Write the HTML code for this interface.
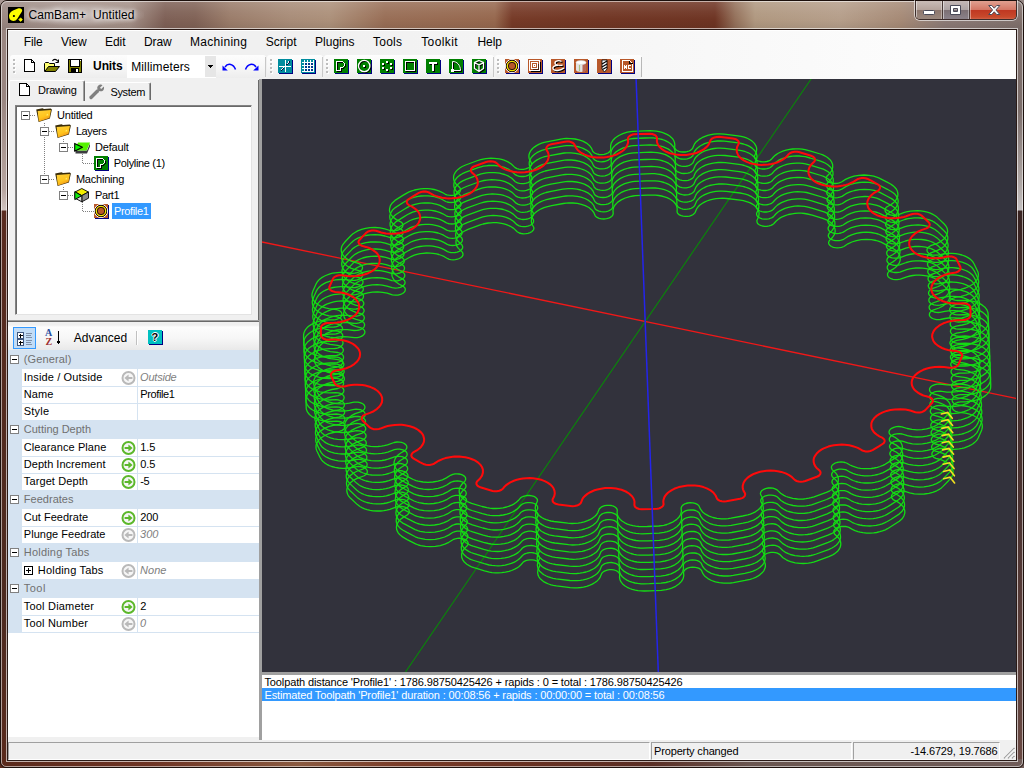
<!DOCTYPE html>
<html><head><meta charset="utf-8"><title>CamBam+ Untitled</title>
<style>
*{box-sizing:border-box}
html,body{margin:0;padding:0}
body{width:1024px;height:768px;position:relative;overflow:hidden;background:#5a2c20;font-family:"Liberation Sans",sans-serif;font-size:11px}
.a{position:absolute}
.t{position:absolute;white-space:pre}
svg{position:absolute;overflow:visible}
.px{shape-rendering:crispEdges}
</style></head>
<body>
<!-- b_frame -->
<div class="a" style="left:0px;top:0px;width:1024px;height:768px;background:#4c2a22"></div>
<div class="a" style="left:0px;top:0px;width:8px;height:768px;background:linear-gradient(180deg,#9a8681 0px,#9a8681 100px,#b8a6a0 190px,#d0c4c0 210px,#5a2c20 211px,#4c2a20 600px,#5a2a1c 768px)"></div>
<div class="a" style="left:1016px;top:0px;width:8px;height:768px;background:linear-gradient(180deg,#80706c 0px,#7c6e6b 110px,#b0a8a6 185px,#c4c0c0 210px,#3a2422 211px,#4a3230 500px,#6a4a44 768px)"></div>
<div class="a" style="left:0px;top:759px;width:1024px;height:9px;background:linear-gradient(90deg,#5a2a1c 0px,#6e3424 150px,#8a5a40 300px,#7a3c28 400px,#6a3222 512px,#5a2e24 650px,#6a5650 750px,#705c58 1024px)"></div>
<div class="a" style="left:0px;top:0px;width:1024px;height:30px;background:linear-gradient(90deg,#9a8681 0px,#a5938c 60px,#a38f86 130px,#7e6056 165px,#806256 195px,#9a7c6a 230px,#a88c78 290px,#ac907a 330px,#986e56 385px,#96684e 495px,#763a27 512px,#713624 600px,#6e3423 715px,#93705a 735px,#b09880 755px,#b59e8a 840px,#a68a76 900px,#8c7a76 945px,#80706c 1024px)"></div>
<div class="a" style="left:0px;top:0px;width:1024px;height:30px;background:linear-gradient(180deg,rgba(255,255,255,.16) 0,rgba(255,255,255,.05) 12px,rgba(0,0,0,0) 20px,rgba(0,0,0,.08) 30px)"></div>
<div class="a" style="left:0px;top:0px;width:1024px;height:768px;border:1px solid #1c100c;border-radius:7px 7px 6px 6px"></div>
<div class="a" style="left:1px;top:1px;width:1022px;height:766px;border:1px solid rgba(255,255,255,.55);border-radius:6px 6px 5px 5px"></div>
<div class="a" style="left:6px;top:28px;width:1012px;height:734px;border:1px solid rgba(255,255,255,.62)"></div>
<div class="a" style="left:7px;top:29px;width:1010px;height:732px;border:1px solid #2a1a16"></div>
<div class="a" style="left:8px;top:30px;width:1008px;height:730px;background:#f0f0f0"></div>
<div class="a" style="left:22px;top:4px;width:122px;height:22px;background:radial-gradient(ellipse at center,rgba(255,255,255,.36) 0,rgba(255,255,255,.22) 45%,rgba(255,255,255,0) 75%)"></div>
<span id="t1" class="t" style="left:28.5px;top:7.5px;font-size:12px;line-height:15px;color:#000;letter-spacing:0.096px;text-shadow:0 0 4px #fff,0 0 6px #fff">CamBam+  Untitled</span>
<svg style="left:8px;top:7px" width="16" height="16" viewBox="0 0 16 16"><rect width="16" height="16" fill="#000"/><path d="M1.2,10.5C0.5,7.5 2,5 5,3.5L10.5,1.3C12.5,0.8 14.3,1.8 14.2,3.6C14,5 13,6.2 11.5,8.2L9.5,11.5C8,13.8 5.5,14.6 3.6,13.6C2.3,13 1.5,12 1.2,10.5Z" fill="#ffff00"/><circle cx="5.9" cy="9" r="1.1" fill="#000"/><path d="M12.6,10.9L14.4,12.6L12.6,14.4L10.9,12.6Z" fill="#ffff00" stroke="#ffff00" stroke-width=".8" stroke-linejoin="round"/></svg>
<div class="a" style="left:914px;top:0px;width:104px;height:21px;border:1px solid rgba(255,255,255,.6);border-top:none;border-radius:0 0 6px 6px"></div>
<div class="a" style="left:915px;top:1px;width:102px;height:19px;border:1px solid #3c2c2a;border-top:none;border-radius:0 0 5px 5px;overflow:hidden"><div class="a" style="left:0px;top:0px;width:27px;height:19px;background:linear-gradient(180deg,#c9bcb6 0,#b5a49c 45%,#8d776e 50%,#9c8a80 100%);border-right:1px solid #4a3a36;box-shadow:inset 1px 0 0 rgba(255,255,255,.5),inset -1px 0 0 rgba(255,255,255,.35),inset 0 -1px 0 rgba(255,255,255,.35)"></div><div class="a" style="left:27px;top:0px;width:27px;height:19px;background:linear-gradient(180deg,#c4b8b6 0,#aea4a4 45%,#7c7074 50%,#8c848c 100%);border-right:1px solid #4a3a36;box-shadow:inset 1px 0 0 rgba(255,255,255,.5),inset -1px 0 0 rgba(255,255,255,.35),inset 0 -1px 0 rgba(255,255,255,.35)"></div><div class="a" style="left:54px;top:0px;width:47px;height:19px;background:linear-gradient(180deg,#e0a090 0,#d47866 45%,#c03822 50%,#c84a2c 85%,#d8705a 100%);box-shadow:inset 1px 0 0 rgba(255,255,255,.4),inset -1px 0 0 rgba(255,255,255,.35),inset 0 -1px 0 rgba(255,255,255,.35)"></div></div>
<svg style="left:923px;top:10px" width="13" height="6"><rect x="0.5" y="0.5" width="11" height="4" rx="1" fill="#fff" stroke="#4a4a58"/></svg>
<svg style="left:950px;top:4.5px" width="12" height="11"><path d="M0.5,0.5H10.5V9.5H0.5ZM3.5,3.5V6.5H7.5V3.5Z" fill="#fff" fill-rule="evenodd" stroke="#4a4a58"/></svg>
<svg style="left:988px;top:4.5px" width="13" height="11" viewBox="0 0 13 11"><path d="M0.7,0.5H3.8L6.25,3.2L8.7,0.5H11.8L7.9,5L11.8,9.5H8.7L6.25,6.8L3.8,9.5H0.7L4.6,5Z" fill="#fff" stroke="#4a4a58" stroke-width="1" stroke-linejoin="round"/></svg>
<!-- b_menu -->
<div class="a" style="left:8px;top:30px;width:1008px;height:49px;background:linear-gradient(90deg,#f0f0f0 0,#f0f0f0 300px,#fcfcfc 900px)"></div>
<div class="a" style="left:8px;top:30px;width:1008px;height:1px;background:#fff"></div>
<span id="t2" class="t" style="left:23.8px;top:34.9px;font-size:12px;line-height:15px;color:#000;letter-spacing:-0.161px;">File</span>
<span id="t3" class="t" style="left:61.0px;top:34.9px;font-size:12px;line-height:15px;color:#000;letter-spacing:-0.074px;">View</span>
<span id="t4" class="t" style="left:105.0px;top:34.9px;font-size:12px;line-height:15px;color:#000;letter-spacing:-0.047px;">Edit</span>
<span id="t5" class="t" style="left:144.1px;top:34.9px;font-size:12px;line-height:15px;color:#000;letter-spacing:-0.154px;">Draw</span>
<span id="t6" class="t" style="left:190.0px;top:34.9px;font-size:12px;line-height:15px;color:#000;letter-spacing:0.289px;">Machining</span>
<span id="t7" class="t" style="left:265.8px;top:34.9px;font-size:12px;line-height:15px;color:#000;letter-spacing:0.002px;">Script</span>
<span id="t8" class="t" style="left:315.0px;top:34.9px;font-size:12px;line-height:15px;color:#000;letter-spacing:0.020px;">Plugins</span>
<span id="t9" class="t" style="left:373.0px;top:34.9px;font-size:12px;line-height:15px;color:#000;letter-spacing:0.257px;">Tools</span>
<span id="t10" class="t" style="left:421.2px;top:34.9px;font-size:12px;line-height:15px;color:#000;letter-spacing:0.398px;">Toolkit</span>
<span id="t11" class="t" style="left:477.5px;top:34.9px;font-size:12px;line-height:15px;color:#000;letter-spacing:-0.072px;">Help</span>
<div class="a" style="left:10px;top:55px;width:256px;height:23px;background:linear-gradient(180deg,#fdfdfd 0,#f7f7f7 50%,#ededed 100%);border-radius:3px"></div>
<div class="a" style="left:265px;top:57px;width:1px;height:20px;background:#c8c8c8"></div>
<div class="a" style="left:267px;top:55px;width:56px;height:23px;background:linear-gradient(180deg,#fdfdfd 0,#f7f7f7 50%,#ededed 100%);border-radius:3px"></div>
<div class="a" style="left:322px;top:57px;width:1px;height:20px;background:#c8c8c8"></div>
<div class="a" style="left:324px;top:55px;width:170px;height:23px;background:linear-gradient(180deg,#fdfdfd 0,#f7f7f7 50%,#ededed 100%);border-radius:3px"></div>
<div class="a" style="left:493px;top:57px;width:1px;height:20px;background:#c8c8c8"></div>
<div class="a" style="left:495px;top:55px;width:147px;height:23px;background:linear-gradient(180deg,#fdfdfd 0,#f7f7f7 50%,#ededed 100%);border-radius:3px"></div>
<div class="a" style="left:641px;top:57px;width:1px;height:20px;background:#b8b8b8"></div>
<div class="a" style="left:14px;top:60px;width:2px;height:2px;background:#fff"></div><div class="a" style="left:13px;top:59px;width:2px;height:2px;background:#bdbdbd"></div><div class="a" style="left:14px;top:64px;width:2px;height:2px;background:#fff"></div><div class="a" style="left:13px;top:63px;width:2px;height:2px;background:#bdbdbd"></div><div class="a" style="left:14px;top:68px;width:2px;height:2px;background:#fff"></div><div class="a" style="left:13px;top:67px;width:2px;height:2px;background:#bdbdbd"></div><div class="a" style="left:14px;top:72px;width:2px;height:2px;background:#fff"></div><div class="a" style="left:13px;top:71px;width:2px;height:2px;background:#bdbdbd"></div>
<div class="a" style="left:271px;top:60px;width:2px;height:2px;background:#fff"></div><div class="a" style="left:270px;top:59px;width:2px;height:2px;background:#bdbdbd"></div><div class="a" style="left:271px;top:64px;width:2px;height:2px;background:#fff"></div><div class="a" style="left:270px;top:63px;width:2px;height:2px;background:#bdbdbd"></div><div class="a" style="left:271px;top:68px;width:2px;height:2px;background:#fff"></div><div class="a" style="left:270px;top:67px;width:2px;height:2px;background:#bdbdbd"></div><div class="a" style="left:271px;top:72px;width:2px;height:2px;background:#fff"></div><div class="a" style="left:270px;top:71px;width:2px;height:2px;background:#bdbdbd"></div>
<div class="a" style="left:327px;top:60px;width:2px;height:2px;background:#fff"></div><div class="a" style="left:326px;top:59px;width:2px;height:2px;background:#bdbdbd"></div><div class="a" style="left:327px;top:64px;width:2px;height:2px;background:#fff"></div><div class="a" style="left:326px;top:63px;width:2px;height:2px;background:#bdbdbd"></div><div class="a" style="left:327px;top:68px;width:2px;height:2px;background:#fff"></div><div class="a" style="left:326px;top:67px;width:2px;height:2px;background:#bdbdbd"></div><div class="a" style="left:327px;top:72px;width:2px;height:2px;background:#fff"></div><div class="a" style="left:326px;top:71px;width:2px;height:2px;background:#bdbdbd"></div>
<div class="a" style="left:498px;top:60px;width:2px;height:2px;background:#fff"></div><div class="a" style="left:497px;top:59px;width:2px;height:2px;background:#bdbdbd"></div><div class="a" style="left:498px;top:64px;width:2px;height:2px;background:#fff"></div><div class="a" style="left:497px;top:63px;width:2px;height:2px;background:#bdbdbd"></div><div class="a" style="left:498px;top:68px;width:2px;height:2px;background:#fff"></div><div class="a" style="left:497px;top:67px;width:2px;height:2px;background:#bdbdbd"></div><div class="a" style="left:498px;top:72px;width:2px;height:2px;background:#fff"></div><div class="a" style="left:497px;top:71px;width:2px;height:2px;background:#bdbdbd"></div>
<svg class="px" style="left:24px;top:59px" width="11" height="13" viewBox="0 0 11 13"><path d="M0.5,0.5H7.5L10.5,3.5V12.5H0.5Z" fill="#fff" stroke="#000"/><path d="M7.5,0.5V3.5H10.5" fill="none" stroke="#000"/></svg>
<svg class="" style="left:44px;top:58px" width="16" height="14" viewBox="0 0 16 14"><path d="M0.5,13.5V5.5L1.5,4.5H4.5L5.5,5.5H10.5V8.5" fill="#ffff70" stroke="#000"/><path d="M0.8,13.5L4.5,8.5H15.5L11.5,13.5Z" fill="#808000" stroke="#000"/><path d="M8.5,3C9.5,0.8 12.5,0.6 14,3.6" fill="none" stroke="#000" stroke-width="1.1"/><path d="M11.5,4.5H14.5V1.5" fill="none" stroke="#000"/></svg>
<svg class="px" style="left:68px;top:59px" width="14" height="14" viewBox="0 0 14 14"><rect x="0.5" y="0.5" width="13" height="13" fill="#808000" stroke="#000"/><rect x="3" y="1" width="8" height="6" fill="#fff"/><rect x="2.5" y="0.5" width="9" height="7" fill="none" stroke="#000"/><rect x="3" y="9" width="8" height="4" fill="#000"/><rect x="8" y="10" width="2" height="3" fill="#fff"/><rect x="12" y="1" width="1" height="1" fill="#fff"/></svg>
<span id="t12" class="t" style="left:93.1px;top:58.5px;font-size:12px;line-height:15px;color:#000;letter-spacing:-0.120px;font-weight:bold">Units</span>
<div class="a" style="left:127px;top:55px;width:89px;height:23px;background:#fff"></div>
<div class="a" style="left:205px;top:56px;width:11px;height:21px;background:#e6e6e6"></div>
<span id="t13" class="t" style="left:131.2px;top:60.0px;font-size:12px;line-height:15px;color:#000;letter-spacing:0.132px;">Millimeters</span>
<svg style="left:208px;top:65px" width="6" height="4" class="px"><path d="M0,0H5L2.5,3Z" fill="#000"/></svg>
<svg class="" style="left:222px;top:61.5px" width="14" height="9" viewBox="0 0 14 9"><g><path d="M13.5,7.5C11.5,2 6,0.5 3,5" fill="none" stroke="#00f" stroke-width="1.5"/><path d="M0.5,3.5V8.5H5.8Z" fill="#00f"/></g></svg>
<svg class="" style="left:245px;top:61.5px" width="14" height="9" viewBox="0 0 14 9"><g transform="translate(14,0) scale(-1,1)"><path d="M13.5,7.5C11.5,2 6,0.5 3,5" fill="none" stroke="#00f" stroke-width="1.5"/><path d="M0.5,3.5V8.5H5.8Z" fill="#00f"/></g></svg>
<svg class="px" style="left:278px;top:59px" width="15" height="15" viewBox="0 0 15 15"><rect x="1" y="1" width="14" height="14" fill="#000080"/><rect x="0" y="0" width="14" height="14" fill="#008c9e"/><path d="M1,7.5H13M7.5,1V13" stroke="#fff" fill="none"/><path d="M12,2.5L8.8,5.8M6.2,8.8L3,12" stroke="#001040" fill="none" stroke-width="1.1"/><path d="M11.2,2.3L8.2,5.4M5.6,8.2L2.4,11.4" stroke="#fff" fill="none" stroke-width=".9"/></svg>
<svg class="px" style="left:301px;top:59px" width="15" height="15" viewBox="0 0 15 15"><rect x="1" y="1" width="14" height="14" fill="#000080"/><rect x="0" y="0" width="14" height="14" fill="#008c9e"/><path d="M1,3.5H13M1,6.5H13M1,9.5H13M1,12.5H13M3.5,1V13M6.5,1V13M9.5,1V13M12.5,1V13" stroke="#fff" fill="none"/><rect x="4" y="4" width="2" height="2" fill="#003a8c"/><rect x="4" y="7" width="2" height="2" fill="#003a8c"/><rect x="4" y="10" width="2" height="2" fill="#003a8c"/><rect x="7" y="4" width="2" height="2" fill="#003a8c"/><rect x="7" y="7" width="2" height="2" fill="#003a8c"/><rect x="7" y="10" width="2" height="2" fill="#003a8c"/><rect x="10" y="4" width="2" height="2" fill="#003a8c"/><rect x="10" y="7" width="2" height="2" fill="#003a8c"/><rect x="10" y="10" width="2" height="2" fill="#003a8c"/></svg>
<svg class="px" style="left:334px;top:59px" width="15" height="15" viewBox="0 0 15 15"><rect x="1" y="1" width="14" height="14" fill="#000080"/><rect x="0" y="0" width="14" height="14" fill="#008000"/><path d="M2.5,2.5H8.5L10.5,4.5V6.5L8.5,8.5H6.5V11.5H2.5Z" transform="translate(1,1)" fill="none" stroke="#000" stroke-width="1" /><path d="M2.5,2.5H8.5L10.5,4.5V6.5L8.5,8.5H6.5V11.5H2.5Z" fill="none" stroke="#fff" stroke-width="1" /></svg>
<svg class="" style="left:357px;top:59px" width="15" height="15" viewBox="0 0 15 15"><rect x="1" y="1" width="14" height="14" fill="#000080"/><rect width="14" height="14" fill="#008000"/><circle cx="8.2" cy="8" r="5.7" fill="none" stroke="#000" stroke-width="1.1"/><circle cx="7.2" cy="7" r="5.7" fill="none" stroke="#fff" stroke-width="1.3"/><rect x="7" y="7" width="2" height="2" fill="#000"/><rect x="6" y="6" width="2" height="2" fill="#fff"/></svg>
<svg class="px" style="left:380px;top:59px" width="15" height="15" viewBox="0 0 15 15"><rect x="1" y="1" width="14" height="14" fill="#000080"/><rect x="0" y="0" width="14" height="14" fill="#008000"/><rect x="7" y="3" width="2" height="2" fill="#000"/><rect x="6" y="2" width="2" height="2" fill="#fff"/><rect x="11" y="5" width="2" height="2" fill="#000"/><rect x="10" y="4" width="2" height="2" fill="#fff"/><rect x="11" y="9" width="2" height="2" fill="#000"/><rect x="10" y="8" width="2" height="2" fill="#fff"/><rect x="7" y="11" width="2" height="2" fill="#000"/><rect x="6" y="10" width="2" height="2" fill="#fff"/><rect x="3" y="9" width="2" height="2" fill="#000"/><rect x="2" y="8" width="2" height="2" fill="#fff"/><rect x="3" y="5" width="2" height="2" fill="#000"/><rect x="2" y="4" width="2" height="2" fill="#fff"/></svg>
<svg class="px" style="left:403px;top:59px" width="15" height="15" viewBox="0 0 15 15"><rect x="1" y="1" width="14" height="14" fill="#000080"/><rect x="0" y="0" width="14" height="14" fill="#008000"/><path d="M2.5,2.5H11.5V11.5H2.5Z" transform="translate(1,1)" fill="none" stroke="#000" stroke-width="1" /><path d="M2.5,2.5H11.5V11.5H2.5Z" fill="none" stroke="#fff" stroke-width="1" /></svg>
<svg class="px" style="left:426px;top:59px" width="15" height="15" viewBox="0 0 15 15"><rect x="1" y="1" width="14" height="14" fill="#000080"/><rect x="0" y="0" width="14" height="14" fill="#008000"/><path d="M3,3H11V5H8V12H6V5H3Z" transform="translate(1,1)" fill="#000"/><path d="M3,3H11V5H8V12H6V5H3Z" fill="#fff"/></svg>
<svg class="" style="left:449px;top:59px" width="15" height="15" viewBox="0 0 15 15"><rect x="1" y="1" width="14" height="14" fill="#000080"/><rect width="14" height="14" fill="#008000"/><path d="M3.5,11.5V2.5C8,2.5 11.5,6 11.5,11.5Z" transform="translate(1,1)" fill="none" stroke="#000" stroke-width="1" /><path d="M3.5,11.5V2.5C8,2.5 11.5,6 11.5,11.5Z" fill="none" stroke="#fff" stroke-width="1" /><rect x="2" y="10" width="3" height="3" fill="#fff"/></svg>
<svg class="" style="left:472px;top:59px" width="15" height="15" viewBox="0 0 15 15"><rect x="1" y="1" width="14" height="14" fill="#000080"/><rect width="14" height="14" fill="#008000"/><path d="M7,1.5L11.5,3.5V9.5L7,12.5L2.5,9.5V3.5ZM2.5,3.5L7,6L11.5,3.5M7,6V12.5" transform="translate(1,1)" fill="none" stroke="#000" stroke-width="1.25" /><path d="M7,1.5L11.5,3.5V9.5L7,12.5L2.5,9.5V3.5ZM2.5,3.5L7,6L11.5,3.5M7,6V12.5" fill="none" stroke="#fff" stroke-width="1.25" /></svg>
<svg class="" style="left:505px;top:59px" width="15" height="15" viewBox="0 0 15 15"><rect x="1" y="1" width="14" height="14" fill="#000080"/><rect width="14" height="14" fill="#b8582a"/><circle cx="7" cy="7" r="6.6" fill="none" stroke="#fff" stroke-width="1"/><circle cx="7" cy="7" r="5.7" fill="#b8582a" stroke="#000" stroke-width="1"/><circle cx="7" cy="7" r="4.7" fill="none" stroke="#f4e800" stroke-width="1.3"/><circle cx="7" cy="7" r="3.7" fill="none" stroke="#000" stroke-width=".8"/></svg>
<svg class="px" style="left:528px;top:59px" width="15" height="15" viewBox="0 0 15 15"><rect x="1" y="1" width="14" height="14" fill="#000080"/><rect x="0" y="0" width="14" height="14" fill="#b8582a"/><path d="M2.5,12.5H12.5V2.5" fill="none" stroke="#000"/><path d="M1.5,1.5H11.5V11.5H1.5Z" fill="none" stroke="#fff"/><path d="M3.5,3.5H9.5V9.5H3.5Z" fill="none" stroke="#fff"/><path d="M4.5,10.5H10.5V4.5" fill="none" stroke="#000" opacity=".55"/><rect x="5" y="5" width="3" height="3" fill="#fff"/><rect x="6" y="6" width="1" height="1" fill="#b8582a"/></svg>
<svg class="" style="left:551px;top:59px" width="15" height="15" viewBox="0 0 15 15"><rect x="1" y="1" width="14" height="14" fill="#000080"/><rect width="14" height="14" fill="#b8582a"/><path d="M10.5,2.5C8,1 3.8,1.6 4,4.2C4.2,6.6 8,6.4 11.5,6.3M7,6.4C3,6.4 1,8.2 2.2,10.2C3.6,12.4 9.5,11.8 13,9" transform="translate(1,1)" fill="none" stroke="#000" stroke-width="1.4" /><path d="M10.5,2.5C8,1 3.8,1.6 4,4.2C4.2,6.6 8,6.4 11.5,6.3M7,6.4C3,6.4 1,8.2 2.2,10.2C3.6,12.4 9.5,11.8 13,9" fill="none" stroke="#fff" stroke-width="1.4" /></svg>
<svg class="" style="left:574px;top:59px" width="15" height="15" viewBox="0 0 15 15"><rect x="1" y="1" width="14" height="14" fill="#000080"/><rect width="14" height="14" fill="#b8582a"/><path d="M2,3.5V11C2,13.6 12,13.6 12,11V3.5Z" fill="#e4e4e4"/><path d="M8.5,5V13C11,12.6 12,12 12,11V4Z" fill="#a83c28" opacity=".75"/><ellipse cx="7" cy="3.5" rx="5" ry="2" fill="#fff" stroke="#d0d0d0" stroke-width=".6"/><path d="M5.5,6.5V12" stroke="#7a9a20" stroke-width="1.2" stroke-dasharray="1,1"/></svg>
<svg class="" style="left:597px;top:59px" width="15" height="15" viewBox="0 0 15 15"><rect x="1" y="1" width="14" height="14" fill="#000080"/><rect width="14" height="14" fill="#b8582a"/><path d="M5,1H10V10L7.5,13L5,10Z" fill="#fff" stroke="#000" stroke-width=".8"/><path d="M5,5L10,2M5,8L10,5M5.5,10.5L10,8" stroke="#000" stroke-width="1.2"/></svg>
<svg class="px" style="left:620px;top:59px" width="15" height="15" viewBox="0 0 15 15"><rect x="1" y="1" width="14" height="14" fill="#000080"/><rect x="0" y="0" width="14" height="14" fill="#b8582a"/><path d="M2.5,1.5H9.5L12.5,4.5V12.5H2.5Z" fill="#b8582a" stroke="#fff"/><path d="M9.5,1.5V4.5H12.5" fill="none" stroke="#000"/><path d="M4.5,10V6L6.5,10V6" fill="none" stroke="#fff" stroke-linejoin="miter"/><path d="M11,6.5H8.5V9.5H11" fill="none" stroke="#fff"/></svg>
<!-- b_left -->
<div class="a" style="left:9px;top:80px;width:76px;height:21px;background:#f0f0f0;border:1px solid #fff;border-right:1px solid #696969;border-bottom:none;border-radius:2px 2px 0 0;box-shadow:inset -1px 0 0 #a0a0a0"></div>
<div class="a" style="left:85px;top:82px;width:66px;height:18px;background:#f0f0f0;border-top:1px solid #fff;border-right:1px solid #696969;border-radius:0 2px 0 0;box-shadow:inset -1px 0 0 #a0a0a0"></div>
<svg class="px" style="left:19px;top:82.5px" width="11" height="13" viewBox="0 0 11 13"><path d="M0.5,0.5H7.5L10.5,3.5V12.5H0.5Z" fill="#fff" stroke="#000"/><path d="M7.5,0.5V3.5H10.5" fill="none" stroke="#000"/></svg>
<span id="t14" class="t" style="left:38.1px;top:83.0px;font-size:11px;line-height:14px;color:#000;letter-spacing:-0.280px;">Drawing</span>
<svg class="" style="left:89px;top:84px" width="16" height="15" viewBox="0 0 16 15"><path d="M2,13.5L8.5,7" stroke="#808080" stroke-width="3.3" stroke-linecap="round"/><path d="M13.5,1.2L11,3.8L12.2,5L14.8,2.6C15.6,4.6 14.8,6.6 13,7.2C11,7.8 9,6.8 8.4,5C7.8,3 9,1 11,0.5C12,0.3 13,0.6 13.5,1.2Z" fill="#808080"/></svg>
<span id="t15" class="t" style="left:110.5px;top:84.5px;font-size:11px;line-height:14px;color:#000;letter-spacing:-0.365px;">System</span>
<div class="a" style="left:8px;top:101px;width:1px;height:220px;background:#fff"></div>
<div class="a" style="left:258px;top:80px;width:1px;height:242px;background:#696969"></div>
<div class="a" style="left:8px;top:320px;width:251px;height:1px;background:#a0a0a0"></div>
<div class="a" style="left:8px;top:321px;width:251px;height:1px;background:#696969"></div>
<div class="a" style="left:15px;top:105px;width:237px;height:210px;background:#fff;border:1px solid #828282;border-right-color:#e3e3e3;border-bottom-color:#e3e3e3;box-shadow:inset 1px 1px 0 #696969"></div>
<svg class="px" style="left:0;top:0" width="262" height="330"><path d="M30,115.5H36M44.5,123V179M49,131.5H55M63.5,139V142M68,147.5H74M82.5,154V163.5H94M49,179.5H55M63.5,187V190M68,195.5H74M82.5,202V211.5H94" stroke="#808080" stroke-dasharray="1,1" fill="none"/></svg>
<svg class="px" style="left:21px;top:110.5px" width="9" height="9" viewBox="0 0 9 9"><rect x="0.5" y="0.5" width="8" height="8" fill="#fff" stroke="#808080"/><path d="M2,4.5H7" stroke="#000"/></svg>
<svg class="" style="left:36px;top:108px" width="16" height="14" viewBox="0 0 16 14"><defs><linearGradient id="fg" x1="0" y1="0" x2=".5" y2="1"><stop offset="0" stop-color="#ffd23c"/><stop offset=".65" stop-color="#ffc41c"/><stop offset="1" stop-color="#f09418"/></linearGradient></defs><path d="M0.2,1.6L6.5,0.2L8,1L14.8,0.4L15.9,1.6L13.9,10.6L2.6,14Z" fill="#3a2c08"/><path d="M1.6,3L14.9,1.9L13.5,10.1L2.9,13.4Z" fill="url(#fg)"/><path d="M11,5.5L12.6,7.2L10.4,7.6Z" fill="#ffee70"/></svg>
<span id="t16" class="t" style="left:57.1px;top:108.0px;font-size:11px;line-height:14px;color:#000;letter-spacing:-0.237px;">Untitled</span>
<svg class="px" style="left:40px;top:126.5px" width="9" height="9" viewBox="0 0 9 9"><rect x="0.5" y="0.5" width="8" height="8" fill="#fff" stroke="#808080"/><path d="M2,4.5H7" stroke="#000"/></svg>
<svg class="" style="left:55px;top:124px" width="16" height="14" viewBox="0 0 16 14"><defs><linearGradient id="fg" x1="0" y1="0" x2=".5" y2="1"><stop offset="0" stop-color="#ffd23c"/><stop offset=".65" stop-color="#ffc41c"/><stop offset="1" stop-color="#f09418"/></linearGradient></defs><path d="M0.2,1.6L6.5,0.2L8,1L14.8,0.4L15.9,1.6L13.9,10.6L2.6,14Z" fill="#3a2c08"/><path d="M1.6,3L14.9,1.9L13.5,10.1L2.9,13.4Z" fill="url(#fg)"/><path d="M11,5.5L12.6,7.2L10.4,7.6Z" fill="#ffee70"/></svg>
<span id="t17" class="t" style="left:75.9px;top:124.0px;font-size:11px;line-height:14px;color:#000;letter-spacing:-0.405px;">Layers</span>
<svg class="px" style="left:59px;top:142.5px" width="9" height="9" viewBox="0 0 9 9"><rect x="0.5" y="0.5" width="8" height="8" fill="#fff" stroke="#808080"/><path d="M2,4.5H7" stroke="#000"/></svg>
<svg class="" style="left:74px;top:142px" width="16" height="13" viewBox="0 0 16 13"><path d="M1.8,8.6H13L16,1.4V4.6L13,11.6H1.4Z" fill="#3c3c40"/><path d="M4,0.5H16L12.6,8.5H0.5Z" fill="#55f200"/><path d="M0.7,1.4L8.4,5.2L0.7,9.2Z" fill="#0cf000" stroke="#000" stroke-width="1.1" stroke-linejoin="round"/></svg>
<span id="t18" class="t" style="left:95.1px;top:140.0px;font-size:11px;line-height:14px;color:#000;letter-spacing:-0.208px;">Default</span>
<svg class="px" style="left:94px;top:155.5px" width="15" height="15" viewBox="0 0 15 15"><rect x="1" y="1" width="14" height="14" fill="#000080"/><rect x="0" y="0" width="14" height="14" fill="#008000"/><path d="M2.5,2.5H8.5L10.5,4.5V6.5L8.5,8.5H6.5V11.5H2.5Z" transform="translate(1,1)" fill="none" stroke="#000" stroke-width="1" /><path d="M2.5,2.5H8.5L10.5,4.5V6.5L8.5,8.5H6.5V11.5H2.5Z" fill="none" stroke="#fff" stroke-width="1" /></svg>
<span id="t19" class="t" style="left:113.8px;top:156.0px;font-size:11px;line-height:14px;color:#000;letter-spacing:-0.336px;">Polyline (1)</span>
<svg class="px" style="left:40px;top:174.5px" width="9" height="9" viewBox="0 0 9 9"><rect x="0.5" y="0.5" width="8" height="8" fill="#fff" stroke="#808080"/><path d="M2,4.5H7" stroke="#000"/></svg>
<svg class="" style="left:55px;top:172px" width="16" height="14" viewBox="0 0 16 14"><defs><linearGradient id="fg" x1="0" y1="0" x2=".5" y2="1"><stop offset="0" stop-color="#ffd23c"/><stop offset=".65" stop-color="#ffc41c"/><stop offset="1" stop-color="#f09418"/></linearGradient></defs><path d="M0.2,1.6L6.5,0.2L8,1L14.8,0.4L15.9,1.6L13.9,10.6L2.6,14Z" fill="#3a2c08"/><path d="M1.6,3L14.9,1.9L13.5,10.1L2.9,13.4Z" fill="url(#fg)"/><path d="M11,5.5L12.6,7.2L10.4,7.6Z" fill="#ffee70"/></svg>
<span id="t20" class="t" style="left:75.9px;top:172.0px;font-size:11px;line-height:14px;color:#000;letter-spacing:-0.205px;">Machining</span>
<svg class="px" style="left:59px;top:190.5px" width="9" height="9" viewBox="0 0 9 9"><rect x="0.5" y="0.5" width="8" height="8" fill="#fff" stroke="#808080"/><path d="M2,4.5H7" stroke="#000"/></svg>
<svg class="" style="left:74px;top:187.7px" width="16" height="15" viewBox="0 0 16 15"><path d="M7.8,0.5L14.5,4L7.8,7.6L1,4Z" fill="#f4f000" stroke="#000" stroke-width=".9" stroke-linejoin="round"/><path d="M14.5,4L7.8,7.6V13.8L14.5,10.2Z" fill="#8c8c8c" stroke="#000" stroke-width=".9" stroke-linejoin="round"/><path d="M1,4L7.8,7.6V13.8L1,10.2Z" fill="#d8d8d8" stroke="#000" stroke-width=".9" stroke-linejoin="round"/><path d="M0.8,3.6L7.6,7.8L0.8,11.6Z" fill="#10e810" stroke="#000" stroke-width="1" stroke-linejoin="round"/></svg>
<span id="t21" class="t" style="left:95.1px;top:188.0px;font-size:11px;line-height:14px;color:#000;letter-spacing:-0.459px;">Part1</span>
<svg class="" style="left:94px;top:203.5px" width="15" height="15" viewBox="0 0 15 15"><rect x="1" y="1" width="14" height="14" fill="#000080"/><rect width="14" height="14" fill="#b8582a"/><circle cx="7" cy="7" r="6.6" fill="none" stroke="#fff" stroke-width="1"/><circle cx="7" cy="7" r="5.7" fill="#b8582a" stroke="#000" stroke-width="1"/><circle cx="7" cy="7" r="4.7" fill="none" stroke="#f4e800" stroke-width="1.3"/><circle cx="7" cy="7" r="3.7" fill="none" stroke="#000" stroke-width=".8"/></svg>
<div class="a" style="left:112px;top:203px;width:39px;height:16px;background:#3399ff"></div>
<span id="t22" class="t" style="left:114.0px;top:204.0px;font-size:11px;line-height:14px;color:#fff;letter-spacing:-0.350px;">Profile1</span>
<div class="a" style="left:8px;top:322px;width:251px;height:415px;background:#fff"></div>
<div class="a" style="left:8px;top:322px;width:251px;height:28px;background:linear-gradient(180deg,#f0f0f0 0,#f0f0f0 3px,#fdfdfd 5px,#f6f6f6 60%,#e9e9e9 100%)"></div>
<div class="a" style="left:13px;top:327px;width:23px;height:22px;background:#c2dcf6;border:1px solid #3399ff"></div>
<svg class="px" style="left:17px;top:330px" width="16" height="17" viewBox="0 0 16 17"><rect x="0.5" y="2.5" width="6" height="6" fill="#fff" stroke="#405880"/><path d="M2,5.5H6M3.5,4V8" stroke="#000" stroke-width="1"/><path d="M9,3.5H15M9,5.5H14M9,7.5H15" stroke="#8090a8"/><rect x="0.5" y="9.5" width="6" height="6" fill="#fff" stroke="#405880"/><path d="M2,12.5H6M3.5,11V15" stroke="#000" stroke-width="1"/><path d="M9,10.5H15M9,12.5H14M9,14.5H15" stroke="#8090a8"/></svg>
<span class="t" style="left:45px;top:328px;font:bold 10px/10px 'Liberation Serif',serif;color:#2850a0">A</span>
<span class="t" style="left:45.5px;top:336.5px;font:bold 10px/10px 'Liberation Serif',serif;color:#a03030">Z</span>
<svg class="px" style="left:55px;top:331px" width="7" height="14" viewBox="0 0 7 14"><path d="M3.5,0V12" stroke="#000"/><path d="M1,9.5H6L3.5,13.5Z" fill="#000"/></svg>
<span id="t23" class="t" style="left:73.8px;top:330.9px;font-size:12px;line-height:15px;color:#000;letter-spacing:-0.009px;">Advanced</span>
<div class="a" style="left:136px;top:331px;width:1px;height:14px;background:#c0c0c0"></div>
<div class="a" style="left:137px;top:331px;width:1px;height:14px;background:#fff"></div>
<svg class="px" style="left:148px;top:330px" width="15" height="15" viewBox="0 0 15 15"><rect x="1" y="1" width="14" height="14" fill="#000080"/><rect width="14" height="14" fill="#00c0c0"/></svg>
<span class="t" style="left:151.5px;top:331px;font:bold 11px/12px 'Liberation Sans',sans-serif;color:#000;text-shadow:-1px 0 #fff,0 -1px #fff,1px 0 #fff,0 1px #fff">?</span>
<div class="a" style="left:8px;top:350px;width:251px;height:283px;background:#d5e3f1"></div>
<svg class="px" style="left:10px;top:355px" width="9" height="9" viewBox="0 0 9 9"><rect x="0.5" y="0.5" width="8" height="8" fill="#fff" stroke="#808080"/><path d="M2,4.5H7" stroke="#000"/></svg>
<span id="t24" class="t" style="left:23.8px;top:352.0px;font-size:11px;line-height:14px;color:#707070;letter-spacing:0.137px;">(General)</span>
<div class="a" style="left:22px;top:369px;width:115px;height:17px;background:#fff"></div>
<div class="a" style="left:138px;top:369px;width:121px;height:17px;background:#fff"></div>
<span id="t25" class="t" style="left:23.8px;top:370.0px;font-size:11px;line-height:14px;color:#000;letter-spacing:0.141px;">Inside / Outside</span>
<svg class="" style="left:121px;top:370.5px" width="15" height="14" viewBox="0 0 15 14"><circle cx="7.5" cy="7" r="6" fill="#f6f6f6" stroke="#b9b9b9" stroke-width="2"/><path d="M3.6,6H7.4V3.6L11.6,7L7.4,10.4V8H3.6Z" fill="#b9b9b9" transform="translate(15,0) scale(-1,1)"/></svg>
<span id="t26" class="t" style="left:140.1px;top:370.0px;font-size:11px;line-height:14px;color:#808080;letter-spacing:-0.217px;font-style:italic">Outside</span>
<div class="a" style="left:22px;top:387px;width:115px;height:16px;background:#fff"></div>
<div class="a" style="left:138px;top:387px;width:121px;height:16px;background:#fff"></div>
<span id="t27" class="t" style="left:23.8px;top:387.0px;font-size:11px;line-height:14px;color:#000;letter-spacing:0.039px;">Name</span>
<span id="t28" class="t" style="left:140.3px;top:387.0px;font-size:11px;line-height:14px;color:#000;letter-spacing:-0.387px;">Profile1</span>
<div class="a" style="left:22px;top:404px;width:115px;height:16px;background:#fff"></div>
<div class="a" style="left:138px;top:404px;width:121px;height:16px;background:#fff"></div>
<span id="t29" class="t" style="left:23.8px;top:404.0px;font-size:11px;line-height:14px;color:#000;letter-spacing:0.206px;">Style</span>
<svg class="px" style="left:10px;top:425px" width="9" height="9" viewBox="0 0 9 9"><rect x="0.5" y="0.5" width="8" height="8" fill="#fff" stroke="#808080"/><path d="M2,4.5H7" stroke="#000"/></svg>
<span id="t30" class="t" style="left:23.8px;top:422.0px;font-size:11px;line-height:14px;color:#707070;letter-spacing:-0.005px;">Cutting Depth</span>
<div class="a" style="left:22px;top:439px;width:115px;height:17px;background:#fff"></div>
<div class="a" style="left:138px;top:439px;width:121px;height:17px;background:#fff"></div>
<span id="t31" class="t" style="left:23.8px;top:440.0px;font-size:11px;line-height:14px;color:#000;letter-spacing:0.090px;">Clearance Plane</span>
<svg class="" style="left:121px;top:440.5px" width="15" height="14" viewBox="0 0 15 14"><circle cx="7.5" cy="7" r="6" fill="#f6f6f6" stroke="#5cb82c" stroke-width="2"/><path d="M3.6,6H7.4V3.6L11.6,7L7.4,10.4V8H3.6Z" fill="#5cb82c"/></svg>
<span id="t32" class="t" style="left:140.3px;top:440.0px;font-size:11px;line-height:14px;color:#000;letter-spacing:-0.132px;">1.5</span>
<div class="a" style="left:22px;top:457px;width:115px;height:16px;background:#fff"></div>
<div class="a" style="left:138px;top:457px;width:121px;height:16px;background:#fff"></div>
<span id="t33" class="t" style="left:23.8px;top:457.0px;font-size:11px;line-height:14px;color:#000;letter-spacing:0.025px;">Depth Increment</span>
<svg class="" style="left:121px;top:457.5px" width="15" height="14" viewBox="0 0 15 14"><circle cx="7.5" cy="7" r="6" fill="#f6f6f6" stroke="#5cb82c" stroke-width="2"/><path d="M3.6,6H7.4V3.6L11.6,7L7.4,10.4V8H3.6Z" fill="#5cb82c"/></svg>
<span id="t34" class="t" style="left:140.3px;top:457.0px;font-size:11px;line-height:14px;color:#000;letter-spacing:-0.132px;">0.5</span>
<div class="a" style="left:22px;top:474px;width:115px;height:16px;background:#fff"></div>
<div class="a" style="left:138px;top:474px;width:121px;height:16px;background:#fff"></div>
<span id="t35" class="t" style="left:23.8px;top:474.0px;font-size:11px;line-height:14px;color:#000;letter-spacing:0.110px;">Target Depth</span>
<svg class="" style="left:121px;top:474.5px" width="15" height="14" viewBox="0 0 15 14"><circle cx="7.5" cy="7" r="6" fill="#f6f6f6" stroke="#5cb82c" stroke-width="2"/><path d="M3.6,6H7.4V3.6L11.6,7L7.4,10.4V8H3.6Z" fill="#5cb82c"/></svg>
<span id="t36" class="t" style="left:140.3px;top:474.0px;font-size:11px;line-height:14px;color:#000;letter-spacing:-0.391px;">-5</span>
<svg class="px" style="left:10px;top:495px" width="9" height="9" viewBox="0 0 9 9"><rect x="0.5" y="0.5" width="8" height="8" fill="#fff" stroke="#808080"/><path d="M2,4.5H7" stroke="#000"/></svg>
<span id="t37" class="t" style="left:23.8px;top:492.0px;font-size:11px;line-height:14px;color:#707070;letter-spacing:0.019px;">Feedrates</span>
<div class="a" style="left:22px;top:509px;width:115px;height:17px;background:#fff"></div>
<div class="a" style="left:138px;top:509px;width:121px;height:17px;background:#fff"></div>
<span id="t38" class="t" style="left:23.8px;top:510.0px;font-size:11px;line-height:14px;color:#000;letter-spacing:0.008px;">Cut Feedrate</span>
<svg class="" style="left:121px;top:510.5px" width="15" height="14" viewBox="0 0 15 14"><circle cx="7.5" cy="7" r="6" fill="#f6f6f6" stroke="#5cb82c" stroke-width="2"/><path d="M3.6,6H7.4V3.6L11.6,7L7.4,10.4V8H3.6Z" fill="#5cb82c"/></svg>
<span id="t39" class="t" style="left:140.3px;top:510.0px;font-size:11px;line-height:14px;color:#000;letter-spacing:-0.120px;">200</span>
<div class="a" style="left:22px;top:527px;width:115px;height:16px;background:#fff"></div>
<div class="a" style="left:138px;top:527px;width:121px;height:16px;background:#fff"></div>
<span id="t40" class="t" style="left:23.8px;top:527.0px;font-size:11px;line-height:14px;color:#000;letter-spacing:0.024px;">Plunge Feedrate</span>
<svg class="" style="left:121px;top:527.5px" width="15" height="14" viewBox="0 0 15 14"><circle cx="7.5" cy="7" r="6" fill="#f6f6f6" stroke="#b9b9b9" stroke-width="2"/><path d="M3.6,6H7.4V3.6L11.6,7L7.4,10.4V8H3.6Z" fill="#b9b9b9" transform="translate(15,0) scale(-1,1)"/></svg>
<span id="t41" class="t" style="left:140.1px;top:527.0px;font-size:11px;line-height:14px;color:#808080;letter-spacing:0.014px;font-style:italic">300</span>
<svg class="px" style="left:10px;top:548px" width="9" height="9" viewBox="0 0 9 9"><rect x="0.5" y="0.5" width="8" height="8" fill="#fff" stroke="#808080"/><path d="M2,4.5H7" stroke="#000"/></svg>
<span id="t42" class="t" style="left:23.8px;top:545.0px;font-size:11px;line-height:14px;color:#707070;letter-spacing:0.191px;">Holding Tabs</span>
<div class="a" style="left:22px;top:562px;width:115px;height:17px;background:#fff"></div>
<div class="a" style="left:138px;top:562px;width:121px;height:17px;background:#fff"></div>
<svg class="px" style="left:24px;top:566px" width="9" height="9" viewBox="0 0 9 9"><rect x="0.5" y="0.5" width="8" height="8" fill="#fff" stroke="#000"/><path d="M2,4.5H7M4.5,2V7" stroke="#000"/></svg>
<span id="t43" class="t" style="left:37.8px;top:563.0px;font-size:11px;line-height:14px;color:#000;letter-spacing:0.191px;">Holding Tabs</span>
<svg class="" style="left:121px;top:563.5px" width="15" height="14" viewBox="0 0 15 14"><circle cx="7.5" cy="7" r="6" fill="#f6f6f6" stroke="#b9b9b9" stroke-width="2"/><path d="M3.6,6H7.4V3.6L11.6,7L7.4,10.4V8H3.6Z" fill="#b9b9b9" transform="translate(15,0) scale(-1,1)"/></svg>
<span id="t44" class="t" style="left:140.1px;top:563.0px;font-size:11px;line-height:14px;color:#808080;letter-spacing:0.026px;font-style:italic">None</span>
<svg class="px" style="left:10px;top:584px" width="9" height="9" viewBox="0 0 9 9"><rect x="0.5" y="0.5" width="8" height="8" fill="#fff" stroke="#808080"/><path d="M2,4.5H7" stroke="#000"/></svg>
<span id="t45" class="t" style="left:23.8px;top:581.0px;font-size:11px;line-height:14px;color:#707070;letter-spacing:0.478px;">Tool</span>
<div class="a" style="left:22px;top:598px;width:115px;height:17px;background:#fff"></div>
<div class="a" style="left:138px;top:598px;width:121px;height:17px;background:#fff"></div>
<span id="t46" class="t" style="left:23.8px;top:599.0px;font-size:11px;line-height:14px;color:#000;letter-spacing:0.195px;">Tool Diameter</span>
<svg class="" style="left:121px;top:599.5px" width="15" height="14" viewBox="0 0 15 14"><circle cx="7.5" cy="7" r="6" fill="#f6f6f6" stroke="#5cb82c" stroke-width="2"/><path d="M3.6,6H7.4V3.6L11.6,7L7.4,10.4V8H3.6Z" fill="#5cb82c"/></svg>
<span id="t47" class="t" style="left:140.3px;top:599.0px;font-size:11px;line-height:14px;color:#000;letter-spacing:0.575px;">2</span>
<div class="a" style="left:22px;top:616px;width:115px;height:16px;background:#fff"></div>
<div class="a" style="left:138px;top:616px;width:121px;height:16px;background:#fff"></div>
<span id="t48" class="t" style="left:23.8px;top:616.0px;font-size:11px;line-height:14px;color:#000;letter-spacing:0.176px;">Tool Number</span>
<svg class="" style="left:121px;top:616.5px" width="15" height="14" viewBox="0 0 15 14"><circle cx="7.5" cy="7" r="6" fill="#f6f6f6" stroke="#b9b9b9" stroke-width="2"/><path d="M3.6,6H7.4V3.6L11.6,7L7.4,10.4V8H3.6Z" fill="#b9b9b9" transform="translate(15,0) scale(-1,1)"/></svg>
<span id="t49" class="t" style="left:140.1px;top:616.0px;font-size:11px;line-height:14px;color:#808080;letter-spacing:0.775px;font-style:italic">0</span>
<div class="a" style="left:259px;top:79px;width:3px;height:661px;background:#a0a0a0"></div>
<!-- b_view -->
<svg id="view" style="left:262px;top:79px;background:#32323c;overflow:hidden" width="754" height="593" viewBox="0 0 754 593"><line x1="0" y1="163.0" x2="754" y2="319.4" stroke="#f01818" stroke-width="1.3"/><line x1="549.1" y1="0" x2="143.5" y2="593" stroke="#0a840a" stroke-width="1.15"/><g fill="none" stroke="#14dc14" stroke-width="1.3" stroke-linejoin="round"><path d="M54.3,204.6 55.2,203.0 56.3,201.6 57.6,200.3 59.3,198.9 61.7,197.5 63.7,196.5 68.0,194.9 70.7,194.2 73.1,193.8 78.1,193.3 83.2,193.4 89.9,194.3 92.9,194.2 95.0,193.7 97.0,193.0 98.6,192.0 99.7,190.9 100.4,189.6 100.5,188.3 100.0,187.0 99.1,185.9 98.0,185.1 96.5,184.4 92.0,183.2 89.2,182.1 86.6,180.9 84.9,179.9 82.8,178.1 81.1,176.2 79.9,174.2 79.4,172.5 79.2,170.6 79.4,168.9 80.0,167.0 81.0,165.3 83.3,162.5 89.3,156.3 91.0,154.8 92.6,153.7 95.7,151.9 99.6,150.4 103.5,149.4 108.0,148.7 113.1,148.5 118.1,148.9 122.8,149.8 128.0,151.5 131.1,151.8 133.6,151.7 136.2,151.0 138.2,150.1 139.8,148.8 140.6,147.7 140.9,146.4 140.8,145.2 140.2,144.1 138.7,142.8 134.4,140.6 131.3,138.4 129.1,135.8 127.8,133.0 127.5,131.6 127.6,129.6 128.4,126.7 130.3,123.9 133.0,121.4 140.9,116.4 144.8,114.1 147.1,112.9 149.9,111.8 152.5,111.0 155.7,110.3 158.6,109.9 162.0,109.6 165.8,109.7 168.6,109.9 172.2,110.5 174.5,111.1 177.3,112.1 180.0,113.3 183.4,115.3 184.9,115.9 186.6,116.2 188.8,116.4 190.9,116.3 193.1,115.8 195.0,115.1 196.6,114.1 197.8,113.0 198.4,111.7 198.6,110.5 197.9,108.7 194.0,105.0 192.7,103.2 192.0,101.6 191.6,99.7 191.6,97.5 192.0,95.8 193.1,93.7 194.5,91.9 196.0,90.4 198.1,88.8 200.2,87.5 203.6,86.0 215.8,81.5 218.7,80.6 221.1,80.1 223.9,79.6 226.4,79.4 228.9,79.2 232.3,79.3 237.2,79.9 239.5,80.4 242.1,81.2 246.0,82.9 249.3,85.0 252.8,88.4 254.9,89.6 256.9,90.1 259.1,90.4 261.4,90.3 263.6,89.9 265.6,89.2 267.3,88.3 268.5,87.2 269.2,86.0 269.5,84.9 269.3,83.8 267.8,81.1 267.1,79.2 266.9,77.7 267.0,75.8 267.7,73.6 268.9,71.5 270.6,69.5 272.3,68.1 274.5,66.6 276.7,65.4 279.6,64.2 282.2,63.4 287.2,62.3 298.9,60.1 301.8,59.7 304.3,59.5 308.5,59.6 313.0,60.0 316.9,60.9 320.8,62.2 324.5,64.1 327.4,66.4 329.4,69.1 330.9,72.5 332.6,74.0 334.7,74.9 337.0,75.5 339.5,75.6 342.2,75.3 344.3,74.7 345.9,74.0 347.2,73.1 348.2,72.0 348.8,70.4 348.6,67.0 349.2,64.1 350.9,61.3 353.4,58.7 356.8,56.5 360.8,54.6 365.3,53.2 368.6,52.6 371.1,52.3 382.6,51.8 388.1,51.7 391.0,51.8 394.3,52.1 397.1,52.6 400.1,53.4 402.6,54.3 405.4,55.6 407.7,57.0 409.3,58.4 411.0,60.3 411.8,61.7 412.5,63.6 412.8,65.6 412.7,68.4 413.0,69.5 413.7,70.4 415.0,71.5 416.8,72.3 418.8,72.8 420.8,73.0 423.1,73.0 425.0,72.7 427.1,72.0 428.8,71.1 430.5,69.5 432.4,65.2 433.7,63.3 435.2,61.9 437.6,60.1 440.0,58.7 442.4,57.6 445.7,56.4 448.9,55.7 451.7,55.2 455.1,54.9 458.0,54.8 462.2,55.1 475.9,56.8 479.0,57.3 481.3,57.9 483.8,58.7 485.8,59.5 487.6,60.5 489.8,61.9 492.4,64.4 494.0,67.1 494.5,68.5 494.7,70.2 494.3,73.1 492.5,77.0 492.6,78.7 493.2,80.0 494.4,81.0 496.0,81.9 498.0,82.5 500.2,82.9 502.5,82.9 504.7,82.5 506.5,82.0 508.0,81.3 509.3,80.4 511.6,77.8 513.5,76.1 515.8,74.5 517.7,73.5 520.8,72.2 524.1,71.1 527.7,70.4 530.6,70.0 534.0,69.8 536.9,69.8 540.2,70.1 543.0,70.6 547.8,71.8 558.3,75.0 560.8,75.9 562.7,76.8 565.5,78.5 568.0,80.7 569.6,82.9 570.6,85.5 570.7,88.4 569.9,91.3 568.0,94.1 564.9,97.2 564.2,99.0 564.4,100.5 565.3,101.9 567.0,103.1 569.0,103.9 570.9,104.3 572.9,104.5 575.2,104.3 577.2,103.9 579.5,103.0 583.5,100.4 587.5,98.6 592.0,97.2 596.9,96.3 602.0,96.0 606.9,96.3 611.7,97.1 613.9,97.8 616.7,98.8 625.1,103.2 629.0,105.3 630.8,106.6 632.7,108.2 634.0,109.7 635.1,111.5 635.6,113.1 635.9,115.1 635.7,117.3 634.9,119.4 633.9,121.0 632.8,122.4 631.0,124.1 628.7,125.7 625.1,127.7 624.1,128.6 623.4,129.6 623.0,130.8 623.2,132.1 623.8,133.3 625.0,134.4 626.6,135.3 628.5,135.9 630.7,136.3 632.8,136.3 635.9,135.8 642.4,133.4 645.6,132.6 648.4,132.1 651.8,131.8 655.6,131.7 658.5,131.9 662.1,132.4 665.2,133.1 667.7,133.9 670.4,135.1 672.4,136.2 675.0,138.1 682.2,145.0 683.6,146.7 684.5,148.0 685.2,149.6 685.5,151.1 685.6,152.5 685.3,154.5 684.0,157.3 682.9,158.9 681.6,160.2 678.5,162.6 674.7,164.6 668.6,166.7 666.6,168.0 665.5,169.2 665.0,170.5 665.0,171.8 665.6,173.1 666.7,174.2 668.2,175.1 670.1,175.8 672.1,176.1 674.1,176.2 675.9,176.1 680.7,175.1 684.0,174.6 687.4,174.4 690.0,174.4 693.7,174.7 696.5,175.2 699.9,176.0 703.0,177.1 705.5,178.4 707.5,179.6 709.4,181.2 710.7,182.6 712.4,185.5 715.6,192.2 716.2,193.9 716.4,195.3 716.2,197.7 715.2,200.4 713.6,202.7 711.1,205.0 707.6,207.2 703.5,209.0 698.8,210.3 692.9,211.3 690.2,212.3 688.4,213.6 687.4,214.9 687.1,216.4 687.5,217.9 688.4,219.1 689.6,220.0 691.2,220.7 693.0,221.2 695.6,221.5 701.5,221.3 706.6,221.5 711.3,222.3 715.7,223.7 717.7,224.6 720.0,225.9 722.9,228.2 724.9,230.8 726.0,233.7 726.3,240.3 726.3,243.5 726.1,245.2 725.4,247.1 724.4,248.7 722.9,250.5 721.3,252.0 718.8,253.7 716.2,255.0 713.8,256.0 710.4,257.1 708.0,257.6 704.7,258.1 701.3,258.4 696.3,258.4 694.5,258.7 692.8,259.1 691.0,259.9 689.6,260.9 688.6,262.0 688.0,263.3 688.0,264.6 688.5,265.8 689.5,266.9 691.0,267.9 693.7,268.8 701.1,269.7 704.2,270.4 706.7,271.2 709.4,272.3 712.1,273.8 713.8,275.2 715.6,277.0 716.8,278.8 717.5,280.4 717.9,282.4 717.9,284.1 717.3,286.5 713.8,294.6 712.7,296.3 711.6,297.7 710.1,299.2 708.6,300.4 706.2,301.8 704.3,302.8 699.9,304.4 697.6,305.0 694.8,305.5 689.8,306.0 684.8,305.9 678.0,305.0 675.1,305.1 672.9,305.6 671.0,306.3 669.4,307.3 668.2,308.4 667.6,309.7 667.5,311.0 667.9,312.3 668.8,313.4 669.9,314.2 671.5,314.9 675.9,316.1 678.8,317.2 681.3,318.4 683.0,319.4 685.2,321.2 686.5,322.6 687.8,324.7 688.5,326.8 688.7,328.7 688.5,330.4 687.9,332.4 687.0,334.0 684.6,336.8 678.6,343.0 677.0,344.5 675.3,345.7 672.3,347.4 668.3,348.9 664.5,349.9 659.9,350.6 654.9,350.8 649.9,350.4 645.2,349.5 639.9,347.8 636.8,347.5 634.3,347.7 631.8,348.3 629.6,349.3 628.1,350.5 627.4,351.6 627.0,352.8 627.2,354.1 627.8,355.2 629.2,356.5 633.6,358.7 636.6,361.0 638.9,363.5 640.1,366.3 640.4,367.8 640.4,369.7 639.5,372.6 637.7,375.4 634.9,377.9 627.0,382.9 623.1,385.3 620.9,386.4 618.0,387.5 615.4,388.3 612.2,389.0 609.3,389.5 605.6,389.7 602.2,389.7 598.5,389.3 595.7,388.8 593.5,388.2 590.6,387.2 588.0,386.0 584.5,384.0 583.0,383.5 581.3,383.1 579.1,382.9 576.8,383.1 574.9,383.5 572.9,384.2 571.3,385.2 570.2,386.2 569.5,387.5 569.4,388.8 570.1,390.6 574.0,394.3 575.2,396.1 576.0,397.7 576.4,399.8 576.3,401.8 575.9,403.5 574.9,405.6 573.5,407.5 572.0,408.9 569.8,410.5 567.8,411.8 564.4,413.3 552.1,417.8 549.2,418.7 546.9,419.2 544.0,419.7 541.5,420.0 539.0,420.1 535.6,420.0 530.7,419.4 526.2,418.2 524.1,417.5 521.9,416.4 518.6,414.3 515.1,410.9 513.0,409.8 511.0,409.2 508.8,408.9 506.5,409.0 504.3,409.4 502.3,410.1 500.7,411.0 499.4,412.1 498.7,413.3 498.4,414.4 498.6,415.5 500.1,418.2 500.8,420.1 501.0,422.1 500.9,423.6 500.2,425.7 499.3,427.4 497.7,429.4 495.6,431.2 493.4,432.8 491.2,433.9 488.4,435.1 485.8,435.9 480.7,437.0 469.0,439.2 466.1,439.6 463.6,439.8 459.4,439.8 454.9,439.3 451.0,438.5 447.1,437.1 443.4,435.2 440.5,432.9 438.5,430.2 437.0,426.9 435.3,425.3 433.2,424.4 430.9,423.9 428.2,423.7 425.8,424.0 423.9,424.5 422.2,425.2 420.8,426.1 419.8,427.3 419.1,428.9 419.4,432.3 418.7,435.2 417.1,438.0 414.5,440.6 411.2,442.8 407.1,444.7 404.9,445.5 401.8,446.3 396.8,447.0 385.3,447.5 379.8,447.6 376.9,447.5 373.6,447.2 370.8,446.7 367.8,445.9 365.4,445.1 362.8,443.8 360.3,442.3 358.2,440.5 357.0,439.0 355.9,437.2 355.4,435.7 355.1,433.8 355.3,430.9 354.9,429.9 354.2,428.9 353.1,428.0 351.4,427.1 349.4,426.5 347.2,426.3 344.9,426.3 342.7,426.7 340.7,427.4 339.1,428.2 337.4,429.8 335.6,434.1 334.2,436.0 332.7,437.5 330.6,439.1 327.9,440.7 325.6,441.7 322.3,442.9 319.1,443.6 316.2,444.1 312.9,444.4 310.0,444.5 305.8,444.2 292.0,442.5 288.9,442.0 286.7,441.4 284.2,440.6 282.2,439.8 279.7,438.5 278.1,437.4 275.6,435.0 274.5,433.4 273.8,432.0 273.2,429.2 273.6,426.2 275.4,422.3 275.4,420.6 274.7,419.4 273.5,418.3 271.9,417.4 269.9,416.8 267.7,416.5 265.5,416.5 263.2,416.8 261.4,417.3 259.9,418.0 258.6,418.9 256.3,421.6 254.4,423.3 252.2,424.8 250.3,425.8 247.2,427.1 244.6,428.0 241.0,428.8 237.3,429.3 233.9,429.5 231.0,429.5 227.7,429.2 224.9,428.7 220.1,427.5 209.6,424.3 207.2,423.4 205.2,422.5 202.4,420.8 199.9,418.6 198.3,416.4 197.3,413.8 197.2,410.9 198.1,408.0 199.9,405.2 203.0,402.1 203.7,400.3 203.5,398.7 202.6,397.4 200.9,396.2 198.9,395.4 197.0,395.0 195.0,394.8 193.0,394.9 190.8,395.4 188.5,396.3 184.4,398.9 180.4,400.8 175.9,402.2 171.0,403.0 166.0,403.3 161.0,403.0 156.2,402.2 154.0,401.6 151.2,400.5 142.8,396.1 139.0,394.0 137.1,392.7 135.2,391.1 134.0,389.7 132.9,387.8 132.3,386.2 132.0,384.0 132.3,382.1 133.1,379.9 134.0,378.3 135.6,376.5 137.0,375.2 139.2,373.7 142.8,371.6 143.8,370.7 144.5,369.7 144.9,368.4 144.7,367.1 144.1,366.0 142.9,364.9 141.3,364.0 139.6,363.4 137.4,363.1 135.2,363.0 132.1,363.5 125.5,365.9 122.3,366.7 119.5,367.2 116.1,367.5 112.3,367.6 108.6,367.3 105.8,366.9 102.7,366.2 100.2,365.4 97.5,364.2 95.5,363.1 93.0,361.2 85.7,354.3 84.3,352.7 83.5,351.3 82.8,349.7 82.4,348.2 82.4,346.8 82.7,344.8 83.9,342.0 85.1,340.4 86.3,339.1 89.4,336.7 93.2,334.7 99.3,332.6 101.3,331.3 102.4,330.1 102.9,328.8 102.9,327.5 102.3,326.2 101.4,325.2 99.9,324.3 98.0,323.6 95.9,323.2 93.8,323.1 92.0,323.2 87.3,324.2 83.9,324.7 81.4,324.9 78.0,324.9 74.3,324.6 70.7,324.0 67.3,323.1 64.9,322.2 62.4,320.9 60.5,319.7 58.6,318.1 57.3,316.7 55.5,313.8 52.3,307.1 51.8,305.5 51.5,304.0 51.7,301.6 52.8,298.9 54.4,296.7 56.9,294.3 60.3,292.1 64.5,290.3 69.1,289.1 75.0,288.0 77.7,287.0 79.5,285.7 80.5,284.4 80.8,282.8 80.5,281.4 79.7,280.3 78.5,279.4 77.0,278.6 75.0,278.1 72.3,277.8 66.4,278.0 61.4,277.8 56.6,277.0 52.3,275.6 48.5,273.8 46.9,272.7 45.0,271.1 43.0,268.5 41.9,265.7 41.6,259.0 41.6,255.8 41.9,254.1 42.6,252.2 43.5,250.6 45.0,248.8 46.6,247.3 49.1,245.6 51.7,244.3 54.9,243.0 57.5,242.2 60.7,241.5 63.2,241.2 66.6,240.9 71.6,240.9 73.4,240.6 75.1,240.2 76.8,239.5 78.3,238.5 79.4,237.3 79.9,236.0 79.9,234.7 79.4,233.4 78.3,232.3 76.9,231.4 74.3,230.5 66.8,229.6 63.7,228.9 61.2,228.1 58.5,227.0 55.9,225.5 54.1,224.2 52.3,222.3 51.1,220.5 50.4,218.9 50.0,216.9 50.0,215.2 50.6,212.8 54.3,204.6Z"/><path d="M54.5,211.8 55.5,210.1 56.6,208.8 57.9,207.5 59.6,206.1 62.0,204.6 63.9,203.7 68.3,202.1 71.0,201.4 73.4,200.9 78.4,200.5 83.4,200.6 90.2,201.4 93.1,201.3 95.3,200.9 97.2,200.2 98.8,199.2 100.0,198.0 100.6,196.7 100.7,195.4 100.3,194.2 99.4,193.1 98.3,192.3 96.8,191.6 92.3,190.3 89.4,189.3 86.9,188.1 85.2,187.0 83.0,185.3 81.3,183.4 80.2,181.3 79.7,179.7 79.5,177.7 79.7,176.1 80.3,174.1 81.2,172.5 83.6,169.6 89.6,163.4 91.2,162.0 92.9,160.8 95.9,159.1 99.9,157.6 103.7,156.5 108.3,155.9 113.3,155.7 118.3,156.0 123.0,157.0 128.3,158.7 131.4,159.0 133.9,158.8 136.4,158.2 138.4,157.3 140.1,156.0 140.8,154.9 141.2,153.6 141.0,152.4 140.4,151.3 139.0,150.0 134.6,147.7 131.6,145.5 129.4,142.9 128.1,140.2 127.8,138.7 127.8,136.8 128.7,133.9 130.5,131.1 133.3,128.6 141.2,123.5 145.1,121.2 147.3,120.1 150.2,118.9 152.8,118.1 156.0,117.4 158.9,117.0 162.2,116.8 166.0,116.8 168.9,117.1 172.5,117.7 174.7,118.3 177.6,119.2 180.2,120.5 183.7,122.5 185.2,123.0 186.9,123.4 189.1,123.5 191.1,123.4 193.3,123.0 195.3,122.3 196.9,121.3 198.1,120.1 198.7,118.9 198.8,117.7 198.1,115.9 194.2,112.2 193.0,110.4 192.3,108.8 191.8,106.8 191.9,104.7 192.3,103.0 193.3,100.8 194.7,99.0 196.2,97.5 198.4,95.9 200.4,94.7 203.8,93.2 216.1,88.7 219.0,87.8 221.3,87.2 224.2,86.8 226.7,86.5 229.2,86.4 232.6,86.5 237.5,87.1 239.8,87.6 242.3,88.3 246.3,90.0 249.6,92.2 253.1,95.6 255.2,96.7 257.2,97.3 259.4,97.5 261.7,97.5 263.9,97.1 265.9,96.4 267.6,95.5 268.8,94.3 269.5,93.2 269.8,92.0 269.6,91.0 268.1,88.3 267.4,86.3 267.2,84.9 267.3,82.9 268.0,80.7 269.2,78.6 270.9,76.7 272.6,75.2 274.8,73.7 277.0,72.6 279.8,71.4 282.4,70.6 287.5,69.4 299.2,67.3 302.1,66.9 304.6,66.7 308.8,66.7 313.3,67.2 317.2,68.0 321.1,69.4 324.8,71.3 327.7,73.6 329.7,76.2 331.2,79.6 332.9,81.1 335.0,82.1 337.3,82.6 339.7,82.8 342.4,82.5 344.5,81.9 346.2,81.1 347.5,80.2 348.5,79.1 349.1,77.6 348.8,74.2 349.5,71.3 351.1,68.5 353.7,65.9 357.0,63.6 361.1,61.8 365.6,60.4 368.9,59.8 371.4,59.5 382.9,59.0 388.4,58.9 391.3,58.9 394.6,59.3 397.4,59.8 400.4,60.5 402.8,61.4 405.7,62.8 407.9,64.2 409.5,65.6 411.2,67.5 412.1,68.8 412.8,70.7 413.1,72.7 412.9,75.6 413.3,76.6 414.0,77.6 415.3,78.6 417.0,79.4 419.1,80.0 421.0,80.2 423.3,80.1 425.3,79.8 427.3,79.2 429.1,78.3 430.8,76.7 432.6,72.3 434.0,70.5 435.5,69.0 437.8,67.2 440.3,65.8 442.6,64.7 445.9,63.6 449.1,62.8 452.0,62.3 455.3,62.0 458.3,62.0 462.4,62.2 476.2,63.9 479.3,64.5 481.5,65.0 484.0,65.8 486.0,66.7 487.9,67.6 490.1,69.1 492.6,71.5 494.3,74.2 494.7,75.6 495.0,77.3 494.6,80.2 492.8,84.2 492.8,85.9 493.5,87.1 494.7,88.2 496.3,89.1 498.3,89.7 500.5,90.0 502.7,90.0 505.0,89.7 506.8,89.1 508.3,88.5 509.6,87.5 511.9,84.9 513.8,83.2 516.0,81.7 517.9,80.7 521.0,79.3 524.4,78.3 528.0,77.5 530.9,77.1 534.3,76.9 537.2,77.0 540.5,77.3 543.3,77.7 548.1,79.0 558.6,82.2 561.0,83.1 563.0,84.0 565.8,85.7 568.3,87.9 569.9,90.1 570.9,92.7 571.0,95.6 570.1,98.5 568.3,101.3 565.2,104.4 564.5,106.2 564.6,107.6 565.6,109.1 567.3,110.3 569.3,111.1 571.2,111.5 573.2,111.6 575.5,111.5 577.4,111.1 579.7,110.2 583.8,107.6 587.8,105.7 592.3,104.3 597.2,103.5 602.2,103.2 607.2,103.4 612.0,104.3 614.2,104.9 617.0,106.0 625.4,110.3 629.2,112.5 631.1,113.7 633.0,115.3 634.2,116.8 635.3,118.6 635.9,120.3 636.2,122.2 635.9,124.4 635.1,126.6 634.2,128.2 633.1,129.5 631.2,131.2 629.0,132.8 625.4,134.9 624.4,135.8 623.7,136.8 623.3,137.9 623.4,139.2 624.1,140.5 625.3,141.6 626.9,142.5 628.8,143.1 631.0,143.4 633.0,143.4 636.1,143.0 642.7,140.5 645.9,139.7 648.7,139.3 652.1,138.9 655.9,138.9 658.7,139.0 662.4,139.5 665.5,140.3 668.0,141.1 670.7,142.2 672.7,143.4 675.2,145.3 682.5,152.2 683.9,153.8 684.7,155.2 685.4,156.8 685.8,158.2 685.8,159.7 685.5,161.6 684.3,164.5 683.1,166.1 681.9,167.4 678.8,169.7 675.0,171.7 668.9,173.9 666.9,175.2 665.8,176.4 665.3,177.6 665.3,179.0 665.9,180.2 667.0,181.3 668.5,182.3 670.4,182.9 672.3,183.3 674.4,183.4 676.2,183.3 680.9,182.3 684.3,181.8 687.7,181.6 690.2,181.6 693.9,181.9 696.7,182.3 700.1,183.2 703.3,184.3 705.8,185.5 707.7,186.8 709.6,188.3 710.9,189.8 712.7,192.7 715.9,199.4 716.4,201.0 716.7,202.5 716.5,204.9 715.4,207.5 713.8,209.8 711.3,212.1 707.9,214.3 703.7,216.1 699.1,217.4 693.2,218.4 690.5,219.5 688.7,220.7 687.7,222.1 687.4,223.5 687.7,225.1 688.6,226.3 689.9,227.2 691.4,227.9 693.2,228.4 695.9,228.7 701.8,228.4 706.8,228.7 711.6,229.5 716.0,230.9 717.9,231.7 720.3,233.1 723.2,235.4 725.2,238.0 726.3,240.8 726.6,247.5 726.6,250.6 726.3,252.3 725.6,254.3 724.7,255.9 723.2,257.7 721.6,259.1 719.1,260.8 716.5,262.2 714.1,263.2 710.7,264.2 708.3,264.8 705.0,265.3 701.6,265.5 696.6,265.6 694.8,265.8 693.1,266.3 691.3,267.1 689.9,268.0 688.8,269.2 688.3,270.5 688.3,271.8 688.8,272.9 689.8,274.1 691.3,275.0 693.9,276.0 701.4,276.9 704.5,277.6 707.0,278.4 709.7,279.5 712.3,281.0 714.1,282.3 715.9,284.2 717.1,286.0 717.8,287.6 718.2,289.5 718.2,291.2 717.6,293.7 714.0,301.7 713.0,303.5 711.9,304.9 710.4,306.3 708.9,307.5 706.5,309.0 704.5,310.0 700.2,311.5 697.9,312.1 695.1,312.7 690.1,313.2 685.0,313.1 678.3,312.2 675.3,312.3 673.2,312.7 671.2,313.5 669.6,314.4 668.5,315.6 667.8,316.9 667.7,318.2 668.2,319.5 669.1,320.5 670.2,321.3 671.7,322.1 676.2,323.3 679.0,324.3 681.6,325.5 683.3,326.6 685.4,328.3 686.8,329.8 688.1,331.8 688.8,333.9 689.0,335.9 688.8,337.6 688.2,339.5 687.2,341.1 684.9,344.0 678.9,350.2 677.2,351.7 675.6,352.8 672.5,354.5 668.6,356.1 664.7,357.1 660.2,357.8 655.1,358.0 650.1,357.6 645.4,356.7 640.2,355.0 637.1,354.6 634.6,354.8 632.0,355.4 629.9,356.4 628.4,357.6 627.6,358.8 627.3,359.9 627.4,361.2 628.0,362.4 629.5,363.7 633.8,365.9 636.9,368.1 639.1,370.7 640.4,373.5 640.7,374.9 640.6,376.9 639.8,379.8 637.9,382.5 635.2,385.0 627.3,390.1 623.4,392.4 621.1,393.6 618.3,394.7 615.7,395.5 612.5,396.2 609.6,396.6 605.8,396.9 602.4,396.8 598.7,396.4 596.0,395.9 593.7,395.4 590.9,394.4 588.2,393.2 584.8,391.2 583.3,390.6 581.6,390.3 579.4,390.1 577.1,390.2 575.1,390.6 573.2,391.4 571.6,392.3 570.5,393.4 569.8,394.6 569.6,396.0 570.3,397.7 574.2,401.4 575.5,403.2 576.2,404.8 576.7,407.0 576.6,409.0 576.2,410.6 575.1,412.8 573.7,414.6 572.2,416.1 570.1,417.7 568.0,418.9 564.6,420.5 552.4,424.9 549.5,425.8 547.1,426.4 544.3,426.9 541.8,427.1 539.3,427.2 535.9,427.1 531.0,426.5 526.5,425.4 524.4,424.6 522.2,423.6 518.9,421.5 515.4,418.0 513.3,416.9 511.3,416.4 509.1,416.1 506.8,416.2 504.6,416.6 502.6,417.2 500.9,418.2 499.7,419.3 499.0,420.4 498.7,421.6 498.9,422.6 500.4,425.4 501.1,427.3 501.3,429.3 501.2,430.7 500.5,432.9 499.6,434.5 498.0,436.5 495.9,438.4 493.7,439.9 491.5,441.1 488.6,442.2 486.0,443.1 481.0,444.2 469.3,446.3 466.4,446.7 463.9,446.9 459.7,446.9 455.2,446.4 451.3,445.6 447.4,444.3 443.7,442.3 440.8,440.0 438.8,437.4 437.3,434.0 435.6,432.5 433.5,431.5 431.2,431.0 428.5,430.9 426.0,431.2 424.1,431.7 422.5,432.4 421.1,433.3 420.0,434.5 419.4,436.0 419.6,439.5 419.0,442.4 417.3,445.2 414.8,447.7 411.4,450.0 407.4,451.9 405.2,452.6 402.0,453.4 397.1,454.2 385.6,454.6 380.1,454.8 377.2,454.7 373.9,454.4 371.1,453.9 368.1,453.1 365.6,452.2 363.1,451.0 360.5,449.4 358.5,447.6 357.2,446.1 356.2,444.3 355.7,442.9 355.4,440.9 355.5,438.0 355.2,437.0 354.5,436.1 353.3,435.1 351.6,434.3 349.6,433.7 347.4,433.4 345.1,433.5 342.9,433.9 340.9,434.5 339.4,435.4 337.7,437.0 335.8,441.3 334.5,443.1 333.0,444.6 330.9,446.2 328.2,447.8 325.8,448.9 322.5,450.0 319.4,450.8 316.5,451.3 313.1,451.6 310.2,451.6 306.0,451.4 292.3,449.7 289.2,449.2 286.9,448.6 284.4,447.8 282.4,447.0 280.0,445.6 278.4,444.6 275.9,442.1 274.8,440.6 274.1,439.2 273.5,436.3 273.9,433.4 275.7,429.5 275.6,427.8 275.0,426.5 273.8,425.4 272.2,424.5 270.2,423.9 268.0,423.6 265.7,423.6 263.5,423.9 261.7,424.5 260.2,425.2 258.9,426.1 256.6,428.7 254.7,430.4 252.4,431.9 250.5,433.0 247.4,434.3 244.9,435.1 241.3,436.0 237.6,436.5 234.2,436.7 231.3,436.6 228.0,436.4 225.2,435.9 220.4,434.6 209.9,431.5 207.4,430.6 205.5,429.7 202.7,428.0 200.2,425.7 198.6,423.5 197.6,420.9 197.5,418.0 198.3,415.1 200.2,412.4 203.3,409.2 204.0,407.4 203.8,405.9 202.9,404.6 201.2,403.3 199.2,402.5 197.3,402.1 195.3,402.0 193.2,402.1 191.0,402.5 188.7,403.4 184.7,406.0 180.7,407.9 176.2,409.3 171.3,410.2 166.3,410.5 161.3,410.2 156.5,409.3 154.3,408.7 151.5,407.7 143.1,403.3 139.2,401.1 137.4,399.9 135.5,398.3 134.2,396.8 133.1,395.0 132.6,393.3 132.3,391.2 132.5,389.2 133.3,387.0 134.3,385.4 135.8,383.6 137.2,382.4 139.5,380.8 143.1,378.7 144.1,377.8 144.8,376.9 145.2,375.6 145.0,374.2 144.4,373.1 143.2,372.0 141.6,371.1 139.9,370.6 137.7,370.2 135.4,370.2 132.3,370.7 125.8,373.1 122.6,373.9 119.8,374.4 116.4,374.7 112.6,374.8 108.9,374.5 106.1,374.1 103.0,373.4 100.5,372.5 97.8,371.4 95.8,370.2 93.2,368.3 86.0,361.5 84.6,359.8 83.7,358.5 83.0,356.8 82.7,355.4 82.6,354.0 82.9,352.0 84.2,349.1 85.3,347.6 86.6,346.3 89.7,343.9 93.5,341.9 99.6,339.7 101.6,338.5 102.7,337.3 103.2,336.0 103.2,334.7 102.6,333.4 101.6,332.4 100.1,331.4 98.3,330.7 96.1,330.3 94.1,330.2 92.3,330.4 87.5,331.4 84.2,331.8 81.6,332.0 78.3,332.0 74.5,331.7 70.9,331.1 67.6,330.2 65.2,329.3 62.7,328.1 60.7,326.9 58.8,325.3 57.5,323.8 55.8,320.9 52.6,314.3 52.0,312.6 51.8,311.2 52.0,308.7 53.0,306.1 54.6,303.8 57.1,301.5 60.6,299.3 64.7,297.5 69.4,296.2 75.3,295.2 78.0,294.1 79.8,292.9 80.8,291.5 81.1,290.0 80.7,288.6 79.9,287.5 78.8,286.6 77.2,285.8 75.2,285.2 72.6,284.9 66.7,285.2 61.7,285.0 56.9,284.1 52.5,282.8 48.7,280.9 47.1,279.8 45.3,278.3 43.3,275.6 42.2,272.8 41.9,266.2 41.9,263.0 42.1,261.3 42.8,259.4 43.8,257.7 45.3,255.9 46.9,254.5 49.4,252.8 52.0,251.4 55.1,250.2 57.8,249.4 61.0,248.7 63.5,248.3 66.9,248.1 71.9,248.0 73.7,247.8 75.4,247.3 77.0,246.6 78.6,245.6 79.6,244.4 80.2,243.1 80.2,241.8 79.6,240.6 78.6,239.4 77.2,238.6 74.5,237.7 67.1,236.8 64.0,236.1 61.5,235.3 58.8,234.1 56.1,232.6 54.4,231.3 52.6,229.4 51.4,227.6 50.7,226.0 50.3,224.1 50.3,222.4 50.9,220.0 54.5,211.8Z"/><path d="M54.8,218.9 55.8,217.3 56.8,215.9 58.1,214.6 59.9,213.3 62.2,211.8 64.2,210.8 68.5,209.2 71.2,208.5 73.7,208.1 78.7,207.6 83.7,207.7 90.5,208.6 93.4,208.5 95.6,208.0 97.5,207.3 99.1,206.3 100.3,205.2 100.9,203.9 101.0,202.6 100.5,201.3 99.7,200.3 98.6,199.4 97.0,198.7 92.6,197.5 89.7,196.5 87.2,195.2 85.5,194.2 83.3,192.5 81.6,190.5 80.5,188.5 79.9,186.8 79.7,184.9 79.9,183.2 80.6,181.3 81.5,179.6 83.9,176.8 89.8,170.6 91.5,169.1 93.1,168.0 96.2,166.3 100.1,164.7 104.0,163.7 108.6,163.0 113.6,162.8 118.6,163.2 123.3,164.1 128.6,165.8 131.7,166.1 134.1,166.0 136.7,165.4 138.7,164.4 140.3,163.1 141.1,162.0 141.5,160.7 141.3,159.5 140.7,158.4 139.3,157.1 134.9,154.9 131.8,152.7 129.6,150.1 128.3,147.3 128.1,145.9 128.1,143.9 129.0,141.0 130.8,138.3 133.5,135.7 141.4,130.7 145.4,128.4 147.6,127.2 150.4,126.1 153.1,125.3 156.3,124.6 159.1,124.2 162.5,123.9 166.3,124.0 169.2,124.2 172.7,124.8 175.0,125.4 177.9,126.4 180.5,127.6 183.9,129.6 185.4,130.2 187.1,130.5 189.4,130.7 191.4,130.6 193.6,130.1 195.5,129.4 197.2,128.4 198.3,127.3 199.0,126.0 199.1,124.8 198.4,123.1 194.5,119.4 193.2,117.6 192.5,115.9 192.1,114.0 192.1,111.8 192.6,110.1 193.6,108.0 195.0,106.2 196.5,104.7 198.6,103.1 200.7,101.9 204.1,100.3 216.3,95.8 219.2,94.9 221.6,94.4 224.4,93.9 226.9,93.7 229.5,93.6 232.8,93.6 237.7,94.2 240.0,94.8 242.6,95.5 246.6,97.2 249.8,99.3 253.3,102.7 255.5,103.9 257.5,104.4 259.7,104.7 261.9,104.6 264.2,104.2 266.1,103.6 267.8,102.6 269.1,101.5 269.8,100.4 270.0,99.2 269.9,98.1 268.3,95.4 267.7,93.5 267.5,92.0 267.6,90.1 268.2,87.9 269.4,85.8 271.2,83.8 272.8,82.4 275.1,80.9 277.3,79.7 280.1,78.5 282.7,77.7 287.8,76.6 299.4,74.5 302.3,74.0 304.8,73.9 309.0,73.9 313.6,74.3 317.4,75.2 321.4,76.5 325.0,78.4 327.9,80.8 330.0,83.4 331.5,86.8 333.1,88.3 335.2,89.2 337.5,89.8 340.0,89.9 342.7,89.6 344.8,89.1 346.4,88.3 347.8,87.4 348.7,86.3 349.3,84.7 349.1,81.3 349.8,78.4 351.4,75.6 353.9,73.0 357.3,70.8 361.3,68.9 365.9,67.6 369.1,66.9 371.6,66.6 383.1,66.2 388.6,66.0 391.5,66.1 394.9,66.4 397.6,66.9 400.7,67.7 403.1,68.6 406.0,69.9 408.2,71.4 409.8,72.7 411.5,74.6 412.3,76.0 413.1,77.9 413.3,79.9 413.2,82.7 413.6,83.8 414.3,84.7 415.6,85.8 417.3,86.6 419.3,87.1 421.3,87.3 423.6,87.3 425.6,87.0 427.6,86.3 429.3,85.4 431.0,83.8 432.9,79.5 434.3,77.7 435.8,76.2 438.1,74.4 440.6,73.0 442.9,71.9 446.2,70.8 449.4,70.0 452.2,69.5 455.6,69.2 458.5,69.1 462.7,69.4 476.5,71.1 479.5,71.6 481.8,72.2 484.3,73.0 486.3,73.8 488.1,74.8 490.3,76.2 492.9,78.7 494.5,81.4 495.0,82.8 495.2,84.5 494.9,87.4 493.0,91.3 493.1,93.0 493.8,94.3 495.0,95.4 496.6,96.2 498.5,96.9 500.7,97.2 503.0,97.2 505.2,96.8 507.1,96.3 508.5,95.6 509.9,94.7 512.2,92.1 514.1,90.4 516.3,88.8 518.2,87.8 521.3,86.5 524.7,85.4 528.3,84.7 531.1,84.3 534.5,84.1 537.4,84.1 540.8,84.4 543.5,84.9 548.3,86.1 558.8,89.3 561.3,90.2 563.2,91.1 566.1,92.8 568.6,95.0 570.1,97.2 571.2,99.8 571.3,102.8 570.4,105.7 568.6,108.4 565.4,111.5 564.7,113.3 564.9,114.8 565.9,116.2 567.5,117.4 569.6,118.2 571.4,118.6 573.5,118.8 575.7,118.6 577.7,118.2 580.0,117.4 584.0,114.7 588.0,112.9 592.6,111.5 597.5,110.6 602.5,110.3 607.5,110.6 612.2,111.4 614.5,112.1 617.3,113.1 625.6,117.5 629.5,119.6 631.4,120.9 633.2,122.5 634.5,124.0 635.6,125.8 636.2,127.4 636.4,129.4 636.2,131.6 635.4,133.7 634.4,135.3 633.3,136.7 631.5,138.4 629.3,140.0 625.7,142.0 624.7,142.9 624.0,143.9 623.6,145.1 623.7,146.4 624.4,147.6 625.5,148.7 627.1,149.6 629.1,150.3 631.3,150.6 633.3,150.6 636.4,150.1 643.0,147.7 646.1,146.9 649.0,146.4 652.3,146.1 656.1,146.0 659.0,146.2 662.7,146.7 665.8,147.4 668.3,148.2 670.9,149.4 673.0,150.5 675.5,152.4 682.7,159.3 684.2,161.0 685.0,162.3 685.7,163.9 686.0,165.4 686.1,166.8 685.8,168.8 684.6,171.6 683.4,173.2 682.2,174.5 679.1,176.9 675.2,178.9 669.2,181.0 667.1,182.3 666.1,183.5 665.5,184.8 665.6,186.1 666.1,187.4 667.2,188.5 668.8,189.4 670.7,190.1 672.6,190.5 674.6,190.6 676.4,190.4 681.2,189.4 684.6,188.9 688.0,188.7 690.5,188.7 694.2,189.0 697.0,189.5 700.4,190.3 703.6,191.5 706.1,192.7 708.0,193.9 709.9,195.5 711.2,197.0 712.9,199.9 716.1,206.5 716.7,208.2 716.9,209.6 716.7,212.0 715.7,214.7 714.1,217.0 711.6,219.3 708.1,221.5 704.0,223.3 699.4,224.6 693.4,225.6 690.7,226.6 689.0,227.9 688.0,229.2 687.6,230.7 688.0,232.2 688.9,233.4 690.1,234.3 691.7,235.1 693.5,235.6 696.2,235.9 702.1,235.6 707.1,235.8 711.9,236.7 716.2,238.0 718.2,238.9 720.6,240.2 723.5,242.5 725.5,245.2 726.6,248.0 726.9,254.6 726.8,257.8 726.6,259.5 725.9,261.4 724.9,263.0 723.4,264.8 721.8,266.3 719.3,268.0 716.8,269.3 714.4,270.3 711.0,271.4 708.6,271.9 705.3,272.4 701.8,272.7 696.9,272.7 695.1,273.0 693.4,273.4 691.5,274.2 690.2,275.2 689.1,276.3 688.5,277.6 688.5,279.0 689.0,280.1 690.0,281.2 691.5,282.2 694.2,283.1 701.6,284.0 704.7,284.7 707.3,285.5 709.9,286.6 712.6,288.2 714.3,289.5 716.2,291.3 717.4,293.1 718.1,294.8 718.5,296.7 718.5,298.4 717.8,300.8 714.3,308.9 713.2,310.7 712.2,312.0 710.7,313.5 709.1,314.7 706.8,316.1 704.8,317.1 700.5,318.7 698.1,319.3 695.3,319.8 690.3,320.3 685.3,320.2 678.6,319.3 675.6,319.4 673.4,319.9 671.5,320.6 669.9,321.6 668.7,322.8 668.1,324.0 668.0,325.4 668.5,326.6 669.3,327.7 670.4,328.5 672.0,329.2 676.4,330.4 679.3,331.5 681.9,332.7 683.5,333.7 685.7,335.5 687.0,336.9 688.3,339.0 689.1,341.1 689.3,343.0 689.1,344.7 688.4,346.7 687.5,348.3 685.1,351.1 679.2,357.3 677.5,358.8 675.9,360.0 672.8,361.7 668.9,363.2 665.0,364.2 660.4,364.9 655.4,365.1 650.4,364.8 645.7,363.8 640.4,362.1 637.4,361.8 634.9,362.0 632.3,362.6 630.1,363.6 628.7,364.8 627.9,365.9 627.5,367.1 627.7,368.4 628.3,369.5 629.7,370.8 634.1,373.0 637.2,375.3 639.4,377.8 640.7,380.6 640.9,382.1 640.9,384.0 640.0,386.9 638.2,389.7 635.5,392.2 627.6,397.2 623.6,399.6 621.4,400.7 618.6,401.8 615.9,402.7 612.7,403.4 609.9,403.8 606.1,404.0 602.7,404.0 599.0,403.6 596.3,403.1 594.0,402.5 591.1,401.5 588.5,400.3 585.1,398.3 583.6,397.8 581.9,397.4 579.6,397.2 577.4,397.4 575.4,397.8 573.5,398.5 571.9,399.5 570.8,400.5 570.1,401.8 569.9,403.1 570.6,404.9 574.5,408.6 575.8,410.4 576.5,412.0 576.9,414.2 576.9,416.1 576.4,417.8 575.4,419.9 574.0,421.8 572.5,423.2 570.4,424.8 568.3,426.1 564.9,427.6 552.7,432.1 549.8,433.0 547.4,433.6 544.6,434.0 542.1,434.3 539.5,434.4 536.2,434.3 531.3,433.7 526.7,432.5 524.7,431.8 522.4,430.7 519.2,428.6 515.7,425.2 513.6,424.1 511.5,423.5 509.3,423.3 507.1,423.3 504.9,423.7 502.9,424.4 501.2,425.3 499.9,426.5 499.2,427.6 499.0,428.8 499.1,429.8 500.7,432.5 501.3,434.5 501.6,436.4 501.4,437.9 500.8,440.0 499.9,441.7 498.3,443.7 496.2,445.6 493.9,447.1 491.7,448.2 488.9,449.4 486.3,450.2 481.2,451.3 469.6,453.5 466.7,453.9 464.2,454.1 460.0,454.1 455.4,453.6 451.6,452.8 447.6,451.4 444.0,449.5 441.1,447.2 439.0,444.6 437.5,441.2 435.9,439.6 433.8,438.7 431.5,438.2 428.8,438.0 426.3,438.3 424.4,438.8 422.7,439.5 421.4,440.5 420.3,441.6 419.7,443.2 419.9,446.6 419.2,449.5 417.6,452.3 415.1,454.9 411.7,457.2 407.7,459.0 405.5,459.8 402.3,460.6 397.4,461.3 385.9,461.8 380.4,461.9 377.5,461.8 374.1,461.5 371.4,461.0 368.3,460.2 365.9,459.4 363.3,458.2 360.8,456.6 358.8,454.8 357.5,453.3 356.5,451.5 356.0,450.0 355.7,448.1 355.8,445.2 355.4,444.2 354.7,443.2 353.6,442.3 351.9,441.4 349.9,440.9 347.7,440.6 345.4,440.6 343.2,441.0 341.2,441.7 339.7,442.5 338.0,444.1 336.1,448.4 334.7,450.3 333.3,451.8 331.2,453.4 328.5,455.0 326.1,456.0 322.8,457.2 319.6,458.0 316.8,458.4 313.4,458.7 310.5,458.8 306.3,458.5 292.5,456.9 289.5,456.3 287.2,455.8 284.7,454.9 282.7,454.1 280.3,452.8 278.7,451.7 276.1,449.3 275.0,447.7 274.4,446.3 273.8,443.5 274.1,440.6 276.0,436.6 275.9,434.9 275.2,433.7 274.0,432.6 272.4,431.7 270.5,431.1 268.3,430.8 266.0,430.8 263.8,431.1 261.9,431.6 260.5,432.3 259.1,433.2 256.8,435.9 254.9,437.6 252.7,439.1 250.8,440.1 247.7,441.5 245.1,442.3 241.6,443.1 237.9,443.6 234.5,443.8 231.6,443.8 228.2,443.5 225.5,443.1 220.7,441.8 210.2,438.6 207.7,437.7 205.8,436.8 202.9,435.1 200.5,432.9 198.9,430.7 197.9,428.1 197.7,425.2 198.6,422.3 200.4,419.5 203.6,416.4 204.3,414.6 204.0,413.0 203.1,411.7 201.5,410.5 199.5,409.7 197.6,409.3 195.5,409.1 193.5,409.3 191.3,409.7 189.0,410.6 185.0,413.2 181.0,415.1 176.4,416.5 171.6,417.3 166.5,417.6 161.5,417.3 156.8,416.5 154.5,415.9 151.7,414.8 143.4,410.5 139.5,408.3 137.6,407.1 135.8,405.5 134.5,404.0 133.4,402.1 132.8,400.5 132.6,398.3 132.8,396.4 133.6,394.2 134.6,392.6 136.1,390.8 137.5,389.6 139.7,388.0 143.3,385.9 144.4,385.0 145.1,384.0 145.4,382.7 145.3,381.4 144.7,380.3 143.5,379.2 141.9,378.3 140.1,377.7 138.0,377.4 135.7,377.3 132.6,377.8 126.0,380.2 122.9,381.0 120.0,381.5 116.7,381.9 112.9,381.9 109.1,381.7 106.3,381.2 103.2,380.5 100.7,379.7 98.1,378.6 96.0,377.4 93.5,375.5 86.3,368.6 84.8,367.0 84.0,365.6 83.3,364.0 83.0,362.6 82.9,361.1 83.2,359.1 84.4,356.3 85.6,354.7 86.8,353.4 89.9,351.1 93.8,349.1 99.8,346.9 101.9,345.6 102.9,344.4 103.5,343.1 103.4,341.8 102.9,340.6 101.9,339.5 100.4,338.6 98.5,337.9 96.4,337.5 94.4,337.4 92.6,337.5 87.8,338.5 84.4,339.0 81.9,339.2 78.5,339.2 74.8,338.9 71.2,338.3 67.8,337.4 65.5,336.5 62.9,335.2 61.0,334.0 59.1,332.4 57.8,331.0 56.1,328.1 52.9,321.4 52.3,319.8 52.1,318.3 52.3,315.9 53.3,313.2 54.9,311.0 57.4,308.6 60.9,306.4 65.0,304.7 69.6,303.4 75.6,302.3 78.3,301.3 80.0,300.1 81.0,298.7 81.4,297.1 81.0,295.7 80.2,294.6 79.0,293.7 77.5,293.0 75.5,292.4 72.8,292.1 66.9,292.4 61.9,292.1 57.1,291.3 52.8,289.9 49.0,288.1 47.4,287.0 45.5,285.4 43.5,282.8 42.5,280.0 42.1,273.3 42.2,270.1 42.4,268.5 43.1,266.5 44.1,264.9 45.6,263.1 47.2,261.7 49.7,259.9 52.2,258.6 55.4,257.3 58.0,256.5 61.3,255.8 63.7,255.5 67.2,255.2 72.2,255.2 73.9,254.9 75.6,254.5 77.3,253.8 78.8,252.8 79.9,251.6 80.5,250.3 80.5,249.0 79.9,247.7 78.8,246.6 77.5,245.7 74.8,244.8 67.4,243.9 64.3,243.2 61.7,242.4 59.1,241.3 56.4,239.8 54.7,238.5 52.8,236.6 51.6,234.8 50.9,233.2 50.5,231.2 50.6,229.5 51.2,227.1 54.8,218.9Z"/><path d="M55.1,226.1 56.0,224.4 57.1,223.1 58.4,221.8 60.2,220.4 62.5,219.0 64.5,218.0 68.8,216.4 71.5,215.7 73.9,215.3 78.9,214.8 84.0,214.9 90.7,215.8 93.7,215.7 95.8,215.2 97.8,214.5 99.4,213.5 100.5,212.3 101.2,211.1 101.3,209.7 100.8,208.5 99.9,207.4 98.8,206.6 97.3,205.9 92.8,204.6 90.0,203.6 87.4,202.4 85.7,201.3 83.6,199.6 81.9,197.7 80.7,195.6 80.2,194.0 80.0,192.1 80.2,190.4 80.9,188.4 81.8,186.8 84.1,184.0 90.1,177.7 91.8,176.3 93.4,175.1 96.5,173.4 100.4,171.9 104.3,170.9 108.8,170.2 113.9,170.0 118.9,170.3 123.6,171.3 128.8,173.0 131.9,173.3 134.4,173.1 137.0,172.5 139.0,171.6 140.6,170.3 141.4,169.2 141.7,167.9 141.6,166.7 141.0,165.6 139.5,164.3 135.2,162.1 132.1,159.8 129.9,157.3 128.6,154.5 128.3,153.0 128.4,151.1 129.2,148.2 131.1,145.4 133.8,142.9 141.7,137.9 145.6,135.5 147.9,134.4 150.7,133.2 153.3,132.4 156.5,131.7 159.4,131.3 162.8,131.1 166.6,131.1 169.4,131.4 173.0,132.0 175.3,132.6 178.1,133.6 180.8,134.8 184.2,136.8 185.7,137.3 187.4,137.7 189.6,137.9 191.7,137.7 193.9,137.3 195.8,136.6 197.4,135.6 198.6,134.4 199.2,133.2 199.4,132.0 198.7,130.2 194.8,126.5 193.5,124.7 192.8,123.1 192.4,121.2 192.4,119.0 192.8,117.3 193.9,115.2 195.3,113.3 196.8,111.8 198.9,110.3 201.0,109.0 204.4,107.5 216.6,103.0 219.5,102.1 221.9,101.5 224.7,101.1 227.2,100.8 229.7,100.7 233.1,100.8 238.0,101.4 240.3,101.9 242.9,102.7 246.8,104.4 250.1,106.5 253.6,109.9 255.7,111.0 257.7,111.6 259.9,111.8 262.2,111.8 264.4,111.4 266.4,110.7 268.1,109.8 269.3,108.6 270.0,107.5 270.3,106.3 270.1,105.3 268.6,102.6 267.9,100.6 267.7,99.2 267.8,97.2 268.5,95.1 269.7,93.0 271.4,91.0 273.1,89.5 275.4,88.0 277.5,86.9 280.4,85.7 283.0,84.9 288.0,83.8 299.7,81.6 302.6,81.2 305.1,81.0 309.3,81.0 313.8,81.5 317.7,82.3 321.6,83.7 325.3,85.6 328.2,87.9 330.2,90.5 331.7,93.9 333.4,95.4 335.5,96.4 337.8,96.9 340.3,97.1 343.0,96.8 345.1,96.2 346.7,95.5 348.0,94.5 349.0,93.5 349.6,91.9 349.4,88.5 350.0,85.6 351.7,82.8 354.2,80.2 357.6,77.9 361.6,76.1 366.1,74.7 369.4,74.1 371.9,73.8 383.4,73.3 388.9,73.2 391.8,73.3 395.1,73.6 397.9,74.1 400.9,74.9 403.4,75.7 406.2,77.1 408.5,78.5 410.1,79.9 411.8,81.8 412.6,83.2 413.3,85.0 413.6,87.0 413.5,89.9 413.8,90.9 414.5,91.9 415.8,92.9 417.6,93.7 419.6,94.3 421.6,94.5 423.9,94.4 425.8,94.1 427.9,93.5 429.6,92.6 431.3,91.0 433.2,86.7 434.5,84.8 436.0,83.3 438.4,81.5 440.8,80.1 443.2,79.1 446.5,77.9 449.7,77.1 452.5,76.7 455.9,76.3 458.8,76.3 463.0,76.5 476.7,78.2 479.8,78.8 482.1,79.3 484.6,80.1 486.6,81.0 488.4,81.9 490.6,83.4 493.2,85.8 494.8,88.5 495.3,90.0 495.5,91.6 495.1,94.5 493.3,98.5 493.4,100.2 494.0,101.4 495.2,102.5 496.8,103.4 498.8,104.0 501.0,104.3 503.3,104.3 505.5,104.0 507.3,103.5 508.8,102.8 510.1,101.9 512.4,99.2 514.3,97.5 516.6,96.0 518.5,95.0 521.6,93.6 524.9,92.6 528.5,91.8 531.4,91.5 534.8,91.3 537.7,91.3 541.0,91.6 543.8,92.0 548.6,93.3 559.1,96.5 561.6,97.4 563.5,98.3 566.3,100.0 568.8,102.2 570.4,104.4 571.4,107.0 571.5,109.9 570.7,112.8 568.8,115.6 565.7,118.7 565.0,120.5 565.2,121.9 566.1,123.4 567.8,124.6 569.8,125.4 571.7,125.8 573.7,125.9 576.0,125.8 578.0,125.4 580.3,124.5 584.3,121.9 588.3,120.0 592.8,118.6 597.7,117.8 602.8,117.5 607.7,117.7 612.5,118.6 614.7,119.2 617.5,120.3 625.9,124.6 629.8,126.8 631.6,128.0 633.5,129.6 634.8,131.1 635.9,133.0 636.4,134.6 636.7,136.5 636.5,138.7 635.7,140.9 634.7,142.5 633.6,143.8 631.8,145.5 629.5,147.1 625.9,149.2 624.9,150.1 624.2,151.1 623.8,152.3 624.0,153.6 624.6,154.8 625.8,155.9 627.4,156.8 629.4,157.4 631.5,157.7 633.6,157.8 636.7,157.3 643.2,154.9 646.4,154.1 649.2,153.6 652.6,153.2 656.4,153.2 659.3,153.3 662.9,153.9 666.0,154.6 668.5,155.4 671.2,156.5 673.2,157.7 675.8,159.6 683.0,166.5 684.4,168.1 685.3,169.5 686.0,171.1 686.3,172.5 686.4,174.0 686.1,175.9 684.8,178.8 683.7,180.4 682.4,181.7 679.3,184.0 675.5,186.0 669.4,188.2 667.4,189.5 666.3,190.7 665.8,192.0 665.8,193.3 666.4,194.5 667.5,195.7 669.0,196.6 670.9,197.3 672.9,197.6 674.9,197.7 676.7,197.6 681.5,196.6 684.9,196.1 688.2,195.9 690.8,195.9 694.5,196.2 697.3,196.6 700.7,197.5 703.8,198.6 706.4,199.9 708.3,201.1 710.2,202.6 711.5,204.1 713.2,207.0 716.4,213.7 717.0,215.3 717.2,216.8 717.0,219.2 716.0,221.9 714.4,224.1 711.9,226.5 708.4,228.7 704.3,230.4 699.6,231.7 693.7,232.8 691.0,233.8 689.2,235.0 688.2,236.4 687.9,237.8 688.3,239.4 689.2,240.6 690.4,241.5 692.0,242.2 693.8,242.7 696.4,243.0 702.4,242.7 707.4,243.0 712.1,243.8 716.5,245.2 718.5,246.0 720.8,247.4 723.7,249.7 725.8,252.3 726.8,255.1 727.1,261.8 727.1,265.0 726.9,266.6 726.2,268.6 725.2,270.2 723.7,272.0 722.1,273.4 719.6,275.2 717.0,276.5 714.6,277.5 711.2,278.6 708.8,279.1 705.5,279.6 702.1,279.9 697.1,279.9 695.3,280.1 693.7,280.6 691.8,281.4 690.4,282.3 689.4,283.5 688.8,284.8 688.8,286.1 689.3,287.2 690.3,288.4 691.8,289.4 694.5,290.3 701.9,291.2 705.0,291.9 707.5,292.7 710.2,293.8 712.9,295.3 714.6,296.6 716.4,298.5 717.7,300.3 718.3,301.9 718.7,303.9 718.7,305.5 718.1,308.0 714.6,316.0 713.5,317.8 712.4,319.2 710.9,320.6 709.4,321.8 707.0,323.3 705.1,324.3 700.7,325.9 698.4,326.5 695.6,327.0 690.6,327.5 685.6,327.4 678.8,326.5 675.9,326.6 673.7,327.0 671.8,327.8 670.2,328.8 669.0,329.9 668.4,331.2 668.3,332.5 668.7,333.8 669.6,334.8 670.7,335.6 672.3,336.4 676.7,337.6 679.6,338.6 682.1,339.9 683.8,340.9 686.0,342.6 687.3,344.1 688.6,346.1 689.3,348.2 689.5,350.2 689.3,351.9 688.7,353.8 687.8,355.4 685.4,358.3 679.4,364.5 677.8,366.0 676.2,367.1 673.1,368.8 669.1,370.4 665.3,371.4 660.7,372.1 655.7,372.3 650.7,371.9 646.0,371.0 640.7,369.3 637.6,368.9 635.1,369.1 632.6,369.7 630.4,370.8 628.9,372.0 628.2,373.1 627.8,374.2 628.0,375.6 628.6,376.7 630.0,378.0 634.4,380.2 637.4,382.4 639.7,385.0 640.9,387.8 641.2,389.2 641.2,391.2 640.3,394.1 638.5,396.8 635.7,399.4 627.8,404.4 623.9,406.7 621.7,407.9 618.8,409.0 616.2,409.8 613.0,410.5 610.1,410.9 606.4,411.2 603.0,411.1 599.3,410.8 596.5,410.3 594.3,409.7 591.4,408.7 588.8,407.5 585.3,405.5 583.8,404.9 582.1,404.6 579.9,404.4 577.6,404.6 575.7,405.0 573.7,405.7 572.1,406.7 571.0,407.7 570.3,409.0 570.2,410.3 570.9,412.0 574.8,415.7 576.0,417.5 576.8,419.2 577.2,421.3 577.1,423.3 576.7,425.0 575.7,427.1 574.3,428.9 572.8,430.4 570.7,432.0 568.6,433.2 565.2,434.8 552.9,439.3 550.0,440.2 547.7,440.7 544.8,441.2 542.3,441.4 539.8,441.5 536.4,441.5 531.6,440.9 527.0,439.7 524.9,438.9 522.7,437.9 519.4,435.8 516.0,432.4 513.8,431.2 511.8,430.7 509.6,430.4 507.3,430.5 505.1,430.9 503.1,431.5 501.5,432.5 500.2,433.6 499.5,434.7 499.3,435.9 499.4,437.0 500.9,439.7 501.6,441.6 501.8,443.6 501.7,445.0 501.0,447.2 500.2,448.8 498.5,450.8 496.4,452.7 494.2,454.2 492.0,455.4 489.2,456.6 486.6,457.4 481.5,458.5 469.9,460.6 466.9,461.0 464.4,461.2 460.2,461.2 455.7,460.8 451.8,459.9 447.9,458.6 444.2,456.7 441.3,454.3 439.3,451.7 437.8,448.3 436.1,446.8 434.0,445.8 431.7,445.3 429.0,445.2 426.6,445.5 424.7,446.0 423.0,446.7 421.6,447.6 420.6,448.8 419.9,450.3 420.2,453.8 419.5,456.7 417.9,459.5 415.3,462.1 412.0,464.3 407.9,466.2 405.7,466.9 402.6,467.7 397.6,468.5 386.1,468.9 380.6,469.1 377.7,469.0 374.4,468.7 371.6,468.2 368.6,467.4 366.2,466.5 363.6,465.3 361.1,463.7 359.0,461.9 357.8,460.5 356.7,458.6 356.2,457.2 355.9,455.2 356.1,452.3 355.7,451.3 355.0,450.4 353.9,449.4 352.2,448.6 350.2,448.0 348.0,447.7 345.7,447.8 343.5,448.2 341.5,448.9 339.9,449.7 338.2,451.3 336.4,455.6 335.0,457.4 333.5,458.9 331.4,460.5 328.7,462.1 326.4,463.2 323.1,464.3 319.9,465.1 317.1,465.6 313.7,465.9 310.8,466.0 306.6,465.7 292.8,464.0 289.7,463.5 287.5,462.9 285.0,462.1 283.0,461.3 280.5,460.0 279.0,458.9 276.4,456.4 275.3,454.9 274.6,453.5 274.0,450.6 274.4,447.7 276.2,443.8 276.2,442.1 275.5,440.8 274.3,439.7 272.7,438.9 270.7,438.2 268.5,437.9 266.3,437.9 264.0,438.2 262.2,438.8 260.7,439.5 259.4,440.4 257.1,443.0 255.2,444.7 253.0,446.3 251.1,447.3 248.0,448.6 245.4,449.4 241.8,450.3 238.1,450.8 234.7,451.0 231.8,451.0 228.5,450.7 225.7,450.2 220.9,449.0 210.4,445.8 208.0,444.9 206.0,444.0 203.2,442.3 200.7,440.1 199.1,437.9 198.1,435.3 198.0,432.3 198.9,429.4 200.7,426.7 203.8,423.6 204.6,421.8 204.3,420.2 203.4,418.9 201.7,417.7 199.7,416.9 197.8,416.5 195.8,416.3 193.8,416.4 191.6,416.8 189.3,417.7 185.2,420.3 181.2,422.2 176.7,423.6 171.8,424.5 166.8,424.8 161.8,424.5 157.0,423.7 154.8,423.0 152.0,422.0 143.6,417.6 139.8,415.5 137.9,414.2 136.0,412.6 134.8,411.1 133.7,409.3 133.1,407.7 132.8,405.5 133.1,403.5 133.9,401.4 134.8,399.7 136.4,398.0 137.8,396.7 140.0,395.1 143.6,393.1 144.6,392.2 145.3,391.2 145.7,389.9 145.5,388.6 144.9,387.4 143.7,386.4 142.1,385.5 140.4,384.9 138.2,384.5 136.0,384.5 132.9,385.0 126.3,387.4 123.1,388.2 120.3,388.7 116.9,389.0 113.1,389.1 109.4,388.8 106.6,388.4 103.5,387.7 101.0,386.9 98.3,385.7 96.3,384.6 93.8,382.7 86.5,375.8 85.1,374.1 84.3,372.8 83.6,371.2 83.3,369.7 83.2,368.3 83.5,366.3 84.7,363.5 85.9,361.9 87.1,360.6 90.2,358.2 94.0,356.2 100.1,354.1 102.1,352.8 103.2,351.6 103.7,350.3 103.7,349.0 103.1,347.7 102.2,346.7 100.7,345.7 98.8,345.0 96.7,344.6 94.7,344.5 92.8,344.7 88.1,345.7 84.7,346.1 82.2,346.3 78.8,346.3 75.1,346.1 71.5,345.5 68.1,344.5 65.7,343.6 63.2,342.4 61.3,341.2 59.4,339.6 58.1,338.1 56.3,335.2 53.1,328.6 52.6,326.9 52.3,325.5 52.5,323.1 53.6,320.4 55.2,318.1 57.7,315.8 61.1,313.6 65.3,311.8 69.9,310.5 75.8,309.5 78.5,308.5 80.3,307.2 81.3,305.9 81.6,304.3 81.3,302.9 80.5,301.8 79.3,300.9 77.8,300.1 75.8,299.5 73.1,299.2 67.2,299.5 62.2,299.3 57.4,298.4 53.1,297.1 49.3,295.2 47.7,294.2 45.8,292.6 43.8,289.9 42.7,287.1 42.4,280.5 42.4,277.3 42.7,275.6 43.4,273.7 44.3,272.1 45.8,270.3 47.4,268.8 49.9,267.1 52.5,265.7 55.7,264.5 58.3,263.7 61.5,263.0 64.0,262.6 67.4,262.4 72.4,262.4 74.2,262.1 75.9,261.7 77.6,260.9 79.1,259.9 80.2,258.7 80.7,257.5 80.7,256.1 80.2,254.9 79.1,253.7 77.7,252.9 75.1,252.0 67.6,251.1 64.5,250.4 62.0,249.6 59.3,248.4 56.7,246.9 54.9,245.6 53.1,243.8 51.9,242.0 51.2,240.3 50.8,238.4 50.8,236.7 51.4,234.3 55.1,226.1Z"/><path d="M55.3,233.2 56.3,231.6 57.4,230.2 58.7,229.0 60.4,227.6 62.8,226.1 64.7,225.1 69.1,223.6 71.8,222.9 74.2,222.4 79.2,221.9 84.2,222.0 91.0,222.9 93.9,222.8 96.1,222.4 98.0,221.6 99.6,220.7 100.8,219.5 101.4,218.2 101.5,216.9 101.1,215.6 100.2,214.6 99.1,213.8 97.6,213.0 93.1,211.8 90.2,210.8 87.7,209.5 86.0,208.5 83.8,206.8 82.1,204.9 81.0,202.8 80.5,201.2 80.3,199.2 80.5,197.5 81.1,195.6 82.0,194.0 84.4,191.1 90.4,184.9 92.0,183.4 93.7,182.3 96.7,180.6 100.7,179.0 104.5,178.0 109.1,177.3 114.1,177.1 119.1,177.5 123.8,178.4 129.1,180.1 132.2,180.5 134.7,180.3 137.2,179.7 139.2,178.7 140.9,177.5 141.7,176.3 142.0,175.0 141.8,173.9 141.2,172.7 139.8,171.4 135.4,169.2 132.4,167.0 130.2,164.4 128.9,161.6 128.6,160.2 128.6,158.2 129.5,155.3 131.3,152.6 134.1,150.0 142.0,145.0 145.9,142.7 148.1,141.5 151.0,140.4 153.6,139.6 156.8,138.9 159.7,138.5 163.1,138.2 166.8,138.3 169.7,138.5 173.3,139.2 175.6,139.7 178.4,140.7 181.0,141.9 184.5,143.9 186.0,144.5 187.7,144.8 189.9,145.0 192.0,144.9 194.1,144.5 196.1,143.7 197.7,142.8 198.9,141.6 199.5,140.3 199.6,139.1 198.9,137.4 195.0,133.7 193.8,131.9 193.1,130.3 192.6,128.3 192.7,126.1 193.1,124.4 194.1,122.3 195.5,120.5 197.0,119.0 199.2,117.4 201.2,116.2 204.6,114.6 216.9,110.1 219.8,109.2 222.1,108.7 225.0,108.2 227.5,108.0 230.0,107.9 233.4,108.0 238.3,108.6 240.6,109.1 243.1,109.8 247.1,111.5 250.4,113.6 253.9,117.1 256.0,118.2 258.0,118.7 260.2,119.0 262.5,118.9 264.7,118.5 266.7,117.9 268.4,116.9 269.6,115.8 270.3,114.7 270.6,113.5 270.4,112.4 268.9,109.7 268.2,107.8 268.0,106.3 268.1,104.4 268.8,102.2 270.0,100.1 271.7,98.1 273.4,96.7 275.6,95.2 277.8,94.0 280.6,92.9 283.2,92.0 288.3,90.9 300.0,88.8 302.9,88.4 305.4,88.2 309.6,88.2 314.1,88.7 318.0,89.5 321.9,90.8 325.6,92.8 328.5,95.1 330.5,97.7 332.0,101.1 333.7,102.6 335.8,103.6 338.1,104.1 340.5,104.2 343.2,103.9 345.3,103.4 347.0,102.6 348.3,101.7 349.3,100.6 349.9,99.1 349.6,95.6 350.3,92.7 351.9,89.9 354.5,87.4 357.8,85.1 361.9,83.2 366.4,81.9 369.7,81.2 372.2,80.9 383.7,80.5 389.2,80.3 392.1,80.4 395.4,80.7 398.2,81.2 401.2,82.0 403.6,82.9 406.5,84.2 408.7,85.7 410.3,87.0 412.0,89.0 412.9,90.3 413.6,92.2 413.9,94.2 413.7,97.1 414.1,98.1 414.8,99.0 416.1,100.1 417.8,100.9 419.9,101.4 421.9,101.7 424.1,101.6 426.1,101.3 428.1,100.6 429.9,99.7 431.6,98.1 433.4,93.8 434.8,92.0 436.3,90.5 438.6,88.7 441.1,87.3 443.4,86.2 446.7,85.1 449.9,84.3 452.8,83.8 456.1,83.5 459.1,83.4 463.2,83.7 477.0,85.4 480.1,85.9 482.3,86.5 484.8,87.3 486.8,88.1 488.7,89.1 490.9,90.5 493.4,93.0 495.1,95.7 495.5,97.1 495.8,98.8 495.4,101.7 493.6,105.6 493.6,107.3 494.3,108.6 495.5,109.7 497.1,110.6 499.1,111.2 501.3,111.5 503.5,111.5 505.8,111.2 507.6,110.6 509.1,109.9 510.4,109.0 512.7,106.4 514.6,104.7 516.9,103.1 518.7,102.1 521.8,100.8 525.2,99.7 528.8,99.0 531.7,98.6 535.1,98.4 538.0,98.5 541.3,98.7 544.1,99.2 548.9,100.5 559.4,103.6 561.8,104.5 563.8,105.4 566.6,107.1 569.1,109.4 570.7,111.5 571.7,114.2 571.8,117.1 570.9,120.0 569.1,122.7 566.0,125.9 565.3,127.7 565.5,129.1 566.4,130.5 568.1,131.8 570.1,132.6 572.0,133.0 574.0,133.1 576.3,133.0 578.2,132.6 580.5,131.7 584.6,129.1 588.6,127.2 593.1,125.8 598.0,124.9 603.0,124.6 608.0,124.9 612.8,125.8 615.0,126.4 617.8,127.4 626.2,131.8 630.0,134.0 631.9,135.2 633.8,136.8 635.0,138.3 636.1,140.1 636.7,141.7 637.0,143.7 636.7,145.9 635.9,148.0 635.0,149.7 633.9,151.0 632.0,152.7 629.8,154.3 626.2,156.3 625.2,157.2 624.5,158.2 624.1,159.4 624.2,160.7 624.9,162.0 626.1,163.1 627.7,163.9 629.6,164.6 631.8,164.9 633.8,164.9 636.9,164.4 643.5,162.0 646.7,161.2 649.5,160.7 652.9,160.4 656.7,160.3 659.6,160.5 663.2,161.0 666.3,161.7 668.8,162.5 671.5,163.7 673.5,164.9 676.0,166.8 683.3,173.6 684.7,175.3 685.5,176.6 686.2,178.3 686.6,179.7 686.6,181.1 686.3,183.1 685.1,186.0 683.9,187.5 682.7,188.8 679.6,191.2 675.8,193.2 669.7,195.4 667.7,196.6 666.6,197.8 666.1,199.1 666.1,200.4 666.7,201.7 667.8,202.8 669.3,203.7 671.2,204.4 673.1,204.8 675.2,204.9 677.0,204.7 681.7,203.7 685.1,203.3 688.5,203.0 691.0,203.1 694.7,203.3 697.5,203.8 700.9,204.6 704.1,205.8 706.6,207.0 708.5,208.2 710.4,209.8 711.7,211.3 713.5,214.2 716.7,220.8 717.2,222.5 717.5,223.9 717.3,226.4 716.3,229.0 714.6,231.3 712.1,233.6 708.7,235.8 704.5,237.6 699.9,238.9 694.0,239.9 691.3,240.9 689.5,242.2 688.5,243.5 688.2,245.0 688.5,246.5 689.4,247.7 690.7,248.6 692.2,249.4 694.0,249.9 696.7,250.2 702.6,249.9 707.6,250.1 712.4,251.0 716.8,252.3 718.7,253.2 721.1,254.5 724.0,256.8 726.0,259.5 727.1,262.3 727.4,268.9 727.4,272.1 727.1,273.8 726.4,275.7 725.5,277.3 724.0,279.1 722.4,280.6 719.9,282.3 717.3,283.7 714.9,284.7 711.5,285.7 709.1,286.2 705.8,286.8 702.4,287.0 697.4,287.1 695.6,287.3 693.9,287.8 692.1,288.6 690.7,289.5 689.6,290.7 689.1,292.0 689.1,293.3 689.6,294.4 690.6,295.6 692.1,296.5 694.7,297.4 702.2,298.3 705.3,299.0 707.8,299.8 710.5,301.0 713.1,302.5 714.9,303.8 716.7,305.6 717.9,307.5 718.6,309.1 719.0,311.0 719.0,312.7 718.4,315.1 714.8,323.2 713.8,325.0 712.7,326.3 711.2,327.8 709.7,329.0 707.3,330.5 705.3,331.4 701.0,333.0 698.7,333.6 695.9,334.2 690.9,334.6 685.8,334.5 679.1,333.6 676.1,333.8 674.0,334.2 672.0,334.9 670.4,335.9 669.3,337.1 668.6,338.4 668.5,339.7 669.0,340.9 669.9,342.0 671.0,342.8 672.5,343.5 677.0,344.8 679.8,345.8 682.4,347.0 684.1,348.1 686.2,349.8 687.6,351.3 688.9,353.3 689.6,355.4 689.8,357.4 689.6,359.0 689.0,361.0 688.0,362.6 685.7,365.4 679.7,371.7 678.0,373.1 676.4,374.3 673.3,376.0 669.4,377.5 665.5,378.5 661.0,379.2 655.9,379.4 651.0,379.1 646.2,378.1 641.0,376.4 637.9,376.1 635.4,376.3 632.8,376.9 630.7,377.9 629.2,379.1 628.4,380.2 628.1,381.4 628.2,382.7 628.8,383.8 630.3,385.1 634.6,387.4 637.7,389.6 639.9,392.1 641.2,394.9 641.5,396.4 641.5,398.3 640.6,401.2 638.7,404.0 636.0,406.5 628.1,411.5 624.2,413.9 622.0,415.0 619.1,416.2 616.5,417.0 613.3,417.7 610.4,418.1 606.6,418.3 603.2,418.3 599.5,417.9 596.8,417.4 594.5,416.8 591.7,415.9 589.0,414.6 585.6,412.6 584.1,412.1 582.4,411.7 580.2,411.6 577.9,411.7 575.9,412.1 574.0,412.8 572.4,413.8 571.3,414.8 570.6,416.1 570.4,417.4 571.1,419.2 575.0,422.9 576.3,424.7 577.0,426.3 577.5,428.5 577.4,430.4 577.0,432.1 575.9,434.3 574.5,436.1 573.0,437.6 570.9,439.2 568.8,440.4 565.4,441.9 553.2,446.4 550.3,447.3 547.9,447.9 545.1,448.3 542.6,448.6 540.1,448.7 536.7,448.6 531.8,448.0 527.3,446.9 525.2,446.1 523.0,445.1 519.7,442.9 516.2,439.5 514.1,438.4 512.1,437.8 509.9,437.6 507.6,437.6 505.4,438.0 503.4,438.7 501.7,439.6 500.5,440.8 499.8,441.9 499.5,443.1 499.7,444.1 501.2,446.8 501.9,448.8 502.1,450.7 502.0,452.2 501.3,454.3 500.4,456.0 498.8,458.0 496.7,459.9 494.5,461.4 492.3,462.5 489.4,463.7 486.9,464.5 481.8,465.7 470.1,467.8 467.2,468.2 464.7,468.4 460.5,468.4 456.0,467.9 452.1,467.1 448.2,465.7 444.5,463.8 441.6,461.5 439.6,458.9 438.1,455.5 436.4,454.0 434.3,453.0 432.0,452.5 429.3,452.3 426.8,452.6 424.9,453.1 423.3,453.9 421.9,454.8 420.8,456.0 420.2,457.5 420.4,460.9 419.8,463.8 418.1,466.6 415.6,469.2 412.2,471.5 408.2,473.3 406.0,474.1 402.8,474.9 397.9,475.6 386.4,476.1 380.9,476.2 378.0,476.1 374.7,475.8 371.9,475.3 368.9,474.5 366.4,473.7 363.9,472.5 361.4,470.9 359.3,469.1 358.1,467.6 357.0,465.8 356.5,464.4 356.2,462.4 356.3,459.5 356.0,458.5 355.3,457.5 354.1,456.6 352.4,455.7 350.4,455.2 348.2,454.9 346.0,455.0 343.7,455.3 341.7,456.0 340.2,456.8 338.5,458.4 336.6,462.8 335.3,464.6 333.8,466.1 331.7,467.7 329.0,469.3 326.6,470.3 323.3,471.5 320.2,472.3 317.3,472.7 313.9,473.1 311.0,473.1 306.8,472.9 293.1,471.2 290.0,470.6 287.7,470.1 285.2,469.3 283.2,468.4 280.8,467.1 279.2,466.0 276.7,463.6 275.6,462.0 274.9,460.7 274.3,457.8 274.7,454.9 276.5,450.9 276.4,449.2 275.8,448.0 274.6,446.9 273.0,446.0 271.0,445.4 268.8,445.1 266.5,445.1 264.3,445.4 262.5,446.0 261.0,446.6 259.7,447.5 257.4,450.2 255.5,451.9 253.2,453.4 251.4,454.4 248.3,455.8 245.7,456.6 242.1,457.4 238.4,458.0 235.0,458.2 232.1,458.1 228.8,457.8 226.0,457.4 221.2,456.1 210.7,452.9 208.2,452.0 206.3,451.1 203.5,449.4 201.0,447.2 199.4,445.0 198.4,442.4 198.3,439.5 199.1,436.6 201.0,433.8 204.1,430.7 204.8,428.9 204.6,427.3 203.7,426.0 202.0,424.8 200.0,424.0 198.1,423.6 196.1,423.5 194.0,423.6 191.8,424.0 189.5,424.9 185.5,427.5 181.5,429.4 177.0,430.8 172.1,431.6 167.1,431.9 162.1,431.7 157.3,430.8 155.1,430.2 152.3,429.1 143.9,424.8 140.0,422.6 138.2,421.4 136.3,419.8 135.0,418.3 133.9,416.5 133.4,414.8 133.1,412.6 133.3,410.7 134.1,408.5 135.1,406.9 136.6,405.1 138.0,403.9 140.3,402.3 143.9,400.2 144.9,399.3 145.6,398.3 146.0,397.0 145.8,395.7 145.2,394.6 144.0,393.5 142.4,392.6 140.7,392.0 138.5,391.7 136.2,391.6 133.1,392.1 126.6,394.5 123.4,395.4 120.6,395.8 117.2,396.2 113.4,396.2 109.7,396.0 106.9,395.6 103.8,394.8 101.3,394.0 98.6,392.9 96.6,391.7 94.0,389.8 86.8,382.9 85.4,381.3 84.5,379.9 83.8,378.3 83.5,376.9 83.4,375.4 83.7,373.5 85.0,370.6 86.1,369.0 87.4,367.7 90.5,365.4 94.3,363.4 100.4,361.2 102.4,359.9 103.5,358.7 104.0,357.4 104.0,356.1 103.4,354.9 102.5,353.9 101.0,352.9 99.1,352.2 97.0,351.8 94.9,351.7 93.1,351.8 88.3,352.8 85.0,353.3 82.4,353.5 79.1,353.5 75.3,353.2 71.7,352.6 68.4,351.7 66.0,350.8 63.5,349.6 61.5,348.3 59.6,346.8 58.3,345.3 56.6,342.4 53.4,335.7 52.8,334.1 52.6,332.6 52.8,330.2 53.8,327.6 55.4,325.3 57.9,322.9 61.4,320.7 65.6,319.0 70.2,317.7 76.1,316.7 78.8,315.6 80.6,314.4 81.6,313.0 81.9,311.4 81.5,310.0 80.7,309.0 79.6,308.0 78.0,307.3 76.0,306.7 73.4,306.4 67.5,306.7 62.5,306.4 57.7,305.6 53.3,304.2 49.6,302.4 47.9,301.3 46.1,299.7 44.1,297.1 43.0,294.3 42.7,287.6 42.7,284.5 42.9,282.8 43.7,280.8 44.6,279.2 46.1,277.4 47.7,276.0 50.2,274.3 52.8,272.9 55.9,271.6 58.6,270.9 61.8,270.2 64.3,269.8 67.7,269.6 72.7,269.5 74.5,269.3 76.2,268.8 77.8,268.1 79.4,267.1 80.4,265.9 81.0,264.6 81.0,263.3 80.4,262.0 79.4,260.9 78.0,260.1 75.3,259.1 67.9,258.2 64.8,257.5 62.3,256.7 59.6,255.6 57.0,254.1 55.2,252.8 53.4,250.9 52.2,249.1 51.5,247.5 51.1,245.5 51.1,243.9 51.7,241.4 55.3,233.2Z"/><path d="M55.6,240.4 56.6,238.7 57.6,237.4 58.9,236.1 60.7,234.7 63.1,233.3 65.0,232.3 69.3,230.7 72.1,230.0 74.5,229.6 79.5,229.1 84.5,229.2 91.3,230.1 94.2,230.0 96.4,229.5 98.3,228.8 99.9,227.8 101.1,226.6 101.7,225.4 101.8,224.1 101.3,222.8 100.5,221.7 99.4,220.9 97.8,220.2 93.4,219.0 90.5,217.9 88.0,216.7 86.3,215.7 84.1,213.9 82.4,212.0 81.3,210.0 80.7,208.3 80.5,206.4 80.7,204.7 81.4,202.7 82.3,201.1 84.7,198.3 90.6,192.1 92.3,190.6 93.9,189.4 97.0,187.7 100.9,186.2 104.8,185.2 109.4,184.5 114.4,184.3 119.4,184.7 124.1,185.6 129.4,187.3 132.5,187.6 134.9,187.4 137.5,186.8 139.5,185.9 141.1,184.6 141.9,183.5 142.3,182.2 142.1,181.0 141.5,179.9 140.1,178.6 135.7,176.4 132.6,174.1 130.4,171.6 129.1,168.8 128.9,167.3 128.9,165.4 129.8,162.5 131.6,159.7 134.3,157.2 142.2,152.2 146.2,149.8 148.4,148.7 151.2,147.6 153.9,146.8 157.1,146.0 159.9,145.6 163.3,145.4 167.1,145.4 170.0,145.7 173.5,146.3 175.8,146.9 178.7,147.9 181.3,149.1 184.7,151.1 186.3,151.6 187.9,152.0 190.2,152.2 192.2,152.0 194.4,151.6 196.3,150.9 198.0,149.9 199.1,148.8 199.8,147.5 199.9,146.3 199.2,144.5 195.3,140.8 194.0,139.0 193.3,137.4 192.9,135.5 192.9,133.3 193.4,131.6 194.4,129.5 195.8,127.6 197.3,126.2 199.4,124.6 201.5,123.3 204.9,121.8 217.1,117.3 220.0,116.4 222.4,115.9 225.2,115.4 227.7,115.1 230.3,115.0 233.6,115.1 238.5,115.7 240.8,116.2 243.4,117.0 247.4,118.7 250.6,120.8 254.1,124.2 256.3,125.3 258.3,125.9 260.5,126.2 262.8,126.1 265.0,125.7 266.9,125.0 268.6,124.1 269.9,123.0 270.6,121.8 270.8,120.6 270.7,119.6 269.2,116.9 268.5,114.9 268.3,113.5 268.4,111.5 269.0,109.4 270.2,107.3 272.0,105.3 273.6,103.9 275.9,102.3 278.1,101.2 280.9,100.0 283.5,99.2 288.6,98.1 300.2,95.9 303.1,95.5 305.7,95.3 309.8,95.3 314.4,95.8 318.2,96.6 322.2,98.0 325.8,99.9 328.7,102.2 330.8,104.8 332.3,108.2 333.9,109.8 336.0,110.7 338.3,111.2 340.8,111.4 343.5,111.1 345.6,110.5 347.2,109.8 348.6,108.8 349.5,107.8 350.1,106.2 349.9,102.8 350.6,99.9 352.2,97.1 354.7,94.5 358.1,92.2 362.1,90.4 366.7,89.0 369.9,88.4 372.4,88.1 383.9,87.6 389.4,87.5 392.3,87.6 395.7,87.9 398.4,88.4 401.5,89.2 403.9,90.0 406.8,91.4 409.0,92.8 410.6,94.2 412.3,96.1 413.1,97.5 413.9,99.4 414.1,101.3 414.0,104.2 414.4,105.2 415.1,106.2 416.4,107.2 418.1,108.1 420.1,108.6 422.1,108.8 424.4,108.8 426.4,108.4 428.4,107.8 430.1,106.9 431.8,105.3 433.7,101.0 435.1,99.1 436.6,97.6 438.9,95.9 441.4,94.4 443.7,93.4 447.0,92.2 450.2,91.4 453.0,91.0 456.4,90.7 459.3,90.6 463.5,90.9 477.3,92.6 480.3,93.1 482.6,93.6 485.1,94.5 487.1,95.3 488.9,96.3 491.1,97.7 493.7,100.1 495.3,102.8 495.8,104.3 496.0,105.9 495.7,108.8 493.8,112.8 493.9,114.5 494.6,115.7 495.8,116.8 497.4,117.7 499.3,118.3 501.5,118.6 503.8,118.6 506.0,118.3 507.9,117.8 509.3,117.1 510.7,116.2 513.0,113.5 514.9,111.8 517.1,110.3 519.0,109.3 522.1,108.0 525.5,106.9 529.1,106.1 531.9,105.8 535.3,105.6 538.2,105.6 541.6,105.9 544.3,106.4 549.1,107.6 559.6,110.8 562.1,111.7 564.0,112.6 566.9,114.3 569.4,116.5 571.0,118.7 572.0,121.3 572.1,124.2 571.2,127.1 569.4,129.9 566.2,133.0 565.5,134.8 565.7,136.2 566.7,137.7 568.3,138.9 570.4,139.7 572.3,140.1 574.3,140.3 576.5,140.1 578.5,139.7 580.8,138.8 584.8,136.2 588.8,134.3 593.4,132.9 598.3,132.1 603.3,131.8 608.3,132.1 613.0,132.9 615.3,133.5 618.1,134.6 626.4,138.9 630.3,141.1 632.2,142.4 634.0,144.0 635.3,145.4 636.4,147.3 637.0,148.9 637.2,150.9 637.0,153.0 636.2,155.2 635.2,156.8 634.1,158.2 632.3,159.9 630.1,161.4 626.5,163.5 625.5,164.4 624.8,165.4 624.4,166.6 624.5,167.9 625.2,169.1 626.3,170.2 627.9,171.1 629.9,171.7 632.1,172.1 634.1,172.1 637.2,171.6 643.8,169.2 646.9,168.4 649.8,167.9 653.1,167.5 656.9,167.5 659.8,167.7 663.5,168.2 666.6,168.9 669.1,169.7 671.7,170.9 673.8,172.0 676.3,173.9 683.5,180.8 685.0,182.4 685.8,183.8 686.5,185.4 686.8,186.8 686.9,188.3 686.6,190.3 685.4,193.1 684.2,194.7 683.0,196.0 679.9,198.4 676.0,200.3 670.0,202.5 667.9,203.8 666.9,205.0 666.3,206.3 666.4,207.6 666.9,208.8 668.0,210.0 669.6,210.9 671.5,211.6 673.4,211.9 675.4,212.0 677.2,211.9 682.0,210.9 685.4,210.4 688.8,210.2 691.3,210.2 695.0,210.5 697.8,210.9 701.2,211.8 704.4,212.9 706.9,214.2 708.8,215.4 710.7,217.0 712.0,218.4 713.7,221.3 716.9,228.0 717.5,229.6 717.7,231.1 717.5,233.5 716.5,236.2 714.9,238.4 712.4,240.8 708.9,243.0 704.8,244.8 700.2,246.0 694.2,247.1 691.5,248.1 689.8,249.4 688.8,250.7 688.4,252.1 688.8,253.7 689.7,254.9 690.9,255.8 692.5,256.5 694.3,257.0 697.0,257.3 702.9,257.0 707.9,257.3 712.7,258.1 717.0,259.5 719.0,260.3 721.4,261.7 724.3,264.0 726.3,266.6 727.4,269.4 727.7,276.1 727.6,279.3 727.4,281.0 726.7,282.9 725.7,284.5 724.2,286.3 722.6,287.8 720.1,289.5 717.6,290.8 715.2,291.8 711.8,292.9 709.4,293.4 706.1,293.9 702.6,294.2 697.7,294.2 695.9,294.5 694.2,294.9 692.3,295.7 691.0,296.6 689.9,297.8 689.3,299.1 689.3,300.4 689.8,301.6 690.8,302.7 692.3,303.7 695.0,304.6 702.4,305.5 705.5,306.2 708.1,307.0 710.7,308.1 713.4,309.6 715.1,310.9 717.0,312.8 718.2,314.6 718.9,316.2 719.3,318.2 719.3,319.9 718.6,322.3 715.1,330.3 714.1,332.1 713.0,333.5 711.5,335.0 709.9,336.1 707.6,337.6 705.6,338.6 701.3,340.2 698.9,340.8 696.1,341.3 691.1,341.8 686.1,341.7 679.4,340.8 676.4,340.9 674.2,341.4 672.3,342.1 670.7,343.1 669.5,344.2 668.9,345.5 668.8,346.8 669.3,348.1 670.1,349.1 671.2,350.0 672.8,350.7 677.2,351.9 680.1,352.9 682.7,354.2 684.3,355.2 686.5,357.0 687.9,358.4 689.1,360.4 689.9,362.6 690.1,364.5 689.9,366.2 689.2,368.1 688.3,369.8 685.9,372.6 680.0,378.8 678.3,380.3 676.7,381.4 673.6,383.1 669.7,384.7 665.8,385.7 661.2,386.4 656.2,386.6 651.2,386.2 646.5,385.3 641.2,383.6 638.2,383.3 635.7,383.4 633.1,384.1 630.9,385.1 629.5,386.3 628.7,387.4 628.4,388.6 628.5,389.9 629.1,391.0 630.5,392.3 634.9,394.5 638.0,396.7 640.2,399.3 641.5,402.1 641.7,403.5 641.7,405.5 640.8,408.4 639.0,411.2 636.3,413.7 628.4,418.7 624.5,421.0 622.2,422.2 619.4,423.3 616.7,424.1 613.5,424.8 610.7,425.2 606.9,425.5 603.5,425.4 599.8,425.1 597.1,424.6 594.8,424.0 591.9,423.0 589.3,421.8 585.9,419.8 584.4,419.2 582.7,418.9 580.4,418.7 578.2,418.9 576.2,419.3 574.3,420.0 572.7,421.0 571.6,422.0 570.9,423.3 570.7,424.6 571.4,426.4 575.3,430.1 576.6,431.8 577.3,433.5 577.7,435.6 577.7,437.6 577.2,439.3 576.2,441.4 574.8,443.2 573.3,444.7 571.2,446.3 569.1,447.5 565.7,449.1 553.5,453.6 550.6,454.5 548.2,455.0 545.4,455.5 542.9,455.7 540.3,455.8 537.0,455.8 532.1,455.2 527.5,454.0 525.5,453.2 523.2,452.2 520.0,450.1 516.5,446.7 514.4,445.5 512.3,445.0 510.1,444.7 507.9,444.8 505.7,445.2 503.7,445.9 502.0,446.8 500.7,447.9 500.0,449.0 499.8,450.2 499.9,451.3 501.5,454.0 502.1,455.9 502.4,457.9 502.2,459.3 501.6,461.5 500.7,463.1 499.1,465.1 497.0,467.0 494.7,468.5 492.5,469.7 489.7,470.9 487.1,471.7 482.0,472.8 470.4,475.0 467.5,475.4 465.0,475.5 460.8,475.5 456.2,475.1 452.4,474.2 448.4,472.9 444.8,471.0 441.9,468.6 439.9,466.0 438.3,462.6 436.7,461.1 434.6,460.2 432.3,459.6 429.6,459.5 427.1,459.8 425.2,460.3 423.5,461.0 422.2,461.9 421.1,463.1 420.5,464.7 420.7,468.1 420.0,471.0 418.4,473.8 415.9,476.4 412.5,478.6 408.5,480.5 406.3,481.2 403.1,482.0 398.2,482.8 386.7,483.3 381.2,483.4 378.3,483.3 374.9,483.0 372.2,482.5 369.1,481.7 366.7,480.8 364.1,479.6 361.6,478.0 359.6,476.3 358.3,474.8 357.3,472.9 356.8,471.5 356.5,469.5 356.6,466.7 356.2,465.6 355.5,464.7 354.4,463.7 352.7,462.9 350.7,462.3 348.5,462.1 346.2,462.1 344.0,462.5 342.0,463.2 340.5,464.0 338.8,465.6 336.9,469.9 335.5,471.7 334.1,473.2 332.0,474.8 329.3,476.4 326.9,477.5 323.6,478.6 320.4,479.4 317.6,479.9 314.2,480.2 311.3,480.3 307.1,480.0 293.3,478.3 290.3,477.8 288.0,477.2 285.5,476.4 283.5,475.6 281.1,474.3 279.5,473.2 276.9,470.7 275.8,469.2 275.2,467.8 274.6,464.9 274.9,462.0 276.8,458.1 276.7,456.4 276.0,455.1 274.8,454.0 273.2,453.2 271.3,452.6 269.1,452.2 266.8,452.2 264.6,452.6 262.7,453.1 261.3,453.8 259.9,454.7 257.6,457.3 255.7,459.0 253.5,460.6 251.6,461.6 248.5,462.9 245.9,463.8 242.4,464.6 238.7,465.1 235.3,465.3 232.4,465.3 229.0,465.0 226.3,464.5 221.5,463.3 211.0,460.1 208.5,459.2 206.6,458.3 203.8,456.6 201.3,454.4 199.7,452.2 198.7,449.6 198.5,446.7 199.4,443.8 201.2,441.0 204.4,437.9 205.1,436.1 204.8,434.5 203.9,433.2 202.3,432.0 200.3,431.2 198.4,430.8 196.3,430.6 194.3,430.7 192.1,431.2 189.8,432.0 185.8,434.7 181.8,436.5 177.2,437.9 172.4,438.8 167.3,439.1 162.3,438.8 157.6,438.0 155.3,437.3 152.5,436.3 144.2,431.9 140.3,429.8 138.4,428.5 136.6,426.9 135.3,425.4 134.2,423.6 133.6,422.0 133.4,419.8 133.6,417.8 134.4,415.7 135.4,414.1 136.9,412.3 138.3,411.0 140.5,409.4 144.1,407.4 145.2,406.5 145.9,405.5 146.2,404.2 146.1,402.9 145.5,401.8 144.3,400.7 142.7,399.8 140.9,399.2 138.8,398.8 136.5,398.8 133.4,399.3 126.8,401.7 123.7,402.5 120.8,403.0 117.5,403.3 113.7,403.4 109.9,403.1 107.1,402.7 104.0,402.0 101.5,401.2 98.9,400.0 96.8,398.9 94.3,397.0 87.1,390.1 85.7,388.4 84.8,387.1 84.1,385.5 83.8,384.0 83.7,382.6 84.0,380.6 85.2,377.8 86.4,376.2 87.6,374.9 90.7,372.5 94.6,370.5 100.6,368.4 102.7,367.1 103.7,365.9 104.3,364.6 104.2,363.3 103.7,362.0 102.7,361.0 101.2,360.1 99.3,359.4 97.2,358.9 95.2,358.9 93.4,359.0 88.6,360.0 85.2,360.5 82.7,360.6 79.3,360.7 75.6,360.4 72.0,359.8 68.6,358.9 66.3,358.0 63.7,356.7 61.8,355.5 59.9,353.9 58.6,352.4 56.9,349.5 53.7,342.9 53.1,341.2 52.9,339.8 53.1,337.4 54.1,334.7 55.7,332.4 58.2,330.1 61.7,327.9 65.8,326.1 70.4,324.8 76.4,323.8 79.1,322.8 80.8,321.5 81.8,320.2 82.2,318.6 81.8,317.2 81.0,316.1 79.8,315.2 78.3,314.4 76.3,313.8 73.7,313.6 67.7,313.8 62.7,313.6 57.9,312.8 53.6,311.4 49.8,309.6 48.2,308.5 46.3,306.9 44.3,304.3 43.3,301.4 42.9,294.8 43.0,291.6 43.2,289.9 43.9,288.0 44.9,286.4 46.4,284.6 48.0,283.1 50.5,281.4 53.0,280.1 56.2,278.8 58.8,278.0 62.1,277.3 64.5,277.0 68.0,276.7 73.0,276.7 74.7,276.4 76.4,276.0 78.1,275.3 79.6,274.2 80.7,273.1 81.3,271.8 81.3,270.5 80.7,269.2 79.6,268.1 78.3,267.2 75.6,266.3 68.2,265.4 65.1,264.7 62.5,263.9 59.9,262.8 57.2,261.3 55.5,259.9 53.6,258.1 52.4,256.3 51.7,254.6 51.3,252.7 51.4,251.0 52.0,248.6 55.6,240.4Z"/><path d="M55.9,247.5 56.8,245.9 57.9,244.6 59.2,243.3 61.0,241.9 63.3,240.4 65.3,239.5 69.6,237.9 72.3,237.2 74.7,236.7 79.7,236.2 84.8,236.3 91.5,237.2 94.5,237.1 96.6,236.7 98.6,235.9 100.2,235.0 101.3,233.8 102.0,232.5 102.1,231.2 101.6,229.9 100.7,228.9 99.6,228.1 98.1,227.3 93.6,226.1 90.8,225.1 88.2,223.9 86.5,222.8 84.4,221.1 82.7,219.2 81.5,217.1 81.0,215.5 80.8,213.5 81.0,211.8 81.7,209.9 82.6,208.3 84.9,205.4 90.9,199.2 92.6,197.8 94.2,196.6 97.3,194.9 101.2,193.3 105.1,192.3 109.6,191.6 114.7,191.4 119.7,191.8 124.4,192.8 129.6,194.4 132.7,194.8 135.2,194.6 137.8,194.0 139.8,193.1 141.4,191.8 142.2,190.6 142.5,189.3 142.4,188.2 141.8,187.0 140.3,185.7 136.0,183.5 132.9,181.3 130.7,178.7 129.4,175.9 129.1,174.5 129.2,172.5 130.0,169.6 131.9,166.9 134.6,164.4 142.5,159.3 146.4,157.0 148.7,155.9 151.5,154.7 154.1,153.9 157.3,153.2 160.2,152.8 163.6,152.6 167.4,152.6 170.2,152.9 173.8,153.5 176.1,154.0 178.9,155.0 181.6,156.2 185.0,158.2 186.5,158.8 188.2,159.2 190.4,159.3 192.5,159.2 194.7,158.8 196.6,158.0 198.2,157.1 199.4,155.9 200.0,154.6 200.2,153.5 199.5,151.7 195.6,148.0 194.3,146.2 193.6,144.6 193.2,142.6 193.2,140.4 193.6,138.8 194.7,136.6 196.1,134.8 197.6,133.3 199.7,131.7 201.8,130.5 205.2,128.9 217.4,124.5 220.3,123.6 222.7,123.0 225.5,122.5 228.0,122.3 230.5,122.2 233.9,122.3 238.8,122.9 241.1,123.4 243.7,124.1 247.6,125.8 250.9,128.0 254.4,131.4 256.5,132.5 258.5,133.1 260.7,133.3 263.0,133.2 265.2,132.9 267.2,132.2 268.9,131.2 270.1,130.1 270.8,129.0 271.1,127.8 270.9,126.8 269.4,124.0 268.7,122.1 268.5,120.7 268.6,118.7 269.3,116.5 270.5,114.4 272.2,112.4 273.9,111.0 276.2,109.5 278.3,108.3 281.2,107.2 283.8,106.3 288.9,105.2 300.5,103.1 303.4,102.7 305.9,102.5 310.1,102.5 314.6,103.0 318.5,103.8 322.4,105.1 326.1,107.1 329.0,109.4 331.0,112.0 332.5,115.4 334.2,116.9 336.3,117.9 338.6,118.4 341.1,118.5 343.8,118.3 345.9,117.7 347.5,116.9 348.8,116.0 349.8,114.9 350.4,113.4 350.2,110.0 350.8,107.0 352.5,104.2 355.0,101.7 358.4,99.4 362.4,97.5 366.9,96.2 370.2,95.6 372.7,95.3 384.2,94.8 389.7,94.7 392.6,94.7 395.9,95.1 398.7,95.5 401.7,96.3 404.2,97.2 407.0,98.6 409.3,100.0 410.9,101.3 412.6,103.3 413.4,104.6 414.1,106.5 414.4,108.5 414.3,111.4 414.6,112.4 415.3,113.4 416.6,114.4 418.4,115.2 420.4,115.7 422.4,116.0 424.7,115.9 426.7,115.6 428.7,114.9 430.4,114.0 432.1,112.5 434.0,108.1 435.3,106.3 436.8,104.8 439.2,103.0 441.6,101.6 444.0,100.5 447.3,99.4 450.5,98.6 453.3,98.1 456.7,97.8 459.6,97.8 463.8,98.0 477.5,99.7 480.6,100.2 482.9,100.8 485.4,101.6 487.4,102.5 489.2,103.4 491.4,104.9 494.0,107.3 495.6,110.0 496.1,111.4 496.3,113.1 495.9,116.0 494.1,120.0 494.2,121.7 494.8,122.9 496.0,124.0 497.7,124.9 499.6,125.5 501.8,125.8 504.1,125.8 506.3,125.5 508.1,124.9 509.6,124.3 510.9,123.3 513.2,120.7 515.1,119.0 517.4,117.5 519.3,116.4 522.4,115.1 525.7,114.1 529.3,113.3 532.2,112.9 535.6,112.7 538.5,112.8 541.8,113.1 544.6,113.5 549.4,114.8 559.9,118.0 562.4,118.8 564.3,119.7 567.1,121.5 569.6,123.7 571.2,125.9 572.2,128.5 572.4,131.4 571.5,134.3 569.6,137.0 566.5,140.2 565.8,142.0 566.0,143.4 566.9,144.9 568.6,146.1 570.6,146.9 572.5,147.3 574.5,147.4 576.8,147.3 578.8,146.9 581.1,146.0 585.1,143.4 589.1,141.5 593.6,140.1 598.5,139.2 603.6,138.9 608.6,139.2 613.3,140.1 615.5,140.7 618.3,141.7 626.7,146.1 630.6,148.3 632.5,149.5 634.3,151.1 635.6,152.6 636.7,154.4 637.2,156.1 637.5,158.0 637.3,160.2 636.5,162.4 635.5,164.0 634.4,165.3 632.6,167.0 630.3,168.6 626.7,170.7 625.7,171.6 625.0,172.5 624.7,173.7 624.8,175.0 625.4,176.3 626.6,177.4 628.2,178.3 630.2,178.9 632.3,179.2 634.4,179.2 637.5,178.8 644.0,176.3 647.2,175.5 650.0,175.0 653.4,174.7 657.2,174.6 660.1,174.8 663.7,175.3 666.8,176.0 669.3,176.9 672.0,178.0 674.0,179.2 676.6,181.1 683.8,188.0 685.2,189.6 686.1,190.9 686.8,192.6 687.1,194.0 687.2,195.5 686.9,197.4 685.6,200.3 684.5,201.8 683.2,203.1 680.1,205.5 676.3,207.5 670.2,209.7 668.2,210.9 667.1,212.1 666.6,213.4 666.6,214.7 667.2,216.0 668.3,217.1 669.8,218.1 671.7,218.7 673.7,219.1 675.7,219.2 677.5,219.0 682.3,218.1 685.7,217.6 689.0,217.4 691.6,217.4 695.3,217.7 698.1,218.1 701.5,218.9 704.6,220.1 707.2,221.3 709.1,222.5 711.0,224.1 712.3,225.6 714.0,228.5 717.2,235.1 717.8,236.8 718.0,238.2 717.8,240.7 716.8,243.3 715.2,245.6 712.7,247.9 709.2,250.1 705.1,251.9 700.4,253.2 694.5,254.2 691.8,255.3 690.1,256.5 689.0,257.9 688.7,259.3 689.1,260.8 690.0,262.0 691.2,262.9 692.8,263.7 694.6,264.2 697.2,264.5 703.2,264.2 708.2,264.5 712.9,265.3 717.3,266.6 719.3,267.5 721.6,268.8 724.5,271.2 726.6,273.8 727.6,276.6 727.9,283.2 727.9,286.4 727.7,288.1 727.0,290.0 726.0,291.7 724.5,293.5 722.9,294.9 720.4,296.6 717.8,298.0 715.4,299.0 712.0,300.0 709.6,300.6 706.3,301.1 702.9,301.3 697.9,301.4 696.1,301.6 694.5,302.1 692.6,302.9 691.2,303.8 690.2,305.0 689.6,306.3 689.6,307.6 690.1,308.7 691.1,309.9 692.6,310.8 695.3,311.7 702.7,312.6 705.8,313.3 708.3,314.1 711.0,315.3 713.7,316.8 715.4,318.1 717.2,320.0 718.5,321.8 719.2,323.4 719.5,325.3 719.5,327.0 718.9,329.4 715.4,337.5 714.3,339.3 713.2,340.6 711.7,342.1 710.2,343.3 707.8,344.8 705.9,345.7 701.5,347.3 699.2,347.9 696.4,348.5 691.4,348.9 686.4,348.8 679.6,348.0 676.7,348.1 674.5,348.5 672.6,349.2 671.0,350.2 669.8,351.4 669.2,352.7 669.1,354.0 669.5,355.3 670.4,356.3 671.5,357.1 673.1,357.9 677.5,359.1 680.4,360.1 682.9,361.3 684.6,362.4 686.8,364.1 688.1,365.6 689.4,367.6 690.1,369.7 690.3,371.7 690.1,373.4 689.5,375.3 688.6,376.9 686.2,379.8 680.2,386.0 678.6,387.4 677.0,388.6 673.9,390.3 669.9,391.8 666.1,392.9 661.5,393.6 656.5,393.8 651.5,393.4 646.8,392.4 641.5,390.8 638.4,390.4 635.9,390.6 633.4,391.2 631.2,392.2 629.7,393.4 629.0,394.5 628.6,395.7 628.8,397.0 629.4,398.1 630.8,399.4 635.2,401.7 638.2,403.9 640.5,406.5 641.7,409.2 642.0,410.7 642.0,412.7 641.1,415.5 639.3,418.3 636.5,420.8 628.6,425.9 624.7,428.2 622.5,429.3 619.6,430.5 617.0,431.3 613.8,432.0 610.9,432.4 607.2,432.6 603.8,432.6 600.1,432.2 597.3,431.7 595.1,431.1 592.2,430.2 589.6,428.9 586.1,426.9 584.6,426.4 582.9,426.0 580.7,425.9 578.4,426.0 576.5,426.4 574.5,427.2 572.9,428.1 571.9,429.2 571.1,430.4 571.0,431.7 571.7,433.5 575.6,437.2 576.8,439.0 577.6,440.6 578.0,442.8 577.9,444.8 577.5,446.4 576.5,448.6 575.1,450.4 573.6,451.9 571.5,453.5 569.4,454.7 566.0,456.2 553.7,460.7 550.8,461.6 548.5,462.2 545.6,462.6 543.1,462.9 540.6,463.0 537.2,462.9 532.4,462.3 527.8,461.2 525.7,460.4 523.5,459.4 520.2,457.2 516.8,453.8 514.6,452.7 512.6,452.1 510.4,451.9 508.1,451.9 505.9,452.3 503.9,453.0 502.3,453.9 501.0,455.1 500.3,456.2 500.1,457.4 500.2,458.4 501.7,461.2 502.4,463.1 502.6,465.0 502.5,466.5 501.8,468.7 501.0,470.3 499.3,472.3 497.2,474.2 495.0,475.7 492.8,476.9 490.0,478.0 487.4,478.8 482.3,480.0 470.7,482.1 467.7,482.5 465.2,482.7 461.0,482.7 456.5,482.2 452.6,481.4 448.7,480.0 445.0,478.1 442.1,475.8 440.1,473.2 438.6,469.8 436.9,468.3 434.8,467.3 432.5,466.8 429.8,466.7 427.4,466.9 425.5,467.4 423.8,468.2 422.4,469.1 421.4,470.3 420.7,471.8 421.0,475.2 420.3,478.1 418.7,480.9 416.1,483.5 412.8,485.8 408.8,487.6 406.5,488.4 403.4,489.2 398.4,489.9 386.9,490.4 381.4,490.5 378.5,490.5 375.2,490.1 372.5,489.7 369.4,488.9 367.0,488.0 364.4,486.8 361.9,485.2 359.8,483.4 358.6,481.9 357.5,480.1 357.0,478.7 356.7,476.7 356.9,473.8 356.5,472.8 355.8,471.8 354.7,470.9 353.0,470.0 351.0,469.5 348.8,469.2 346.5,469.3 344.3,469.6 342.3,470.3 340.7,471.1 339.0,472.7 337.2,477.1 335.8,478.9 334.3,480.4 332.2,482.0 329.5,483.6 327.2,484.7 323.9,485.8 320.7,486.6 317.9,487.1 314.5,487.4 311.6,487.4 307.4,487.2 293.6,485.5 290.5,484.9 288.3,484.4 285.8,483.6 283.8,482.7 281.3,481.4 279.8,480.3 277.2,477.9 276.1,476.4 275.4,475.0 274.8,472.1 275.2,469.2 277.0,465.2 277.0,463.5 276.3,462.3 275.1,461.2 273.5,460.3 271.5,459.7 269.4,459.4 267.1,459.4 264.9,459.7 263.0,460.3 261.5,460.9 260.2,461.9 257.9,464.5 256.0,466.2 253.8,467.7 251.9,468.7 248.8,470.1 246.2,470.9 242.6,471.7 238.9,472.3 235.6,472.5 232.6,472.4 229.3,472.1 226.5,471.7 221.7,470.4 211.2,467.2 208.8,466.3 206.8,465.4 204.0,463.7 201.5,461.5 199.9,459.3 198.9,456.7 198.8,453.8 199.7,450.9 201.5,448.1 204.6,445.0 205.4,443.2 205.1,441.7 204.2,440.3 202.5,439.1 200.5,438.3 198.6,437.9 196.6,437.8 194.6,437.9 192.4,438.3 190.1,439.2 186.0,441.8 182.0,443.7 177.5,445.1 172.6,446.0 167.6,446.3 162.6,446.0 157.8,445.1 155.6,444.5 152.8,443.4 144.4,439.1 140.6,436.9 138.7,435.7 136.8,434.1 135.6,432.6 134.5,430.8 133.9,429.1 133.6,427.0 133.9,425.0 134.7,422.8 135.6,421.2 137.2,419.4 138.6,418.2 140.8,416.6 144.4,414.5 145.4,413.6 146.1,412.6 146.5,411.3 146.3,410.0 145.7,408.9 144.6,407.8 142.9,406.9 141.2,406.4 139.0,406.0 136.8,406.0 133.7,406.4 127.1,408.9 123.9,409.7 121.1,410.2 117.7,410.5 113.9,410.6 110.2,410.3 107.4,409.9 104.3,409.1 101.8,408.3 99.1,407.2 97.1,406.0 94.6,404.1 87.3,397.2 85.9,395.6 85.1,394.2 84.4,392.6 84.1,391.2 84.0,389.7 84.3,387.8 85.5,384.9 86.7,383.3 87.9,382.0 91.0,379.7 94.8,377.7 100.9,375.5 102.9,374.2 104.0,373.0 104.5,371.8 104.5,370.4 103.9,369.2 103.0,368.2 101.5,367.2 99.6,366.5 97.5,366.1 95.5,366.0 93.6,366.1 88.9,367.1 85.5,367.6 83.0,367.8 79.6,367.8 75.9,367.5 72.3,366.9 68.9,366.0 66.5,365.1 64.0,363.9 62.1,362.6 60.2,361.1 58.9,359.6 57.1,356.7 53.9,350.1 53.4,348.4 53.2,346.9 53.3,344.5 54.4,341.9 56.0,339.6 58.5,337.3 62.0,335.1 66.1,333.3 70.7,332.0 76.7,331.0 79.3,329.9 81.1,328.7 82.1,327.3 82.5,325.8 82.1,324.3 81.3,323.3 80.1,322.3 78.6,321.6 76.6,321.0 73.9,320.7 68.0,321.0 63.0,320.7 58.2,319.9 53.9,318.6 50.1,316.7 48.5,315.6 46.6,314.0 44.6,311.4 43.5,308.6 43.2,301.9 43.2,298.8 43.5,297.1 44.2,295.1 45.1,293.5 46.6,291.7 48.3,290.3 50.7,288.6 53.3,287.2 56.5,286.0 59.1,285.2 62.3,284.5 64.8,284.1 68.2,283.9 73.2,283.8 75.0,283.6 76.7,283.1 78.4,282.4 79.9,281.4 81.0,280.2 81.5,278.9 81.5,277.6 81.0,276.4 79.9,275.2 78.5,274.4 75.9,273.5 68.4,272.6 65.3,271.8 62.8,271.1 60.1,269.9 57.5,268.4 55.7,267.1 53.9,265.2 52.7,263.4 52.0,261.8 51.6,259.9 51.6,258.2 52.2,255.7 55.9,247.5Z"/><path d="M56.1,254.7 57.1,253.1 58.2,251.7 59.5,250.4 61.2,249.0 63.6,247.6 65.5,246.6 69.9,245.0 72.6,244.3 75.0,243.9 80.0,243.4 85.0,243.5 91.8,244.4 94.7,244.3 96.9,243.8 98.9,243.1 100.4,242.1 101.6,241.0 102.2,239.7 102.3,238.4 101.9,237.1 101.0,236.0 99.9,235.2 98.4,234.5 93.9,233.3 91.0,232.2 88.5,231.0 86.8,230.0 84.6,228.2 83.0,226.3 81.8,224.3 81.3,222.6 81.1,220.7 81.3,219.0 81.9,217.1 82.8,215.4 85.2,212.6 91.2,206.4 92.8,204.9 94.5,203.8 97.5,202.0 101.5,200.5 105.4,199.5 109.9,198.8 115.0,198.6 119.9,199.0 124.6,199.9 129.9,201.6 133.0,201.9 135.5,201.8 138.0,201.1 140.0,200.2 141.7,198.9 142.5,197.8 142.8,196.5 142.6,195.3 142.0,194.2 140.6,192.9 136.3,190.7 133.2,188.4 131.0,185.9 129.7,183.1 129.4,181.7 129.4,179.7 130.3,176.8 132.1,174.0 134.9,171.5 142.8,166.5 146.7,164.2 148.9,163.0 151.8,161.9 154.4,161.1 157.6,160.4 160.5,159.9 163.9,159.7 167.6,159.8 170.5,160.0 174.1,160.6 176.4,161.2 179.2,162.2 181.8,163.4 185.3,165.4 186.8,166.0 188.5,166.3 190.7,166.5 192.8,166.4 194.9,165.9 196.9,165.2 198.5,164.2 199.7,163.1 200.3,161.8 200.4,160.6 199.7,158.8 195.8,155.1 194.6,153.3 193.9,151.7 193.4,149.8 193.5,147.6 193.9,145.9 194.9,143.8 196.3,142.0 197.8,140.5 200.0,138.9 202.0,137.6 205.4,136.1 217.7,131.6 220.6,130.7 222.9,130.2 225.8,129.7 228.3,129.4 230.8,129.3 234.2,129.4 239.1,130.0 241.4,130.5 243.9,131.3 247.9,133.0 251.2,135.1 254.7,138.5 256.8,139.7 258.8,140.2 261.0,140.5 263.3,140.4 265.5,140.0 267.5,139.3 269.2,138.4 270.4,137.3 271.1,136.1 271.4,135.0 271.2,133.9 269.7,131.2 269.0,129.3 268.8,127.8 268.9,125.9 269.6,123.7 270.8,121.6 272.5,119.6 274.2,118.2 276.4,116.7 278.6,115.5 281.4,114.3 284.0,113.5 289.1,112.4 300.8,110.2 303.7,109.8 306.2,109.6 310.4,109.6 314.9,110.1 318.8,111.0 322.7,112.3 326.4,114.2 329.3,116.5 331.3,119.2 332.8,122.6 334.5,124.1 336.6,125.0 338.9,125.6 341.3,125.7 344.0,125.4 346.1,124.8 347.8,124.1 349.1,123.1 350.1,122.1 350.7,120.5 350.5,117.1 351.1,114.2 352.7,111.4 355.3,108.8 358.6,106.6 362.7,104.7 367.2,103.3 370.5,102.7 373.0,102.4 384.5,101.9 390.0,101.8 392.9,101.9 396.2,102.2 399.0,102.7 402.0,103.5 404.4,104.4 407.3,105.7 409.5,107.1 411.2,108.5 412.8,110.4 413.7,111.8 414.4,113.7 414.7,115.7 414.5,118.5 414.9,119.6 415.6,120.5 416.9,121.6 418.6,122.4 420.7,122.9 422.7,123.1 424.9,123.1 426.9,122.7 429.0,122.1 430.7,121.2 432.4,119.6 434.2,115.3 435.6,113.4 437.1,112.0 439.4,110.2 441.9,108.8 444.2,107.7 447.5,106.5 450.7,105.8 453.6,105.3 456.9,105.0 459.9,104.9 464.0,105.2 477.8,106.9 480.9,107.4 483.1,108.0 485.6,108.8 487.6,109.6 489.5,110.6 491.7,112.0 494.2,114.4 495.9,117.2 496.4,118.6 496.6,120.2 496.2,123.2 494.4,127.1 494.4,128.8 495.1,130.0 496.3,131.1 497.9,132.0 499.9,132.6 502.1,133.0 504.3,133.0 506.6,132.6 508.4,132.1 509.9,131.4 511.2,130.5 513.5,127.9 515.4,126.1 517.7,124.6 519.5,123.6 522.6,122.3 526.0,121.2 529.6,120.4 532.5,120.1 535.9,119.9 538.8,119.9 542.1,120.2 544.9,120.7 549.7,121.9 560.2,125.1 562.6,126.0 564.6,126.9 567.4,128.6 569.9,130.8 571.5,133.0 572.5,135.6 572.6,138.5 571.7,141.4 569.9,144.2 566.8,147.3 566.1,149.1 566.3,150.6 567.2,152.0 568.9,153.2 570.9,154.0 572.8,154.4 574.8,154.6 577.1,154.4 579.0,154.0 581.3,153.1 585.4,150.5 589.4,148.7 593.9,147.3 598.8,146.4 603.8,146.1 608.8,146.4 613.6,147.2 615.8,147.9 618.6,148.9 627.0,153.3 630.8,155.4 632.7,156.7 634.6,158.3 635.8,159.8 636.9,161.6 637.5,163.2 637.8,165.2 637.5,167.4 636.7,169.5 635.8,171.1 634.7,172.5 632.8,174.2 630.6,175.7 627.0,177.8 626.0,178.7 625.3,179.7 624.9,180.9 625.0,182.2 625.7,183.4 626.9,184.5 628.5,185.4 630.4,186.0 632.6,186.4 634.6,186.4 637.7,185.9 644.3,183.5 647.5,182.7 650.3,182.2 653.7,181.9 657.5,181.8 660.4,182.0 664.0,182.5 667.1,183.2 669.6,184.0 672.3,185.2 674.3,186.3 676.8,188.2 684.1,195.1 685.5,196.8 686.3,198.1 687.0,199.7 687.4,201.2 687.4,202.6 687.1,204.6 685.9,207.4 684.7,209.0 683.5,210.3 680.4,212.7 676.6,214.7 670.5,216.8 668.5,218.1 667.4,219.3 666.9,220.6 666.9,221.9 667.5,223.2 668.6,224.3 670.1,225.2 672.0,225.9 673.9,226.2 676.0,226.3 677.8,226.2 682.5,225.2 685.9,224.7 689.3,224.5 691.8,224.5 695.5,224.8 698.3,225.3 701.7,226.1 704.9,227.2 707.4,228.5 709.3,229.7 711.2,231.3 712.5,232.7 714.3,235.6 717.5,242.3 718.0,244.0 718.3,245.4 718.1,247.8 717.1,250.5 715.4,252.8 712.9,255.1 709.5,257.3 705.3,259.1 700.7,260.4 694.8,261.4 692.1,262.4 690.3,263.7 689.3,265.0 689.0,266.5 689.3,268.0 690.2,269.2 691.5,270.1 693.0,270.8 694.8,271.3 697.5,271.6 703.4,271.4 708.4,271.6 713.2,272.4 717.6,273.8 719.5,274.7 721.9,276.0 724.8,278.3 726.8,280.9 727.9,283.8 728.2,290.4 728.2,293.6 727.9,295.3 727.2,297.2 726.3,298.8 724.8,300.6 723.2,302.1 720.7,303.8 718.1,305.1 715.7,306.1 712.3,307.2 709.9,307.7 706.6,308.2 703.2,308.5 698.2,308.5 696.4,308.8 694.7,309.2 692.9,310.0 691.5,310.9 690.4,312.1 689.9,313.4 689.9,314.7 690.4,315.9 691.4,317.0 692.9,318.0 695.6,318.9 703.0,319.8 706.1,320.5 708.6,321.3 711.3,322.4 713.9,323.9 715.7,325.2 717.5,327.1 718.7,328.9 719.4,330.5 719.8,332.5 719.8,334.2 719.2,336.6 715.6,344.7 714.6,346.4 713.5,347.8 712.0,349.3 710.5,350.5 708.1,351.9 706.1,352.9 701.8,354.5 699.5,355.1 696.7,355.6 691.7,356.1 686.6,356.0 679.9,355.1 676.9,355.2 674.8,355.7 672.8,356.4 671.2,357.4 670.1,358.5 669.4,359.8 669.3,361.1 669.8,362.4 670.7,363.5 671.8,364.3 673.3,365.0 677.8,366.2 680.6,367.3 683.2,368.5 684.9,369.5 687.0,371.3 688.4,372.7 689.7,374.7 690.4,376.9 690.6,378.8 690.4,380.5 689.8,382.4 688.9,384.1 686.5,386.9 680.5,393.1 678.8,394.6 677.2,395.8 674.1,397.5 670.2,399.0 666.3,400.0 661.8,400.7 656.7,400.9 651.8,400.5 647.0,399.6 641.8,397.9 638.7,397.6 636.2,397.7 633.6,398.4 631.5,399.4 630.0,400.6 629.2,401.7 628.9,402.9 629.0,404.2 629.6,405.3 631.1,406.6 635.4,408.8 638.5,411.1 640.7,413.6 642.0,416.4 642.3,417.8 642.3,419.8 641.4,422.7 639.5,425.5 636.8,428.0 628.9,433.0 625.0,435.4 622.8,436.5 619.9,437.6 617.3,438.4 614.1,439.1 611.2,439.6 607.4,439.8 604.0,439.7 600.3,439.4 597.6,438.9 595.3,438.3 592.5,437.3 589.8,436.1 586.4,434.1 584.9,433.6 583.2,433.2 581.0,433.0 578.7,433.2 576.8,433.6 574.8,434.3 573.2,435.3 572.1,436.3 571.4,437.6 571.2,438.9 571.9,440.7 575.8,444.4 577.1,446.2 577.8,447.8 578.3,449.9 578.2,451.9 577.8,453.6 576.7,455.7 575.3,457.5 573.8,459.0 571.7,460.6 569.6,461.9 566.2,463.4 554.0,467.9 551.1,468.8 548.7,469.3 545.9,469.8 543.4,470.1 540.9,470.2 537.5,470.1 532.6,469.5 528.1,468.3 526.0,467.6 523.8,466.5 520.5,464.4 517.0,461.0 514.9,459.8 512.9,459.3 510.7,459.0 508.4,459.1 506.2,459.5 504.2,460.2 502.5,461.1 501.3,462.2 500.6,463.4 500.3,464.5 500.5,465.6 502.0,468.3 502.7,470.2 502.9,472.2 502.8,473.7 502.1,475.8 501.2,477.4 499.6,479.5 497.5,481.3 495.3,482.9 493.1,484.0 490.3,485.2 487.7,486.0 482.6,487.1 470.9,489.3 468.0,489.7 465.5,489.9 461.3,489.9 456.8,489.4 452.9,488.5 449.0,487.2 445.3,485.3 442.4,483.0 440.4,480.3 438.9,476.9 437.2,475.4 435.1,474.5 432.8,474.0 430.1,473.8 427.6,474.1 425.7,474.6 424.1,475.3 422.7,476.2 421.6,477.4 421.0,479.0 421.2,482.4 420.6,485.3 418.9,488.1 416.4,490.7 413.0,492.9 409.0,494.8 406.8,495.5 403.6,496.4 398.7,497.1 387.2,497.6 381.7,497.7 378.8,497.6 375.5,497.3 372.7,496.8 369.7,496.0 367.2,495.1 364.7,493.9 362.2,492.4 360.1,490.6 358.9,489.1 357.8,487.2 357.3,485.8 357.0,483.8 357.1,481.0 356.8,479.9 356.1,479.0 354.9,478.0 353.2,477.2 351.2,476.6 349.0,476.4 346.8,476.4 344.5,476.8 342.5,477.5 341.0,478.3 339.3,479.9 337.4,484.2 336.1,486.1 334.6,487.5 332.5,489.2 329.8,490.7 327.4,491.8 324.1,493.0 321.0,493.7 318.1,494.2 314.7,494.5 311.8,494.6 307.6,494.3 293.9,492.6 290.8,492.1 288.5,491.5 286.0,490.7 284.0,489.9 281.6,488.6 280.0,487.5 277.5,485.1 276.4,483.5 275.7,482.1 275.1,479.3 275.5,476.3 277.3,472.4 277.2,470.7 276.6,469.5 275.4,468.4 273.8,467.5 271.8,466.9 269.6,466.5 267.3,466.6 265.1,466.9 263.3,467.4 261.8,468.1 260.5,469.0 258.2,471.6 256.3,473.4 254.0,474.9 252.2,475.9 249.1,477.2 246.5,478.1 242.9,478.9 239.2,479.4 235.8,479.6 232.9,479.6 229.6,479.3 226.8,478.8 222.0,477.6 211.5,474.4 209.0,473.5 207.1,472.6 204.3,470.9 201.8,468.7 200.2,466.5 199.2,463.9 199.1,461.0 199.9,458.1 201.8,455.3 204.9,452.2 205.6,450.4 205.4,448.8 204.5,447.5 202.8,446.3 200.8,445.5 198.9,445.1 196.9,444.9 194.8,445.0 192.6,445.5 190.3,446.4 186.3,449.0 182.3,450.9 177.8,452.2 172.9,453.1 167.9,453.4 162.9,453.1 158.1,452.3 155.9,451.6 153.1,450.6 144.7,446.2 140.8,444.1 139.0,442.8 137.1,441.2 135.8,439.8 134.8,437.9 134.2,436.3 133.9,434.1 134.1,432.1 134.9,430.0 135.9,428.4 137.4,426.6 138.8,425.3 141.1,423.8 144.7,421.7 145.7,420.8 146.4,419.8 146.8,418.5 146.6,417.2 146.0,416.1 144.8,415.0 143.2,414.1 141.5,413.5 139.3,413.2 137.0,413.1 133.9,413.6 127.4,416.0 124.2,416.8 121.4,417.3 118.0,417.6 114.2,417.7 110.5,417.4 107.7,417.0 104.6,416.3 102.1,415.5 99.4,414.3 97.4,413.2 94.9,411.3 87.6,404.4 86.2,402.7 85.3,401.4 84.6,399.8 84.3,398.3 84.2,396.9 84.5,394.9 85.8,392.1 86.9,390.5 88.2,389.2 91.3,386.8 95.1,384.8 101.2,382.7 103.2,381.4 104.3,380.2 104.8,378.9 104.8,377.6 104.2,376.3 103.3,375.3 101.8,374.4 99.9,373.7 97.8,373.3 95.7,373.2 93.9,373.3 89.1,374.3 85.8,374.8 83.2,375.0 79.9,375.0 76.1,374.7 72.5,374.1 69.2,373.2 66.8,372.3 64.3,371.0 62.3,369.8 60.4,368.2 59.1,366.8 57.4,363.9 54.2,357.2 53.6,355.5 53.4,354.1 53.6,351.7 54.6,349.0 56.2,346.8 58.7,344.4 62.2,342.2 66.4,340.4 71.0,339.1 76.9,338.1 79.6,337.1 81.4,335.8 82.4,334.5 82.7,332.9 82.3,331.5 81.5,330.4 80.4,329.5 78.8,328.7 76.8,328.2 74.2,327.9 68.3,328.1 63.3,327.9 58.5,327.1 54.1,325.7 50.4,323.9 48.7,322.8 46.9,321.2 44.9,318.6 43.8,315.7 43.5,309.1 43.5,305.9 43.7,304.2 44.5,302.3 45.4,300.7 46.9,298.9 48.5,297.4 51.0,295.7 53.6,294.4 56.7,293.1 59.4,292.3 62.6,291.6 65.1,291.3 68.5,291.0 73.5,291.0 75.3,290.7 77.0,290.3 78.6,289.6 80.2,288.6 81.2,287.4 81.8,286.1 81.8,284.8 81.2,283.5 80.2,282.4 78.8,281.5 76.1,280.6 68.7,279.7 65.6,279.0 63.1,278.2 60.4,277.1 57.8,275.6 56.0,274.3 54.2,272.4 53.0,270.6 52.3,269.0 51.9,267.0 51.9,265.3 52.5,262.9 56.1,254.7Z"/><path d="M56.4,261.9 57.4,260.2 58.4,258.9 59.7,257.6 61.5,256.2 63.9,254.7 65.8,253.8 70.1,252.2 72.9,251.5 75.3,251.0 80.3,250.6 85.3,250.7 92.1,251.5 95.0,251.4 97.2,251.0 99.1,250.3 100.7,249.3 101.9,248.1 102.5,246.8 102.6,245.5 102.1,244.2 101.3,243.2 100.2,242.4 98.6,241.6 94.2,240.4 91.3,239.4 88.8,238.2 87.1,237.1 84.9,235.4 83.2,233.5 82.1,231.4 81.5,229.8 81.3,227.8 81.5,226.1 82.2,224.2 83.1,222.6 85.5,219.7 91.4,213.5 93.1,212.1 94.7,210.9 97.8,209.2 101.8,207.7 105.6,206.6 110.2,205.9 115.2,205.7 120.2,206.1 124.9,207.1 130.2,208.7 133.3,209.1 135.8,208.9 138.3,208.3 140.3,207.4 141.9,206.1 142.7,205.0 143.1,203.7 142.9,202.5 142.3,201.4 140.9,200.1 136.5,197.8 133.4,195.6 131.2,193.0 129.9,190.3 129.7,188.8 129.7,186.8 130.6,184.0 132.4,181.2 135.1,178.7 143.0,173.6 147.0,171.3 149.2,170.2 152.0,169.0 154.7,168.2 157.9,167.5 160.7,167.1 164.1,166.9 167.9,166.9 170.8,167.2 174.3,167.8 176.6,168.4 179.5,169.3 182.1,170.6 185.5,172.6 187.1,173.1 188.7,173.5 191.0,173.6 193.0,173.5 195.2,173.1 197.1,172.4 198.8,171.4 199.9,170.2 200.6,168.9 200.7,167.8 200.0,166.0 196.1,162.3 194.9,160.5 194.1,158.9 193.7,156.9 193.7,154.8 194.2,153.1 195.2,150.9 196.6,149.1 198.1,147.6 200.2,146.0 202.3,144.8 205.7,143.3 217.9,138.8 220.8,137.9 223.2,137.3 226.0,136.9 228.5,136.6 231.1,136.5 234.4,136.6 239.3,137.2 241.6,137.7 244.2,138.4 248.2,140.1 251.4,142.3 254.9,145.7 257.1,146.8 259.1,147.4 261.3,147.6 263.6,147.6 265.8,147.2 267.8,146.5 269.4,145.6 270.7,144.4 271.4,143.3 271.6,142.1 271.5,141.1 270.0,138.3 269.3,136.4 269.1,135.0 269.2,133.0 269.8,130.8 271.0,128.7 272.8,126.8 274.4,125.3 276.7,123.8 278.9,122.6 281.7,121.5 284.3,120.7 289.4,119.5 301.0,117.4 303.9,117.0 306.5,116.8 310.6,116.8 315.2,117.3 319.0,118.1 323.0,119.5 326.6,121.4 329.5,123.7 331.6,126.3 333.1,129.7 334.8,131.2 336.8,132.2 339.1,132.7 341.6,132.9 344.3,132.6 346.4,132.0 348.0,131.2 349.4,130.3 350.3,129.2 350.9,127.7 350.7,124.3 351.4,121.4 353.0,118.6 355.5,116.0 358.9,113.7 362.9,111.9 367.5,110.5 370.7,109.9 373.2,109.6 384.7,109.1 390.2,109.0 393.2,109.0 396.5,109.4 399.2,109.8 402.3,110.6 404.7,111.5 407.6,112.9 409.8,114.3 411.4,115.7 413.1,117.6 413.9,118.9 414.7,120.8 414.9,122.8 414.8,125.7 415.2,126.7 415.9,127.7 417.2,128.7 418.9,129.5 420.9,130.1 422.9,130.3 425.2,130.2 427.2,129.9 429.2,129.3 430.9,128.4 432.6,126.8 434.5,122.4 435.9,120.6 437.4,119.1 439.7,117.3 442.2,115.9 444.5,114.8 447.8,113.7 451.0,112.9 453.8,112.4 457.2,112.1 460.1,112.1 464.3,112.3 478.1,114.0 481.1,114.6 483.4,115.1 485.9,115.9 487.9,116.8 489.7,117.7 491.9,119.2 494.5,121.6 496.2,124.3 496.6,125.7 496.9,127.4 496.5,130.3 494.6,134.3 494.7,136.0 495.4,137.2 496.6,138.3 498.2,139.2 500.1,139.8 502.3,140.1 504.6,140.1 506.8,139.8 508.7,139.2 510.1,138.6 511.5,137.6 513.8,135.0 515.7,133.3 517.9,131.8 519.8,130.8 522.9,129.4 526.3,128.4 529.9,127.6 532.7,127.2 536.1,127.0 539.0,127.1 542.4,127.4 545.1,127.8 549.9,129.1 560.4,132.3 562.9,133.2 564.8,134.1 567.7,135.8 570.2,138.0 571.8,140.2 572.8,142.8 572.9,145.7 572.0,148.6 570.2,151.4 567.0,154.5 566.3,156.3 566.5,157.7 567.5,159.2 569.1,160.4 571.2,161.2 573.1,161.6 575.1,161.7 577.3,161.6 579.3,161.2 581.6,160.3 585.6,157.7 589.6,155.8 594.2,154.4 599.1,153.5 604.1,153.2 609.1,153.5 613.8,154.4 616.1,155.0 618.9,156.1 627.2,160.4 631.1,162.6 633.0,163.8 634.8,165.4 636.1,166.9 637.2,168.7 637.8,170.4 638.0,172.3 637.8,174.5 637.0,176.7 636.0,178.3 634.9,179.6 633.1,181.3 630.9,182.9 627.3,185.0 626.3,185.9 625.6,186.9 625.2,188.0 625.3,189.3 626.0,190.6 627.1,191.7 628.7,192.6 630.7,193.2 632.9,193.5 634.9,193.5 638.0,193.1 644.6,190.6 647.7,189.8 650.6,189.3 653.9,189.0 657.7,189.0 660.6,189.1 664.3,189.6 667.4,190.4 669.9,191.2 672.5,192.3 674.6,193.5 677.1,195.4 684.3,202.3 685.8,203.9 686.6,205.3 687.3,206.9 687.6,208.3 687.7,209.8 687.4,211.7 686.2,214.6 685.0,216.2 683.8,217.5 680.7,219.8 676.8,221.8 670.8,224.0 668.7,225.3 667.7,226.5 667.1,227.7 667.2,229.1 667.7,230.3 668.8,231.4 670.4,232.4 672.3,233.0 674.2,233.4 676.2,233.5 678.0,233.4 682.8,232.4 686.2,231.9 689.6,231.7 692.1,231.7 695.8,232.0 698.6,232.4 702.0,233.3 705.2,234.4 707.7,235.6 709.6,236.9 711.5,238.4 712.8,239.9 714.5,242.8 717.7,249.4 718.3,251.1 718.5,252.6 718.3,255.0 717.3,257.6 715.7,259.9 713.2,262.2 709.7,264.4 705.6,266.2 701.0,267.5 695.0,268.5 692.3,269.6 690.6,270.8 689.6,272.2 689.2,273.6 689.6,275.2 690.5,276.3 691.7,277.3 693.3,278.0 695.1,278.5 697.8,278.8 703.7,278.5 708.7,278.8 713.5,279.6 717.8,280.9 719.8,281.8 722.2,283.2 725.1,285.5 727.1,288.1 728.2,290.9 728.5,297.6 728.5,300.7 728.2,302.4 727.5,304.4 726.5,306.0 725.0,307.8 723.4,309.2 720.9,310.9 718.4,312.3 716.0,313.3 712.6,314.3 710.2,314.9 706.9,315.4 703.4,315.6 698.5,315.7 696.7,315.9 695.0,316.4 693.1,317.2 691.8,318.1 690.7,319.3 690.2,320.6 690.2,321.9 690.6,323.0 691.6,324.2 693.1,325.1 695.8,326.0 703.2,327.0 706.3,327.7 708.9,328.5 711.6,329.6 714.2,331.1 715.9,332.4 717.8,334.3 719.0,336.1 719.7,337.7 720.1,339.6 720.1,341.3 719.4,343.8 715.9,351.8 714.9,353.6 713.8,354.9 712.3,356.4 710.7,357.6 708.4,359.1 706.4,360.0 702.1,361.6 699.7,362.2 696.9,362.8 691.9,363.3 686.9,363.2 680.2,362.3 677.2,362.4 675.0,362.8 673.1,363.6 671.5,364.5 670.4,365.7 669.7,367.0 669.6,368.3 670.1,369.6 670.9,370.6 672.0,371.4 673.6,372.2 678.0,373.4 680.9,374.4 683.5,375.6 685.1,376.7 687.3,378.4 688.7,379.9 689.9,381.9 690.7,384.0 690.9,386.0 690.7,387.7 690.0,389.6 689.1,391.2 686.7,394.1 680.8,400.3 679.1,401.7 677.5,402.9 674.4,404.6 670.5,406.2 666.6,407.2 662.0,407.9 657.0,408.1 652.0,407.7 647.3,406.7 642.0,405.1 639.0,404.7 636.5,404.9 633.9,405.5 631.7,406.5 630.3,407.7 629.5,408.9 629.2,410.0 629.3,411.3 629.9,412.5 631.3,413.8 635.7,416.0 638.8,418.2 641.0,420.8 642.3,423.6 642.5,425.0 642.5,427.0 641.6,429.9 639.8,432.6 637.1,435.1 629.2,440.2 625.3,442.5 623.0,443.6 620.2,444.8 617.5,445.6 614.3,446.3 611.5,446.7 607.7,447.0 604.3,446.9 600.6,446.5 597.9,446.0 595.6,445.5 592.7,444.5 590.1,443.3 586.7,441.3 585.2,440.7 583.5,440.3 581.2,440.2 579.0,440.3 577.0,440.7 575.1,441.5 573.5,442.4 572.4,443.5 571.7,444.7 571.5,446.0 572.2,447.8 576.1,451.5 577.4,453.3 578.1,454.9 578.5,457.1 578.5,459.1 578.0,460.7 577.0,462.9 575.6,464.7 574.1,466.2 572.0,467.8 569.9,469.0 566.5,470.6 554.3,475.0 551.4,475.9 549.0,476.5 546.2,477.0 543.7,477.2 541.1,477.3 537.8,477.2 532.9,476.6 528.4,475.5 526.3,474.7 524.0,473.7 520.8,471.5 517.3,468.1 515.2,467.0 513.1,466.4 510.9,466.2 508.7,466.3 506.5,466.6 504.5,467.3 502.8,468.3 501.5,469.4 500.8,470.5 500.6,471.7 500.7,472.7 502.3,475.5 502.9,477.4 503.2,479.3 503.0,480.8 502.4,483.0 501.5,484.6 499.9,486.6 497.8,488.5 495.5,490.0 493.3,491.2 490.5,492.3 487.9,493.2 482.8,494.3 471.2,496.4 468.3,496.8 465.8,497.0 461.6,497.0 457.0,496.5 453.2,495.7 449.2,494.4 445.6,492.4 442.7,490.1 440.7,487.5 439.1,484.1 437.5,482.6 435.4,481.6 433.1,481.1 430.4,481.0 427.9,481.2 426.0,481.8 424.3,482.5 423.0,483.4 421.9,484.6 421.3,486.1 421.5,489.5 420.8,492.5 419.2,495.3 416.7,497.8 413.3,500.1 409.3,502.0 407.1,502.7 403.9,503.5 399.0,504.2 387.5,504.7 382.0,504.8 379.1,504.8 375.7,504.4 373.0,504.0 369.9,503.2 367.5,502.3 364.9,501.1 362.4,499.5 360.4,497.7 359.1,496.2 358.1,494.4 357.6,493.0 357.3,491.0 357.4,488.1 357.0,487.1 356.4,486.1 355.2,485.2 353.5,484.4 351.5,483.8 349.3,483.5 347.0,483.6 344.8,484.0 342.8,484.6 341.3,485.5 339.6,487.0 337.7,491.4 336.3,493.2 334.9,494.7 332.8,496.3 330.1,497.9 327.7,499.0 324.4,500.1 321.2,500.9 318.4,501.4 315.0,501.7 312.1,501.7 307.9,501.5 294.1,499.8 291.1,499.3 288.8,498.7 286.3,497.9 284.3,497.0 281.9,495.7 280.3,494.6 277.7,492.2 276.6,490.7 276.0,489.3 275.4,486.4 275.7,483.5 277.6,479.5 277.5,477.8 276.8,476.6 275.6,475.5 274.0,474.6 272.1,474.0 269.9,473.7 267.6,473.7 265.4,474.0 263.5,474.6 262.1,475.2 260.7,476.2 258.4,478.8 256.5,480.5 254.3,482.0 252.4,483.1 249.3,484.4 246.7,485.2 243.2,486.1 239.5,486.6 236.1,486.8 233.2,486.7 229.9,486.4 227.1,486.0 222.3,484.7 211.8,481.5 209.3,480.7 207.4,479.8 204.6,478.0 202.1,475.8 200.5,473.6 199.5,471.0 199.3,468.1 200.2,465.2 202.0,462.5 205.2,459.3 205.9,457.5 205.6,456.0 204.7,454.6 203.1,453.4 201.1,452.6 199.2,452.2 197.1,452.1 195.1,452.2 192.9,452.6 190.6,453.5 186.6,456.1 182.6,458.0 178.0,459.4 173.2,460.3 168.1,460.6 163.1,460.3 158.4,459.4 156.1,458.8 153.3,457.8 145.0,453.4 141.1,451.2 139.2,450.0 137.4,448.4 136.1,446.9 135.0,445.1 134.4,443.4 134.2,441.3 134.4,439.3 135.2,437.1 136.2,435.5 137.7,433.7 139.1,432.5 141.3,430.9 144.9,428.8 146.0,427.9 146.7,427.0 147.0,425.6 146.9,424.3 146.3,423.2 145.1,422.1 143.5,421.2 141.7,420.7 139.6,420.3 137.3,420.3 134.2,420.7 127.6,423.2 124.5,424.0 121.6,424.5 118.3,424.8 114.5,424.9 110.7,424.6 107.9,424.2 104.8,423.5 102.3,422.6 99.7,421.5 97.6,420.3 95.1,418.4 87.9,411.5 86.5,409.9 85.6,408.6 84.9,406.9 84.6,405.5 84.5,404.0 84.8,402.1 86.0,399.2 87.2,397.7 88.4,396.4 91.5,394.0 95.4,392.0 101.4,389.8 103.5,388.6 104.5,387.4 105.1,386.1 105.1,384.8 104.5,383.5 103.5,382.5 102.0,381.5 100.1,380.8 98.0,380.4 96.0,380.3 94.2,380.5 89.4,381.5 86.0,381.9 83.5,382.1 80.1,382.1 76.4,381.8 72.8,381.2 69.5,380.3 67.1,379.4 64.5,378.2 62.6,377.0 60.7,375.4 59.4,373.9 57.7,371.0 54.5,364.4 53.9,362.7 53.7,361.3 53.9,358.8 54.9,356.2 56.5,353.9 59.0,351.6 62.5,349.4 66.6,347.6 71.2,346.3 77.2,345.3 79.9,344.2 81.6,343.0 82.6,341.6 83.0,340.1 82.6,338.7 81.8,337.6 80.6,336.6 79.1,335.9 77.1,335.3 74.5,335.0 68.5,335.3 63.5,335.0 58.7,334.2 54.4,332.9 50.6,331.0 49.0,329.9 47.1,328.3 45.1,325.7 44.1,322.9 43.7,316.3 43.8,313.1 44.0,311.4 44.7,309.5 45.7,307.8 47.2,306.0 48.8,304.6 51.3,302.9 53.8,301.5 57.0,300.3 59.6,299.5 62.9,298.8 65.3,298.4 68.8,298.2 73.8,298.1 75.5,297.9 77.2,297.4 78.9,296.7 80.4,295.7 81.5,294.5 82.1,293.2 82.1,291.9 81.5,290.7 80.4,289.5 79.1,288.7 76.4,287.8 69.0,286.9 65.9,286.2 63.4,285.4 60.7,284.2 58.0,282.7 56.3,281.4 54.4,279.5 53.2,277.7 52.5,276.1 52.1,274.2 52.2,272.5 52.8,270.1 56.4,261.9Z"/><path d="M56.7,269.0 57.6,267.4 58.7,266.0 60.0,264.7 61.8,263.4 64.1,261.9 66.1,260.9 70.4,259.3 73.1,258.6 75.6,258.2 80.6,257.7 85.6,257.8 92.3,258.7 95.3,258.6 97.4,258.1 99.4,257.4 101.0,256.4 102.1,255.3 102.8,254.0 102.9,252.7 102.4,251.4 101.5,250.4 100.4,249.5 98.9,248.8 94.4,247.6 91.6,246.6 89.0,245.3 87.3,244.3 85.2,242.6 83.5,240.6 82.3,238.6 81.8,236.9 81.6,235.0 81.8,233.3 82.5,231.4 83.4,229.7 85.7,226.9 91.7,220.7 93.4,219.2 95.0,218.1 98.1,216.4 102.0,214.8 105.9,213.8 110.4,213.1 115.5,212.9 120.5,213.3 125.2,214.2 130.4,215.9 133.5,216.2 136.0,216.1 138.6,215.4 140.6,214.5 142.2,213.2 143.0,212.1 143.3,210.8 143.2,209.6 142.6,208.5 141.1,207.2 136.8,205.0 133.7,202.8 131.5,200.2 130.2,197.4 129.9,196.0 130.0,194.0 130.8,191.1 132.7,188.4 135.4,185.8 143.3,180.8 147.2,178.5 149.5,177.3 152.3,176.2 154.9,175.4 158.1,174.7 161.0,174.3 164.4,174.0 168.2,174.1 171.0,174.3 174.6,174.9 176.9,175.5 179.8,176.5 182.4,177.7 185.8,179.7 187.3,180.3 189.0,180.6 191.2,180.8 193.3,180.7 195.5,180.2 197.4,179.5 199.0,178.5 200.2,177.4 200.9,176.1 201.0,174.9 200.3,173.1 196.4,169.4 195.1,167.7 194.4,166.0 194.0,164.1 194.0,161.9 194.4,160.2 195.5,158.1 196.9,156.3 198.4,154.8 200.5,153.2 202.6,152.0 206.0,150.4 218.2,145.9 221.1,145.0 223.5,144.5 226.3,144.0 228.8,143.8 231.3,143.7 234.7,143.7 239.6,144.3 241.9,144.8 244.5,145.6 248.4,147.3 251.7,149.4 255.2,152.8 257.3,154.0 259.3,154.5 261.5,154.8 263.8,154.7 266.0,154.3 268.0,153.6 269.7,152.7 270.9,151.6 271.6,150.5 271.9,149.3 271.7,148.2 270.2,145.5 269.5,143.6 269.3,142.1 269.5,140.2 270.1,138.0 271.3,135.9 273.0,133.9 274.7,132.5 277.0,131.0 279.2,129.8 282.0,128.6 284.6,127.8 289.7,126.7 301.3,124.5 304.2,124.1 306.7,124.0 310.9,124.0 315.4,124.4 319.3,125.3 323.2,126.6 326.9,128.5 329.8,130.9 331.8,133.5 333.3,136.9 335.0,138.4 337.1,139.3 339.4,139.9 341.9,140.0 344.6,139.7 346.7,139.1 348.3,138.4 349.6,137.5 350.6,136.4 351.2,134.8 351.0,131.4 351.6,128.5 353.3,125.7 355.8,123.1 359.2,120.9 363.2,119.0 367.7,117.6 371.0,117.0 373.5,116.7 385.0,116.2 390.5,116.1 393.4,116.2 396.7,116.5 399.5,117.0 402.5,117.8 405.0,118.7 407.8,120.0 410.1,121.5 411.7,122.8 413.4,124.7 414.2,126.1 414.9,128.0 415.2,130.0 415.1,132.8 415.4,133.9 416.1,134.8 417.4,135.9 419.2,136.7 421.2,137.2 423.2,137.4 425.5,137.4 427.5,137.1 429.5,136.4 431.2,135.5 432.9,133.9 434.8,129.6 436.1,127.8 437.6,126.3 440.0,124.5 442.4,123.1 444.8,122.0 448.1,120.9 451.3,120.1 454.1,119.6 457.5,119.3 460.4,119.2 464.6,119.5 478.3,121.2 481.4,121.7 483.7,122.3 486.2,123.1 488.2,123.9 490.0,124.9 492.2,126.3 494.8,128.8 496.4,131.5 496.9,132.9 497.1,134.6 496.7,137.5 494.9,141.4 495.0,143.1 495.6,144.4 496.8,145.5 498.5,146.3 500.4,147.0 502.6,147.3 504.9,147.3 507.1,146.9 509.0,146.4 510.4,145.7 511.7,144.8 514.0,142.2 516.0,140.5 518.2,138.9 520.1,137.9 523.2,136.6 526.5,135.5 530.1,134.8 533.0,134.4 536.4,134.2 539.3,134.2 542.6,134.5 545.4,135.0 550.2,136.2 560.7,139.4 563.2,140.3 565.1,141.2 567.9,142.9 570.4,145.1 572.0,147.3 573.0,149.9 573.2,152.8 572.3,155.7 570.4,158.5 567.3,161.6 566.6,163.4 566.8,164.9 567.8,166.3 569.4,167.5 571.4,168.3 573.3,168.7 575.3,168.9 577.6,168.7 579.6,168.3 581.9,167.5 585.9,164.8 589.9,163.0 594.4,161.6 599.3,160.7 604.4,160.4 609.4,160.7 614.1,161.5 616.3,162.2 619.1,163.2 627.5,167.6 631.4,169.7 633.3,171.0 635.1,172.6 636.4,174.1 637.5,175.9 638.1,177.5 638.3,179.5 638.1,181.7 637.3,183.8 636.3,185.4 635.2,186.8 633.4,188.5 631.1,190.1 627.5,192.1 626.5,193.0 625.8,194.0 625.5,195.2 625.6,196.5 626.2,197.7 627.4,198.8 629.0,199.7 631.0,200.4 633.1,200.7 635.2,200.7 638.3,200.2 644.8,197.8 648.0,197.0 650.8,196.5 654.2,196.2 658.0,196.1 660.9,196.3 664.5,196.8 667.6,197.5 670.1,198.3 672.8,199.5 674.8,200.6 677.4,202.5 684.6,209.4 686.0,211.1 686.9,212.4 687.6,214.0 687.9,215.5 688.0,216.9 687.7,218.9 686.4,221.7 685.3,223.3 684.0,224.6 680.9,227.0 677.1,229.0 671.0,231.1 669.0,232.4 667.9,233.6 667.4,234.9 667.4,236.2 668.0,237.5 669.1,238.6 670.6,239.5 672.5,240.2 674.5,240.6 676.5,240.7 678.3,240.5 683.1,239.5 686.5,239.0 689.8,238.8 692.4,238.8 696.1,239.1 698.9,239.6 702.3,240.4 705.4,241.5 708.0,242.8 709.9,244.0 711.8,245.6 713.1,247.1 714.8,250.0 718.0,256.6 718.6,258.3 718.8,259.7 718.6,262.1 717.6,264.8 716.0,267.1 713.5,269.4 710.0,271.6 705.9,273.4 701.2,274.7 695.3,275.7 692.6,276.7 690.9,278.0 689.9,279.3 689.5,280.8 689.9,282.3 690.8,283.5 692.0,284.4 693.6,285.1 695.4,285.7 698.0,285.9 704.0,285.7 709.0,285.9 713.7,286.7 718.1,288.1 720.1,289.0 722.4,290.3 725.3,292.6 727.4,295.2 728.4,298.1 728.7,304.7 728.7,307.9 728.5,309.6 727.8,311.5 726.8,313.1 725.3,314.9 723.7,316.4 721.2,318.1 718.7,319.4 716.2,320.4 712.8,321.5 710.4,322.0 707.1,322.5 703.7,322.8 698.7,322.8 696.9,323.1 695.3,323.5 693.4,324.3 692.0,325.3 691.0,326.4 690.4,327.7 690.4,329.0 690.9,330.2 691.9,331.3 693.4,332.3 696.1,333.2 703.5,334.1 706.6,334.8 709.1,335.6 711.8,336.7 714.5,338.2 716.2,339.6 718.0,341.4 719.3,343.2 720.0,344.9 720.3,346.8 720.3,348.5 719.7,350.9 716.2,359.0 715.1,360.8 714.0,362.1 712.5,363.6 711.0,364.8 708.6,366.2 706.7,367.2 702.3,368.8 700.0,369.4 697.2,369.9 692.2,370.4 687.2,370.3 680.4,369.4 677.5,369.5 675.3,370.0 673.4,370.7 671.8,371.7 670.6,372.9 670.0,374.1 669.9,375.4 670.3,376.7 671.2,377.8 672.3,378.6 673.9,379.3 678.3,380.5 681.2,381.6 683.7,382.8 685.4,383.8 687.6,385.6 688.9,387.0 690.2,389.1 690.9,391.2 691.1,393.1 690.9,394.8 690.3,396.8 689.4,398.4 687.0,401.2 681.0,407.4 679.4,408.9 677.8,410.1 674.7,411.8 670.7,413.3 666.9,414.3 662.3,415.0 657.3,415.2 652.3,414.8 647.6,413.9 642.3,412.2 639.2,411.9 636.7,412.1 634.2,412.7 632.0,413.7 630.5,414.9 629.8,416.0 629.4,417.2 629.6,418.5 630.2,419.6 631.6,420.9 636.0,423.1 639.0,425.4 641.3,427.9 642.5,430.7 642.8,432.2 642.8,434.1 641.9,437.0 640.1,439.8 637.3,442.3 629.4,447.3 625.5,449.7 623.3,450.8 620.4,451.9 617.8,452.7 614.6,453.5 611.7,453.9 608.0,454.1 604.6,454.1 600.9,453.7 598.1,453.2 595.9,452.6 593.0,451.6 590.4,450.4 586.9,448.4 585.4,447.9 583.7,447.5 581.5,447.3 579.2,447.5 577.3,447.9 575.3,448.6 573.7,449.6 572.7,450.6 571.9,451.9 571.8,453.2 572.5,455.0 576.4,458.7 577.6,460.5 578.4,462.1 578.8,464.3 578.7,466.2 578.3,467.9 577.3,470.0 575.9,471.9 574.4,473.3 572.3,474.9 570.2,476.2 566.8,477.7 554.5,482.2 551.6,483.1 549.3,483.6 546.4,484.1 543.9,484.4 541.4,484.5 538.0,484.4 533.2,483.8 528.6,482.6 526.5,481.9 524.3,480.8 521.0,478.7 517.6,475.3 515.4,474.2 513.4,473.6 511.2,473.3 508.9,473.4 506.7,473.8 504.7,474.5 503.1,475.4 501.8,476.5 501.1,477.7 500.9,478.9 501.0,479.9 502.5,482.6 503.2,484.6 503.4,486.5 503.3,488.0 502.6,490.1 501.8,491.8 500.1,493.8 498.1,495.6 495.8,497.2 493.6,498.3 490.8,499.5 488.2,500.3 483.1,501.4 471.5,503.6 468.5,504.0 466.0,504.2 461.8,504.2 457.3,503.7 453.4,502.9 449.5,501.5 445.9,499.6 442.9,497.3 440.9,494.7 439.4,491.3 437.7,489.7 435.6,488.8 433.3,488.3 430.6,488.1 428.2,488.4 426.3,488.9 424.6,489.6 423.2,490.6 422.2,491.7 421.5,493.3 421.8,496.7 421.1,499.6 419.5,502.4 416.9,505.0 413.6,507.3 409.6,509.1 407.3,509.9 404.2,510.7 399.3,511.4 387.7,511.9 382.2,512.0 379.3,511.9 376.0,511.6 373.3,511.1 370.2,510.3 367.8,509.5 365.2,508.3 362.7,506.7 360.6,504.9 359.4,503.4 358.3,501.6 357.8,500.1 357.5,498.2 357.7,495.3 357.3,494.3 356.6,493.3 355.5,492.4 353.8,491.5 351.8,490.9 349.6,490.7 347.3,490.7 345.1,491.1 343.1,491.8 341.5,492.6 339.8,494.2 338.0,498.5 336.6,500.4 335.1,501.9 333.0,503.5 330.3,505.1 328.0,506.1 324.7,507.3 321.5,508.1 318.7,508.5 315.3,508.8 312.4,508.9 308.2,508.6 294.4,506.9 291.3,506.4 289.1,505.9 286.6,505.0 284.6,504.2 282.1,502.9 280.6,501.8 278.0,499.4 276.9,497.8 276.2,496.4 275.6,493.6 276.0,490.7 277.8,486.7 277.8,485.0 277.1,483.8 275.9,482.7 274.3,481.8 272.3,481.2 270.2,480.9 267.9,480.9 265.7,481.2 263.8,481.7 262.3,482.4 261.0,483.3 258.7,486.0 256.8,487.7 254.6,489.2 252.7,490.2 249.6,491.5 247.0,492.4 243.4,493.2 239.7,493.7 236.4,493.9 233.4,493.9 230.1,493.6 227.4,493.1 222.5,491.9 212.0,488.7 209.6,487.8 207.6,486.9 204.8,485.2 202.3,483.0 200.7,480.8 199.7,478.2 199.6,475.3 200.5,472.4 202.3,469.6 205.4,466.5 206.2,464.7 205.9,463.1 205.0,461.8 203.3,460.6 201.3,459.8 199.4,459.4 197.4,459.2 195.4,459.4 193.2,459.8 190.9,460.7 186.8,463.3 182.8,465.2 178.3,466.6 173.4,467.4 168.4,467.7 163.4,467.4 158.6,466.6 156.4,466.0 153.6,464.9 145.2,460.6 141.4,458.4 139.5,457.1 137.6,455.5 136.4,454.1 135.3,452.2 134.7,450.6 134.4,448.4 134.7,446.5 135.5,444.3 136.5,442.7 138.0,440.9 139.4,439.6 141.6,438.1 145.2,436.0 146.2,435.1 146.9,434.1 147.3,432.8 147.1,431.5 146.5,430.4 145.4,429.3 143.7,428.4 142.0,427.8 139.8,427.5 137.6,427.4 134.5,427.9 127.9,430.3 124.7,431.1 121.9,431.6 118.5,432.0 114.8,432.0 111.0,431.8 108.2,431.3 105.1,430.6 102.6,429.8 99.9,428.6 97.9,427.5 95.4,425.6 88.1,418.7 86.7,417.1 85.9,415.7 85.2,414.1 84.9,412.7 84.8,411.2 85.1,409.2 86.3,406.4 87.5,404.8 88.7,403.5 91.8,401.1 95.6,399.2 101.7,397.0 103.7,395.7 104.8,394.5 105.3,393.2 105.3,391.9 104.7,390.7 103.8,389.6 102.3,388.7 100.4,388.0 98.3,387.6 96.3,387.5 94.4,387.6 89.7,388.6 86.3,389.1 83.8,389.3 80.4,389.3 76.7,389.0 73.1,388.4 69.7,387.5 67.3,386.6 64.8,385.3 62.9,384.1 61.0,382.5 59.7,381.1 57.9,378.2 54.7,371.5 54.2,369.9 54.0,368.4 54.1,366.0 55.2,363.3 56.8,361.1 59.3,358.7 62.8,356.5 66.9,354.7 71.5,353.5 77.5,352.4 80.1,351.4 81.9,350.1 82.9,348.8 83.3,347.2 82.9,345.8 82.1,344.7 80.9,343.8 79.4,343.0 77.4,342.5 74.7,342.2 68.8,342.5 63.8,342.2 59.0,341.4 54.7,340.0 50.9,338.2 49.3,337.1 47.4,335.5 45.4,332.9 44.3,330.1 44.0,323.4 44.0,320.2 44.3,318.5 45.0,316.6 45.9,315.0 47.4,313.2 49.1,311.8 51.5,310.0 54.1,308.7 57.3,307.4 59.9,306.6 63.1,305.9 65.6,305.6 69.0,305.3 74.0,305.3 75.8,305.0 77.5,304.6 79.2,303.9 80.7,302.9 81.8,301.7 82.3,300.4 82.3,299.1 81.8,297.8 80.7,296.7 79.3,295.8 76.7,294.9 69.3,294.0 66.1,293.3 63.6,292.5 60.9,291.4 58.3,289.9 56.5,288.6 54.7,286.7 53.5,284.9 52.8,283.3 52.4,281.3 52.4,279.6 53.1,277.2 56.7,269.0Z"/></g><path d="M70.9,199.8 71.8,198.5 73.1,197.6 75.0,196.8 77.2,196.3 80.0,196.3 85.3,197.1 89.9,197.3 94.5,197.1 99.6,196.2 103.2,195.3 106.1,194.2 109.2,192.7 111.9,190.9 113.8,189.3 115.3,187.6 116.5,185.8 117.3,184.0 117.7,182.1 117.7,180.2 117.3,178.3 116.5,176.5 115.4,174.8 114.2,173.5 111.1,171.1 109.2,170.0 106.6,168.8 104.0,167.9 100.4,167.0 98.9,166.4 97.3,165.1 96.5,163.6 96.5,162.5 97.2,161.2 104.1,153.9 105.6,152.8 107.6,152.0 109.8,151.5 111.8,151.5 114.0,151.8 119.2,153.4 124.0,154.4 129.2,154.8 134.5,154.6 139.0,154.0 142.7,153.1 146.7,151.7 150.2,149.9 152.0,148.7 153.9,147.1 155.3,145.7 156.6,144.0 157.9,141.0 158.2,139.1 158.1,137.6 157.7,135.7 157.1,134.2 156.0,132.5 154.8,131.1 151.8,128.8 150.0,127.7 146.8,126.1 145.3,124.8 144.8,123.7 144.8,122.6 145.2,121.5 146.1,120.5 150.2,117.8 156.8,113.9 159.1,113.0 161.4,112.6 163.7,112.6 166.3,113.2 167.6,113.8 171.6,116.1 173.7,116.9 176.4,117.8 180.1,118.7 184.5,119.2 187.2,119.4 190.3,119.3 195.6,118.7 198.7,118.1 201.1,117.4 205.6,115.6 208.0,114.3 209.8,113.2 212.7,110.5 214.7,107.7 215.5,105.8 215.8,104.3 215.7,101.7 215.0,99.4 214.0,97.6 213.0,96.3 209.9,93.5 209.2,92.7 208.8,91.3 209.2,89.8 210.2,88.5 211.9,87.5 224.1,83.0 226.1,82.4 228.5,82.2 230.8,82.4 232.8,83.0 234.7,84.1 237.4,86.8 240.3,88.9 243.7,90.6 248.1,92.1 251.2,92.7 255.0,93.2 258.9,93.4 262.9,93.2 266.1,92.8 269.3,92.2 272.3,91.3 275.1,90.3 277.7,89.0 280.0,87.6 282.0,86.1 283.7,84.4 285.0,82.7 285.8,81.2 286.7,78.2 286.7,76.6 286.4,74.7 285.7,72.9 284.4,70.8 284.2,69.7 284.6,68.2 285.9,66.7 287.3,65.9 289.4,65.2 303.0,62.7 304.9,62.5 307.3,62.6 309.4,63.2 311.1,64.0 312.3,65.2 313.8,68.5 315.8,71.2 318.8,73.6 322.6,75.6 326.0,76.9 330.1,77.9 334.5,78.4 339.1,78.6 341.8,78.4 344.9,78.1 347.6,77.6 350.6,76.9 355.2,75.2 357.6,73.9 359.5,72.7 361.5,71.2 362.9,69.8 364.2,68.1 365.1,66.6 366.0,63.7 366.1,62.1 365.8,59.7 366.4,58.1 367.4,57.1 368.8,56.3 370.4,55.6 372.3,55.2 378.3,54.9 387.6,54.7 390.3,55.0 392.2,55.7 393.8,56.7 394.8,58.1 395.0,59.0 394.9,62.4 395.2,63.9 396.0,65.7 397.4,67.8 399.8,70.0 401.8,71.4 403.6,72.5 407.9,74.2 410.3,74.8 413.2,75.5 418.5,76.0 421.7,76.0 424.3,75.9 429.5,75.1 432.5,74.4 434.9,73.7 439.2,71.8 442.0,70.1 444.7,67.9 446.2,66.2 447.1,64.7 448.4,61.4 449.0,60.5 450.3,59.4 452.5,58.4 454.7,57.9 457.1,57.8 471.0,59.5 473.0,59.9 474.8,60.7 476.1,61.8 476.8,63.1 476.8,64.6 475.2,67.8 474.6,70.5 474.9,73.1 476.0,76.0 477.6,78.1 479.3,79.7 481.8,81.4 484.7,82.9 487.4,83.9 490.3,84.7 493.3,85.3 496.5,85.7 499.8,85.9 503.1,85.8 506.3,85.5 509.5,84.9 512.5,84.2 514.9,83.5 519.1,81.6 521.1,80.4 523.2,78.9 524.9,77.3 526.6,75.2 527.8,74.3 530.0,73.3 532.6,72.8 535.0,72.8 536.8,73.1 549.1,76.8 551.0,77.6 552.3,78.7 552.9,79.8 553.0,81.1 552.4,82.5 549.3,85.5 547.4,88.3 546.5,91.4 546.5,94.4 547.3,96.7 548.9,99.1 551.2,101.4 554.1,103.3 556.1,104.3 558.7,105.3 561.0,106.1 564.0,106.7 566.6,107.1 569.7,107.4 575.1,107.4 578.2,107.0 580.9,106.6 583.9,105.9 586.3,105.1 590.6,103.3 592.5,102.2 595.3,100.3 597.7,99.4 599.5,99.1 601.5,99.0 603.4,99.2 605.1,99.7 609.6,101.9 616.1,105.6 617.6,106.9 618.1,108.2 617.8,109.7 616.9,111.0 615.8,111.8 611.7,114.2 610.1,115.5 608.4,117.1 606.6,119.6 605.6,121.9 605.3,123.4 605.3,125.2 606.1,128.3 606.8,129.7 608.1,131.4 611.0,133.9 613.1,135.2 615.0,136.2 619.5,137.8 624.4,138.8 627.5,139.2 630.1,139.3 634.7,139.1 638.7,138.6 641.7,138.0 644.1,137.3 649.0,135.4 650.5,135.0 652.8,134.7 655.6,134.8 657.6,135.4 659.3,136.3 666.7,143.2 667.5,144.4 667.8,145.7 667.3,147.0 666.3,148.3 664.3,149.4 659.4,151.1 655.7,152.8 652.6,154.9 649.9,157.5 648.6,159.3 647.6,161.5 647.2,163.8 647.3,166.1 647.9,167.9 648.8,169.7 650.2,171.4 651.8,173.0 653.9,174.5 656.2,175.8 658.8,176.9 661.6,177.8 664.5,178.5 667.0,178.9 672.2,179.2 675.0,179.2 678.2,178.9 681.3,178.4 685.1,177.6 687.0,177.4 689.7,177.6 692.1,178.3 693.7,179.2 694.5,180.2 698.4,188.0 698.6,189.3 698.1,190.7 697.0,191.9 695.7,192.8 693.7,193.5 687.8,194.5 683.1,195.8 678.7,197.6 675.1,199.9 672.8,201.9 670.9,204.4 669.7,207.0 669.3,209.6 669.4,211.1 669.9,212.9 670.6,214.5 671.8,216.1 674.5,218.7 676.5,220.1 678.5,221.1 681.0,222.2 683.4,223.0 686.3,223.7 688.8,224.1 693.9,224.5 696.7,224.5 700.9,224.2 703.5,224.5 705.2,225.0 706.6,225.8 707.7,226.7 708.3,227.8 708.5,231.3 708.5,236.6 707.9,238.2 706.6,239.4 704.9,240.3 702.3,241.0 700.7,241.1 694.9,241.2 692.3,241.5 689.2,242.0 684.9,243.1 681.4,244.3 678.9,245.6 677.1,246.7 673.9,249.3 672.7,250.6 671.5,252.4 670.3,255.4 670.1,257.3 670.3,258.8 671.3,261.8 672.4,263.5 673.6,264.8 676.7,267.2 680.0,269.0 683.3,270.3 686.1,271.0 688.6,271.5 694.2,272.1 695.8,272.4 697.7,273.1 699.3,274.4 700.1,275.6 700.1,277.0 696.6,285.1 695.8,286.3 694.3,287.4 692.4,288.2 690.2,288.7 687.4,288.7 682.1,287.9 677.5,287.7 672.9,287.9 667.8,288.8 664.2,289.7 661.3,290.8 658.2,292.3 655.5,294.1 653.6,295.7 652.1,297.4 650.9,299.2 650.1,301.0 649.7,302.9 649.7,304.8 650.1,306.7 650.9,308.5 652.0,310.2 653.2,311.5 656.3,313.9 658.2,315.0 660.8,316.2 663.4,317.1 667.0,318.0 668.5,318.6 670.1,319.9 670.9,321.4 670.8,322.7 670.2,323.8 663.3,331.1 662.1,332.0 660.2,332.9 658.0,333.4 655.6,333.5 653.4,333.2 648.2,331.6 643.4,330.6 638.2,330.2 632.9,330.4 628.4,331.0 624.7,331.9 620.7,333.4 617.2,335.1 615.4,336.3 613.5,337.9 612.1,339.3 610.8,341.0 610.0,342.5 609.4,344.3 609.3,347.4 609.7,349.3 610.3,350.8 611.4,352.5 612.6,353.9 615.6,356.2 617.4,357.3 620.6,358.9 622.1,360.2 622.6,361.3 622.6,362.4 622.2,363.5 621.3,364.5 617.2,367.2 610.6,371.1 608.3,372.0 606.0,372.4 603.7,372.4 601.1,371.8 599.8,371.2 595.8,368.9 593.7,368.1 591.0,367.2 587.3,366.3 582.9,365.8 579.7,365.6 577.1,365.7 571.8,366.3 569.2,366.8 566.3,367.6 561.8,369.4 559.8,370.4 557.6,371.8 554.7,374.5 552.7,377.3 551.9,379.2 551.6,380.7 551.7,383.3 552.4,385.6 553.4,387.4 554.4,388.7 557.5,391.5 558.2,392.3 558.6,393.7 558.2,395.2 557.2,396.5 555.5,397.5 543.3,402.0 541.3,402.6 538.9,402.8 536.6,402.6 534.6,402.0 532.7,400.9 530.0,398.2 527.1,396.1 523.7,394.4 519.3,392.9 515.7,392.2 512.4,391.8 508.5,391.6 504.5,391.8 501.3,392.2 498.1,392.8 495.1,393.7 492.3,394.7 489.7,396.0 487.4,397.4 485.4,398.9 483.7,400.6 482.6,402.0 481.6,403.8 480.7,406.8 480.7,408.7 481.0,410.3 481.7,412.1 483.0,414.2 483.2,415.3 482.8,416.8 481.5,418.3 480.1,419.1 478.0,419.8 464.4,422.3 462.1,422.5 459.8,422.3 457.7,421.7 456.3,421.0 455.1,419.8 453.6,416.5 451.6,413.8 448.6,411.4 444.8,409.4 441.4,408.1 437.3,407.1 432.8,406.5 428.3,406.4 425.6,406.6 422.5,406.9 419.8,407.4 416.8,408.1 412.2,409.8 409.8,411.1 407.9,412.3 405.9,413.8 404.5,415.2 403.2,416.9 402.3,418.4 401.4,421.3 401.3,422.9 401.6,425.3 401.0,426.9 400.0,427.9 398.6,428.7 397.0,429.4 395.1,429.8 389.1,430.1 379.8,430.3 377.1,430.0 375.2,429.3 373.4,428.2 372.6,426.9 372.4,426.0 372.5,422.6 372.2,421.1 371.4,419.3 370.0,417.2 367.6,415.0 366.0,413.8 363.8,412.5 359.5,410.8 357.1,410.2 354.2,409.5 348.9,409.0 345.7,409.0 343.1,409.1 337.9,409.9 335.4,410.4 332.5,411.3 328.2,413.2 325.4,414.9 322.7,417.1 321.2,418.8 320.3,420.3 319.0,423.6 318.4,424.5 316.8,425.8 314.9,426.6 312.7,427.1 310.3,427.2 296.4,425.5 294.4,425.1 292.6,424.3 291.3,423.2 290.6,421.9 290.6,420.4 292.2,417.2 292.8,414.5 292.5,411.9 291.4,409.0 289.8,406.9 288.1,405.3 285.6,403.6 282.7,402.1 280.0,401.1 277.1,400.3 274.1,399.7 270.9,399.3 267.6,399.1 264.3,399.2 261.1,399.5 257.9,400.1 254.9,400.8 252.5,401.5 248.3,403.4 246.3,404.6 244.2,406.1 242.5,407.7 240.8,409.8 239.6,410.7 237.4,411.7 234.8,412.2 232.4,412.2 230.6,411.9 218.3,408.2 216.4,407.4 215.3,406.5 214.5,405.2 214.4,403.9 215.0,402.5 218.1,399.5 220.0,396.7 220.9,393.6 220.9,390.6 220.1,388.3 218.5,385.9 216.2,383.6 213.3,381.7 211.3,380.7 208.7,379.7 206.4,378.9 203.4,378.3 200.8,377.9 197.7,377.6 192.3,377.6 189.2,378.0 186.5,378.4 183.5,379.1 181.1,379.9 176.8,381.7 174.9,382.8 172.1,384.7 169.7,385.6 167.9,385.9 165.9,386.0 164.0,385.8 162.3,385.3 157.8,383.1 151.3,379.4 150.0,378.3 149.3,376.8 149.6,375.3 150.5,374.0 151.6,373.2 155.7,370.8 157.3,369.5 159.0,367.9 160.6,365.7 161.8,363.1 162.1,361.3 162.1,359.8 161.3,356.7 160.6,355.3 159.3,353.6 156.4,351.1 154.7,350.0 152.4,348.8 147.9,347.2 143.0,346.2 139.9,345.8 137.3,345.7 132.7,345.9 128.7,346.4 125.7,347.0 123.3,347.7 118.4,349.6 116.9,350.0 114.6,350.3 111.8,350.2 109.8,349.6 108.1,348.7 100.7,341.8 99.9,340.6 99.6,339.3 100.1,338.0 101.1,336.7 103.1,335.6 108.0,333.9 111.7,332.2 114.8,330.1 117.5,327.5 118.8,325.7 119.8,323.5 120.2,321.2 120.1,318.9 119.5,317.1 118.6,315.3 117.2,313.6 115.6,312.0 113.5,310.5 111.2,309.2 108.6,308.1 105.8,307.2 103.4,306.6 100.4,306.1 95.2,305.8 92.4,305.8 89.2,306.1 86.1,306.6 82.3,307.4 80.4,307.6 77.7,307.4 75.3,306.7 74.0,305.9 72.9,304.8 69.0,297.0 68.8,295.7 69.3,294.3 70.1,293.3 71.7,292.2 73.7,291.5 79.6,290.5 84.3,289.2 88.7,287.4 92.3,285.1 94.6,283.1 96.5,280.6 97.7,278.0 98.1,275.4 98.0,273.9 97.5,272.1 96.8,270.5 95.6,268.9 92.9,266.3 90.9,264.9 88.9,263.9 86.4,262.8 84.0,262.0 81.1,261.3 78.6,260.9 73.5,260.5 70.7,260.5 66.5,260.8 63.9,260.5 62.2,260.0 60.8,259.2 59.7,258.3 59.1,257.2 58.9,253.7 58.9,248.4 59.4,247.0 60.8,245.6 62.9,244.6 65.1,244.0 66.7,243.9 72.5,243.8 75.1,243.5 78.2,243.0 82.5,241.9 86.0,240.7 88.5,239.4 90.3,238.3 93.5,235.7 94.7,234.4 95.9,232.6 97.1,229.6 97.2,226.5 96.7,224.7 96.1,223.3 94.0,220.5 92.4,218.9 90.7,217.8 87.4,216.0 84.1,214.7 81.3,214.0 78.8,213.5 73.2,212.9 71.6,212.6 69.4,211.7 68.1,210.6 67.3,209.4 67.3,208.0 70.9,199.8Z" fill="none" stroke="#ff0a0a" stroke-width="2.05" stroke-linejoin="round"/><g fill="none" stroke="#f0e020" stroke-width="1.6" stroke-linecap="round"><path d="M679.4,335.0L685.7,333.5L690.3,339.3"/><path d="M679.7,342.2L686.0,340.7L690.6,346.5"/><path d="M679.9,349.4L686.2,347.9L690.8,353.7"/><path d="M680.2,356.6L686.5,355.1L691.1,360.9"/><path d="M680.4,363.8L686.7,362.3L691.3,368.1"/><path d="M680.7,370.9L687.0,369.4L691.6,375.2"/><path d="M681.0,378.1L687.3,376.6L691.9,382.4"/><path d="M681.2,385.3L687.5,383.8L692.1,389.6"/><path d="M681.5,392.5L687.8,391.0L692.4,396.8"/><path d="M681.7,399.7L688.0,398.2L692.6,404.0"/></g><line x1="374.1" y1="0" x2="396.3" y2="593" stroke="#2424ec" stroke-width="1.5"/></svg>
<!-- b_bottom -->
<div class="a" style="left:262px;top:672px;width:754px;height:3px;background:#a0a0a0"></div>
<div class="a" style="left:262px;top:675px;width:754px;height:65px;background:#fff"></div>
<div class="a" style="left:262px;top:688px;width:754px;height:13px;background:#3399ff"></div>
<span id="t50" class="t" style="left:264.5px;top:674.5px;font-size:11px;line-height:14px;color:#000;letter-spacing:-0.129px;">Toolpath distance 'Profile1' : 1786.98750425426 + rapids : 0 = total : 1786.98750425426</span>
<span id="t51" class="t" style="left:264.5px;top:687.5px;font-size:11px;line-height:14px;color:#fff;letter-spacing:-0.142px;">Estimated Toolpath 'Profile1' duration : 00:08:56 + rapids : 00:00:00 = total : 00:08:56</span>
<div class="a" style="left:8px;top:742px;width:642px;height:18px;border-top:1px solid #a0a0a0;border-left:1px solid #a0a0a0;border-right:1px solid #fff;border-bottom:1px solid #fff"></div>
<div class="a" style="left:651px;top:742px;width:201px;height:18px;border-top:1px solid #a0a0a0;border-left:1px solid #a0a0a0;border-right:1px solid #fff;border-bottom:1px solid #fff"></div>
<div class="a" style="left:853px;top:742px;width:147px;height:18px;border-top:1px solid #a0a0a0;border-left:1px solid #a0a0a0;border-right:1px solid #fff;border-bottom:1px solid #fff"></div>
<span id="t52" class="t" style="left:654.0px;top:744.0px;font-size:11px;line-height:14px;color:#000;letter-spacing:-0.146px;">Property changed</span>
<span id="t53" class="t" style="left:910.5px;top:744.0px;font-size:11px;line-height:14px;color:#000;letter-spacing:-0.136px;">-14.6729, 19.7686</span>
<svg class="" style="left:1003px;top:747px" width="12" height="12" viewBox="0 0 12 12"><path d="M11.5,1L1,11.5M11.5,5L5,11.5M11.5,9L9,11.5" stroke="#9a9a9a" stroke-width="1.3" fill="none"/><path d="M11.5,2L2,11.5M11.5,6L6,11.5M11.5,10L10,11.5" stroke="#fff" stroke-width="1" fill="none"/></svg>
</body></html>
